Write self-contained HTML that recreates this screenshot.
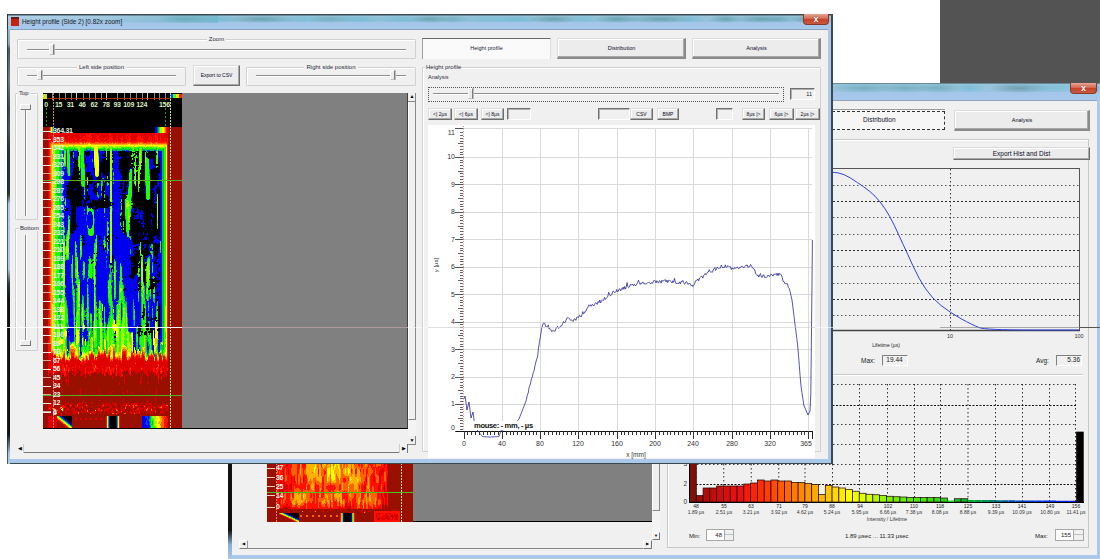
<!DOCTYPE html><html><head><meta charset="utf-8"><style>*{margin:0;padding:0;box-sizing:border-box}
html,body{width:1100px;height:559px;overflow:hidden;background:#fff;position:relative;font-family:"Liberation Sans",sans-serif;font-size:6px;color:#222}
.a{position:absolute}
.t{position:absolute;white-space:nowrap;font-size:6px;color:#2a2a3a;line-height:1}
svg{position:absolute;left:0;top:0}
</style></head><body>
<div class="a" style="left:940px;top:0px;width:160px;height:83px;background:#535353"></div>
<div class="a" style="left:228px;top:83px;width:872px;height:476px;background:#a9c8ea"></div>
<div class="a" style="left:228px;top:463px;width:4px;height:96px;background:linear-gradient(#101010 0%,#101010 70%,#8ab0d8 85%,#a9c8ea 100%)"></div>
<div class="a" style="left:831px;top:83px;width:269px;height:17px;background:linear-gradient(#b4d2e6 0%,#a6cbe6 40%,#a4c6ea 60%,#a8c8ec 100%)"></div>
<div class="a" style="left:831px;top:83px;width:66px;height:10px;background:radial-gradient(ellipse at center,rgba(80,150,160,0.5),rgba(0,0,0,0) 72%)"></div>
<div class="a" style="left:877px;top:83px;width:57px;height:10px;background:radial-gradient(ellipse at center,rgba(80,150,160,0.5),rgba(0,0,0,0) 72%)"></div>
<div class="a" style="left:915px;top:83px;width:49px;height:10px;background:radial-gradient(ellipse at center,rgba(80,150,160,0.5),rgba(0,0,0,0) 72%)"></div>
<div class="a" style="left:954px;top:83px;width:32px;height:10px;background:radial-gradient(ellipse at center,rgba(100,190,220,0.6),rgba(0,0,0,0) 72%)"></div>
<div class="a" style="left:988px;top:83px;width:63px;height:10px;background:radial-gradient(ellipse at center,rgba(45,95,100,0.45),rgba(0,0,0,0) 72%)"></div>
<div class="a" style="left:1025px;top:83px;width:57px;height:10px;background:radial-gradient(ellipse at center,rgba(110,195,225,0.55),rgba(0,0,0,0) 72%)"></div>
<div class="a" style="left:1073px;top:83px;width:27px;height:10px;background:radial-gradient(ellipse at center,rgba(45,95,100,0.45),rgba(0,0,0,0) 72%)"></div>
<div class="a" style="left:1095px;top:83px;width:5px;height:10px;background:radial-gradient(ellipse at center,rgba(110,195,225,0.55),rgba(0,0,0,0) 72%)"></div>
<div class="a" style="left:831px;top:83px;width:269px;height:9px;background:linear-gradient(rgba(100,170,190,0.35),rgba(100,170,190,0.15))"></div>
<div class="a" style="left:831px;top:83px;width:269px;height:1px;background:rgba(70,90,100,0.55)"></div>
<div class="a" style="left:232px;top:100px;width:865px;height:455px;background:#f0f0f0;border-top:1px solid #90a4bc"></div>
<div class="a" style="left:1070px;top:83px;width:27px;height:11px;background:linear-gradient(#e8a594,#d46a55 45%,#c4442c 55%,#c85a40);border:1px solid #8a3a2a;border-top:0;border-radius:0 0 4px 4px"></div>
<div class="t" style="left:1070px;top:83px;width:27px;height:11px;line-height:11px;text-align:center;font-size:9px;font-weight:bold;color:#fff;text-shadow:0 0 1px #501010">x</div>
<div class="a" style="left:267px;top:463px;width:385px;height:59px;background:#808080;border-bottom:1px solid #000"></div>
<svg width="1100" height="559" shape-rendering="crispEdges"><rect x="267" y="463" width="146" height="59" fill="#000000"/><path fill="#0000f0" d="M267 463v59h1v-59zM268 463v59h1v-59zM269 463v59h1v-59zM270 463v59h1v-59zM271 463v59h1v-59zM272 463v59h1v-59zM273 463v59h1v-59zM274 463v59h1v-59zM275 463v59h1v-59zM276 463v59h1v-59zM277 463v59h1v-59zM278 463v59h1v-59zM279 463v59h1v-59zM280 463v59h1v-59zM281 463v59h1v-59zM282 463v59h1v-59zM283 463v59h1v-59zM284 463v59h1v-59zM285 463v59h1v-59zM286 463v59h1v-59zM287 463v50h1v-50zM287 514v8h1v-8zM288 463v50h1v-50zM288 514v8h1v-8zM289 463v50h1v-50zM289 515v7h1v-7zM290 463v50h1v-50zM290 515v7h1v-7zM291 463v50h1v-50zM291 516v6h1v-6zM292 463v50h1v-50zM292 516v6h1v-6zM293 463v50h1v-50zM293 517v5h1v-5zM294 463v50h1v-50zM294 517v5h1v-5zM295 463v50h1v-50zM295 518v4h1v-4zM296 463v50h1v-50zM296 518v4h1v-4zM297 463v50h1v-50zM297 518v4h1v-4zM298 463v50h1v-50zM298 519v3h1v-3zM299 463v59h1v-59zM300 463v59h1v-59zM301 463v59h1v-59zM302 463v59h1v-59zM303 463v59h1v-59zM304 463v59h1v-59zM305 463v59h1v-59zM306 463v59h1v-59zM307 463v59h1v-59zM308 463v59h1v-59zM309 463v59h1v-59zM310 463v59h1v-59zM311 463v59h1v-59zM312 463v59h1v-59zM313 463v59h1v-59zM314 463v59h1v-59zM315 463v59h1v-59zM316 463v59h1v-59zM317 463v59h1v-59zM318 463v59h1v-59zM319 463v59h1v-59zM320 463v59h1v-59zM321 463v59h1v-59zM322 463v59h1v-59zM323 463v59h1v-59zM324 463v59h1v-59zM325 463v59h1v-59zM326 463v59h1v-59zM327 463v59h1v-59zM328 463v59h1v-59zM329 463v59h1v-59zM330 463v59h1v-59zM331 463v59h1v-59zM332 463v59h1v-59zM333 463v59h1v-59zM334 463v59h1v-59zM335 463v59h1v-59zM336 463v59h1v-59zM337 463v59h1v-59zM338 463v59h1v-59zM339 463v59h1v-59zM340 463v59h1v-59zM341 463v59h1v-59zM342 463v59h1v-59zM343 463v59h1v-59zM344 463v50h1v-50zM345 463v50h1v-50zM346 463v50h1v-50zM347 463v50h1v-50zM348 463v50h1v-50zM349 463v50h1v-50zM350 463v50h1v-50zM351 463v59h1v-59zM352 463v59h1v-59zM353 463v59h1v-59zM354 463v59h1v-59zM355 463v59h1v-59zM356 463v59h1v-59zM357 463v59h1v-59zM358 463v59h1v-59zM359 463v59h1v-59zM360 463v59h1v-59zM361 463v59h1v-59zM362 463v59h1v-59zM363 463v59h1v-59zM364 463v59h1v-59zM365 463v59h1v-59zM366 463v59h1v-59zM367 463v59h1v-59zM368 463v59h1v-59zM369 463v59h1v-59zM370 463v59h1v-59zM371 463v59h1v-59zM372 463v59h1v-59zM373 463v59h1v-59zM374 463v59h1v-59zM375 463v59h1v-59zM376 463v59h1v-59zM377 463v59h1v-59zM378 463v59h1v-59zM379 463v59h1v-59zM380 463v59h1v-59zM381 463v59h1v-59zM382 463v59h1v-59zM383 463v59h1v-59zM384 463v59h1v-59zM385 463v59h1v-59zM386 463v59h1v-59zM387 463v59h1v-59zM388 463v59h1v-59zM389 463v59h1v-59zM390 463v59h1v-59zM391 463v59h1v-59zM392 463v59h1v-59zM393 463v59h1v-59zM394 463v59h1v-59zM395 463v59h1v-59zM396 463v59h1v-59zM397 463v59h1v-59zM398 463v59h1v-59zM399 463v59h1v-59zM400 463v59h1v-59zM401 463v59h1v-59zM402 463v59h1v-59zM403 463v59h1v-59zM404 463v59h1v-59zM405 463v59h1v-59zM406 463v59h1v-59zM407 463v59h1v-59zM408 463v59h1v-59zM409 463v59h1v-59zM410 463v59h1v-59zM411 463v59h1v-59zM412 463v59h1v-59z"/><path fill="#0040ff" d="M267 463v59h1v-59zM268 463v59h1v-59zM269 463v59h1v-59zM270 463v59h1v-59zM271 463v59h1v-59zM272 463v59h1v-59zM273 463v59h1v-59zM274 463v59h1v-59zM275 463v59h1v-59zM276 463v59h1v-59zM277 463v59h1v-59zM278 463v59h1v-59zM279 463v59h1v-59zM280 463v59h1v-59zM281 463v59h1v-59zM282 463v59h1v-59zM283 463v59h1v-59zM284 463v59h1v-59zM285 463v50h1v-50zM285 514v8h1v-8zM286 463v50h1v-50zM286 514v8h1v-8zM287 463v50h1v-50zM287 515v7h1v-7zM288 463v50h1v-50zM288 515v7h1v-7zM289 463v50h1v-50zM289 516v6h1v-6zM290 463v50h1v-50zM290 516v6h1v-6zM291 463v50h1v-50zM291 517v5h1v-5zM292 463v50h1v-50zM292 517v5h1v-5zM293 463v50h1v-50zM293 518v4h1v-4zM294 463v50h1v-50zM294 518v4h1v-4zM295 463v50h1v-50zM295 519v3h1v-3zM296 463v50h1v-50zM296 519v3h1v-3zM297 463v50h1v-50zM297 519v3h1v-3zM298 463v50h1v-50zM298 520v2h1v-2zM299 463v59h1v-59zM300 463v59h1v-59zM301 463v59h1v-59zM302 463v59h1v-59zM303 463v59h1v-59zM304 463v59h1v-59zM305 463v59h1v-59zM306 463v59h1v-59zM307 463v59h1v-59zM308 463v59h1v-59zM309 463v59h1v-59zM310 463v59h1v-59zM311 463v59h1v-59zM312 463v59h1v-59zM313 463v59h1v-59zM314 463v59h1v-59zM315 463v59h1v-59zM316 463v59h1v-59zM317 463v59h1v-59zM318 463v59h1v-59zM319 463v59h1v-59zM320 463v59h1v-59zM321 463v59h1v-59zM322 463v59h1v-59zM323 463v59h1v-59zM324 463v59h1v-59zM325 463v59h1v-59zM326 463v59h1v-59zM327 463v59h1v-59zM328 463v59h1v-59zM329 463v59h1v-59zM330 463v59h1v-59zM331 463v59h1v-59zM332 463v59h1v-59zM333 463v59h1v-59zM334 463v59h1v-59zM335 463v59h1v-59zM336 463v59h1v-59zM337 463v59h1v-59zM338 463v59h1v-59zM339 463v59h1v-59zM340 463v59h1v-59zM341 463v59h1v-59zM342 463v59h1v-59zM343 463v50h1v-50zM344 463v50h1v-50zM345 463v50h1v-50zM346 463v50h1v-50zM347 463v50h1v-50zM348 463v50h1v-50zM349 463v50h1v-50zM350 463v50h1v-50zM351 463v50h1v-50zM352 463v59h1v-59zM353 463v59h1v-59zM354 463v59h1v-59zM355 463v59h1v-59zM356 463v59h1v-59zM357 463v59h1v-59zM358 463v59h1v-59zM359 463v59h1v-59zM360 463v59h1v-59zM361 463v59h1v-59zM362 463v59h1v-59zM363 463v59h1v-59zM364 463v59h1v-59zM365 463v59h1v-59zM366 463v59h1v-59zM367 463v59h1v-59zM368 463v59h1v-59zM369 463v59h1v-59zM370 463v59h1v-59zM371 463v59h1v-59zM372 463v59h1v-59zM373 463v59h1v-59zM374 463v59h1v-59zM375 463v59h1v-59zM376 463v59h1v-59zM377 463v59h1v-59zM378 463v59h1v-59zM379 463v59h1v-59zM380 463v59h1v-59zM381 463v59h1v-59zM382 463v59h1v-59zM383 463v59h1v-59zM384 463v59h1v-59zM385 463v59h1v-59zM386 463v59h1v-59zM387 463v59h1v-59zM388 463v59h1v-59zM389 463v59h1v-59zM390 463v59h1v-59zM391 463v59h1v-59zM392 463v59h1v-59zM393 463v59h1v-59zM394 463v59h1v-59zM395 463v59h1v-59zM396 463v59h1v-59zM397 463v59h1v-59zM398 463v59h1v-59zM399 463v59h1v-59zM400 463v59h1v-59zM401 463v59h1v-59zM402 463v59h1v-59zM403 463v59h1v-59zM404 463v59h1v-59zM405 463v59h1v-59zM406 463v59h1v-59zM407 463v59h1v-59zM408 463v59h1v-59zM409 463v59h1v-59zM410 463v59h1v-59zM411 463v59h1v-59zM412 463v59h1v-59z"/><path fill="#00c040" d="M267 463v59h1v-59zM268 463v59h1v-59zM269 463v59h1v-59zM270 463v59h1v-59zM271 463v59h1v-59zM272 463v59h1v-59zM273 463v59h1v-59zM274 463v59h1v-59zM275 463v59h1v-59zM276 463v59h1v-59zM277 463v59h1v-59zM278 463v59h1v-59zM279 463v59h1v-59zM280 463v59h1v-59zM281 463v59h1v-59zM282 463v59h1v-59zM283 463v59h1v-59zM284 463v50h1v-50zM284 514v8h1v-8zM285 463v50h1v-50zM285 514v8h1v-8zM286 463v50h1v-50zM286 515v7h1v-7zM287 463v50h1v-50zM287 515v7h1v-7zM288 463v50h1v-50zM288 516v6h1v-6zM289 463v50h1v-50zM289 516v6h1v-6zM290 463v50h1v-50zM290 516v6h1v-6zM291 463v50h1v-50zM291 517v5h1v-5zM292 463v50h1v-50zM292 517v5h1v-5zM293 463v50h1v-50zM293 518v4h1v-4zM294 463v50h1v-50zM294 518v4h1v-4zM295 463v50h1v-50zM295 519v3h1v-3zM296 463v50h1v-50zM296 519v3h1v-3zM297 463v50h1v-50zM297 520v2h1v-2zM298 463v50h1v-50zM298 520v2h1v-2zM299 463v59h1v-59zM300 463v59h1v-59zM301 463v59h1v-59zM302 463v59h1v-59zM303 463v59h1v-59zM304 463v59h1v-59zM305 463v59h1v-59zM306 463v59h1v-59zM307 463v59h1v-59zM308 463v59h1v-59zM309 463v59h1v-59zM310 463v59h1v-59zM311 463v59h1v-59zM312 463v59h1v-59zM313 463v59h1v-59zM314 463v59h1v-59zM315 463v59h1v-59zM316 463v59h1v-59zM317 463v59h1v-59zM318 463v59h1v-59zM319 463v59h1v-59zM320 463v59h1v-59zM321 463v59h1v-59zM322 463v59h1v-59zM323 463v59h1v-59zM324 463v59h1v-59zM325 463v59h1v-59zM326 463v59h1v-59zM327 463v59h1v-59zM328 463v59h1v-59zM329 463v59h1v-59zM330 463v59h1v-59zM331 463v59h1v-59zM332 463v59h1v-59zM333 463v59h1v-59zM334 463v59h1v-59zM335 463v59h1v-59zM336 463v59h1v-59zM337 463v59h1v-59zM338 463v59h1v-59zM339 463v59h1v-59zM340 463v59h1v-59zM341 463v59h1v-59zM342 463v59h1v-59zM343 463v50h1v-50zM344 463v50h1v-50zM345 463v50h1v-50zM346 463v50h1v-50zM347 463v50h1v-50zM348 463v50h1v-50zM349 463v50h1v-50zM350 463v50h1v-50zM351 463v50h1v-50zM352 463v59h1v-59zM353 463v59h1v-59zM354 463v59h1v-59zM355 463v59h1v-59zM356 463v59h1v-59zM357 463v59h1v-59zM358 463v59h1v-59zM359 463v59h1v-59zM360 463v59h1v-59zM361 463v59h1v-59zM362 463v59h1v-59zM363 463v59h1v-59zM364 463v59h1v-59zM365 463v59h1v-59zM366 463v59h1v-59zM367 463v59h1v-59zM368 463v59h1v-59zM369 463v59h1v-59zM370 463v59h1v-59zM371 463v59h1v-59zM372 463v59h1v-59zM373 463v59h1v-59zM374 463v59h1v-59zM375 463v59h1v-59zM376 463v59h1v-59zM377 463v59h1v-59zM378 463v59h1v-59zM379 463v59h1v-59zM380 463v59h1v-59zM381 463v59h1v-59zM382 463v59h1v-59zM383 463v59h1v-59zM384 463v59h1v-59zM385 463v59h1v-59zM386 463v59h1v-59zM387 463v59h1v-59zM388 463v59h1v-59zM389 463v59h1v-59zM390 463v59h1v-59zM391 463v59h1v-59zM392 463v59h1v-59zM393 463v59h1v-59zM394 463v59h1v-59zM395 463v59h1v-59zM396 463v59h1v-59zM397 463v59h1v-59zM398 463v59h1v-59zM399 463v59h1v-59zM400 463v59h1v-59zM401 463v59h1v-59zM402 463v59h1v-59zM403 463v59h1v-59zM404 463v59h1v-59zM405 463v59h1v-59zM406 463v59h1v-59zM407 463v59h1v-59zM408 463v59h1v-59zM409 463v59h1v-59zM410 463v59h1v-59zM411 463v59h1v-59zM412 463v59h1v-59z"/><path fill="#20ff00" d="M267 463v59h1v-59zM268 463v59h1v-59zM269 463v59h1v-59zM270 463v59h1v-59zM271 463v59h1v-59zM272 463v59h1v-59zM273 463v59h1v-59zM274 463v59h1v-59zM275 463v59h1v-59zM276 463v59h1v-59zM277 463v59h1v-59zM278 463v59h1v-59zM279 463v59h1v-59zM280 463v59h1v-59zM281 463v59h1v-59zM282 463v59h1v-59zM283 463v50h1v-50zM283 514v8h1v-8zM284 463v50h1v-50zM284 514v8h1v-8zM285 463v50h1v-50zM285 514v8h1v-8zM286 463v50h1v-50zM286 515v7h1v-7zM287 463v50h1v-50zM287 515v7h1v-7zM288 463v50h1v-50zM288 516v6h1v-6zM289 463v50h1v-50zM289 516v6h1v-6zM290 463v50h1v-50zM290 517v5h1v-5zM291 463v50h1v-50zM291 517v5h1v-5zM292 463v50h1v-50zM292 518v4h1v-4zM293 463v50h1v-50zM293 518v4h1v-4zM294 463v50h1v-50zM294 519v3h1v-3zM295 463v50h1v-50zM295 519v3h1v-3zM296 463v50h1v-50zM296 520v2h1v-2zM297 463v50h1v-50zM297 520v2h1v-2zM298 463v50h1v-50zM298 521v1h1v-1zM299 463v59h1v-59zM300 463v59h1v-59zM301 463v59h1v-59zM302 463v59h1v-59zM303 463v59h1v-59zM304 463v59h1v-59zM305 463v59h1v-59zM306 463v59h1v-59zM307 463v59h1v-59zM308 463v59h1v-59zM309 463v59h1v-59zM310 463v59h1v-59zM311 463v59h1v-59zM312 463v59h1v-59zM313 463v59h1v-59zM314 463v59h1v-59zM315 463v59h1v-59zM316 463v59h1v-59zM317 463v59h1v-59zM318 463v59h1v-59zM319 463v59h1v-59zM320 463v59h1v-59zM321 463v59h1v-59zM322 463v59h1v-59zM323 463v59h1v-59zM324 463v59h1v-59zM325 463v59h1v-59zM326 463v59h1v-59zM327 463v59h1v-59zM328 463v59h1v-59zM329 463v59h1v-59zM330 463v59h1v-59zM331 463v59h1v-59zM332 463v59h1v-59zM333 463v59h1v-59zM334 463v59h1v-59zM335 463v59h1v-59zM336 463v59h1v-59zM337 463v59h1v-59zM338 463v59h1v-59zM339 463v59h1v-59zM340 463v59h1v-59zM341 463v59h1v-59zM342 463v59h1v-59zM343 463v50h1v-50zM344 463v50h1v-50zM345 463v50h1v-50zM346 463v50h1v-50zM347 463v50h1v-50zM348 463v50h1v-50zM349 463v50h1v-50zM350 463v50h1v-50zM351 463v50h1v-50zM352 463v59h1v-59zM353 463v59h1v-59zM354 463v59h1v-59zM355 463v59h1v-59zM356 463v59h1v-59zM357 463v59h1v-59zM358 463v59h1v-59zM359 463v59h1v-59zM360 463v59h1v-59zM361 463v59h1v-59zM362 463v59h1v-59zM363 463v59h1v-59zM364 463v59h1v-59zM365 463v59h1v-59zM366 463v59h1v-59zM367 463v59h1v-59zM368 463v59h1v-59zM369 463v59h1v-59zM370 463v59h1v-59zM371 463v59h1v-59zM372 463v59h1v-59zM373 463v59h1v-59zM374 463v59h1v-59zM375 463v59h1v-59zM376 463v59h1v-59zM377 463v59h1v-59zM378 463v59h1v-59zM379 463v59h1v-59zM380 463v59h1v-59zM381 463v59h1v-59zM382 463v59h1v-59zM383 463v59h1v-59zM384 463v59h1v-59zM385 463v59h1v-59zM386 463v59h1v-59zM387 463v59h1v-59zM388 463v59h1v-59zM389 463v59h1v-59zM390 463v59h1v-59zM391 463v59h1v-59zM392 463v59h1v-59zM393 463v59h1v-59zM394 463v59h1v-59zM395 463v59h1v-59zM396 463v59h1v-59zM397 463v59h1v-59zM398 463v59h1v-59zM399 463v59h1v-59zM400 463v59h1v-59zM401 463v59h1v-59zM402 463v59h1v-59zM403 463v59h1v-59zM404 463v59h1v-59zM405 463v59h1v-59zM406 463v59h1v-59zM407 463v59h1v-59zM408 463v59h1v-59zM409 463v59h1v-59zM410 463v59h1v-59zM411 463v59h1v-59zM412 463v59h1v-59z"/><path fill="#a0ff00" d="M267 463v59h1v-59zM268 463v59h1v-59zM269 463v59h1v-59zM270 463v59h1v-59zM271 463v59h1v-59zM272 463v59h1v-59zM273 463v59h1v-59zM274 463v59h1v-59zM275 463v59h1v-59zM276 463v59h1v-59zM277 463v59h1v-59zM278 463v59h1v-59zM279 463v59h1v-59zM280 463v59h1v-59zM281 463v59h1v-59zM282 463v59h1v-59zM283 463v50h1v-50zM283 514v8h1v-8zM284 463v50h1v-50zM284 514v8h1v-8zM285 463v50h1v-50zM285 515v7h1v-7zM286 463v50h1v-50zM286 515v7h1v-7zM287 463v50h1v-50zM287 516v6h1v-6zM288 463v50h1v-50zM288 516v6h1v-6zM289 463v50h1v-50zM289 517v5h1v-5zM290 463v50h1v-50zM290 517v5h1v-5zM291 463v50h1v-50zM291 518v4h1v-4zM292 463v50h1v-50zM292 518v4h1v-4zM293 463v50h1v-50zM293 519v3h1v-3zM294 463v50h1v-50zM294 519v3h1v-3zM295 463v50h1v-50zM295 520v2h1v-2zM296 463v50h1v-50zM296 520v2h1v-2zM297 463v50h1v-50zM297 520v2h1v-2zM298 463v50h1v-50zM298 521v1h1v-1zM299 463v59h1v-59zM300 463v59h1v-59zM301 463v59h1v-59zM302 463v59h1v-59zM303 463v59h1v-59zM304 463v59h1v-59zM305 463v59h1v-59zM306 463v59h1v-59zM307 463v59h1v-59zM308 463v59h1v-59zM309 463v59h1v-59zM310 463v59h1v-59zM311 463v59h1v-59zM312 463v59h1v-59zM313 463v59h1v-59zM314 463v59h1v-59zM315 463v59h1v-59zM316 463v59h1v-59zM317 463v59h1v-59zM318 463v59h1v-59zM319 463v59h1v-59zM320 463v59h1v-59zM321 463v59h1v-59zM322 463v59h1v-59zM323 463v59h1v-59zM324 463v59h1v-59zM325 463v59h1v-59zM326 463v59h1v-59zM327 463v59h1v-59zM328 463v59h1v-59zM329 463v59h1v-59zM330 463v59h1v-59zM331 463v59h1v-59zM332 463v59h1v-59zM333 463v59h1v-59zM334 463v59h1v-59zM335 463v59h1v-59zM336 463v59h1v-59zM337 463v59h1v-59zM338 463v59h1v-59zM339 463v59h1v-59zM340 463v59h1v-59zM341 463v59h1v-59zM342 463v50h1v-50zM343 463v50h1v-50zM344 463v50h1v-50zM345 463v50h1v-50zM346 463v50h1v-50zM347 463v50h1v-50zM348 463v50h1v-50zM349 463v50h1v-50zM350 463v50h1v-50zM351 463v50h1v-50zM352 463v50h1v-50zM353 463v59h1v-59zM354 463v59h1v-59zM355 463v59h1v-59zM356 463v59h1v-59zM357 463v59h1v-59zM358 463v59h1v-59zM359 463v59h1v-59zM360 463v59h1v-59zM361 463v59h1v-59zM362 463v59h1v-59zM363 463v59h1v-59zM364 463v59h1v-59zM365 463v59h1v-59zM366 463v59h1v-59zM367 463v59h1v-59zM368 463v59h1v-59zM369 463v59h1v-59zM370 463v59h1v-59zM371 463v59h1v-59zM372 463v59h1v-59zM373 463v59h1v-59zM374 463v59h1v-59zM375 463v59h1v-59zM376 463v59h1v-59zM377 463v59h1v-59zM378 463v59h1v-59zM379 463v59h1v-59zM380 463v59h1v-59zM381 463v59h1v-59zM382 463v59h1v-59zM383 463v59h1v-59zM384 463v59h1v-59zM385 463v59h1v-59zM386 463v59h1v-59zM387 463v59h1v-59zM388 463v59h1v-59zM389 463v59h1v-59zM390 463v59h1v-59zM391 463v59h1v-59zM392 463v59h1v-59zM393 463v59h1v-59zM394 463v59h1v-59zM395 463v59h1v-59zM396 463v59h1v-59zM397 463v59h1v-59zM398 463v59h1v-59zM399 463v59h1v-59zM400 463v59h1v-59zM401 463v59h1v-59zM402 463v59h1v-59zM403 463v59h1v-59zM404 463v59h1v-59zM405 463v59h1v-59zM406 463v59h1v-59zM407 463v59h1v-59zM408 463v59h1v-59zM409 463v59h1v-59zM410 463v59h1v-59zM411 463v59h1v-59zM412 463v59h1v-59z"/><path fill="#ffff00" d="M267 463v59h1v-59zM268 463v59h1v-59zM269 463v59h1v-59zM270 463v59h1v-59zM271 463v59h1v-59zM272 463v59h1v-59zM273 463v59h1v-59zM274 463v59h1v-59zM275 463v59h1v-59zM276 463v59h1v-59zM277 463v59h1v-59zM278 463v59h1v-59zM279 463v59h1v-59zM280 463v59h1v-59zM281 463v59h1v-59zM282 463v50h1v-50zM282 514v8h1v-8zM283 463v50h1v-50zM283 514v8h1v-8zM284 463v50h1v-50zM284 515v7h1v-7zM285 463v50h1v-50zM285 515v7h1v-7zM286 463v50h1v-50zM286 516v6h1v-6zM287 463v50h1v-50zM287 516v6h1v-6zM288 463v50h1v-50zM288 517v5h1v-5zM289 463v50h1v-50zM289 517v5h1v-5zM290 463v50h1v-50zM290 518v4h1v-4zM291 463v50h1v-50zM291 518v4h1v-4zM292 463v50h1v-50zM292 519v3h1v-3zM293 463v50h1v-50zM293 519v3h1v-3zM294 463v50h1v-50zM294 519v3h1v-3zM295 463v50h1v-50zM295 520v2h1v-2zM296 463v50h1v-50zM296 520v2h1v-2zM297 463v50h1v-50zM297 521v1h1v-1zM298 463v50h1v-50zM298 521v1h1v-1zM299 463v59h1v-59zM300 463v59h1v-59zM301 463v59h1v-59zM302 463v59h1v-59zM303 463v59h1v-59zM304 463v59h1v-59zM305 463v59h1v-59zM306 463v59h1v-59zM307 463v59h1v-59zM308 463v59h1v-59zM309 463v59h1v-59zM310 463v59h1v-59zM311 463v59h1v-59zM312 463v59h1v-59zM313 463v59h1v-59zM314 463v59h1v-59zM315 465v57h1v-57zM316 463v59h1v-59zM317 463v59h1v-59zM318 463v59h1v-59zM319 463v59h1v-59zM320 463v59h1v-59zM321 463v59h1v-59zM322 463v59h1v-59zM323 463v59h1v-59zM324 463v59h1v-59zM325 463v59h1v-59zM326 463v59h1v-59zM327 463v59h1v-59zM328 463v59h1v-59zM329 463v59h1v-59zM330 463v59h1v-59zM331 463v59h1v-59zM332 463v59h1v-59zM333 463v59h1v-59zM334 463v59h1v-59zM335 463v59h1v-59zM336 463v59h1v-59zM337 463v59h1v-59zM338 463v59h1v-59zM339 463v59h1v-59zM340 463v59h1v-59zM341 463v59h1v-59zM342 463v50h1v-50zM343 463v50h1v-50zM344 463v50h1v-50zM345 463v50h1v-50zM346 463v50h1v-50zM347 463v50h1v-50zM348 463v50h1v-50zM349 463v50h1v-50zM350 463v50h1v-50zM351 463v50h1v-50zM352 463v50h1v-50zM353 463v59h1v-59zM354 463v59h1v-59zM355 463v59h1v-59zM356 463v59h1v-59zM357 463v59h1v-59zM358 463v59h1v-59zM359 463v59h1v-59zM360 463v59h1v-59zM361 463v59h1v-59zM362 463v59h1v-59zM363 463v59h1v-59zM364 463v59h1v-59zM365 463v59h1v-59zM366 463v59h1v-59zM367 463v59h1v-59zM368 463v59h1v-59zM369 463v59h1v-59zM370 463v59h1v-59zM371 463v59h1v-59zM372 463v59h1v-59zM373 463v59h1v-59zM374 463v59h1v-59zM375 463v59h1v-59zM376 463v59h1v-59zM377 463v59h1v-59zM378 463v59h1v-59zM379 463v59h1v-59zM380 463v59h1v-59zM381 463v59h1v-59zM382 463v59h1v-59zM383 463v59h1v-59zM384 463v59h1v-59zM385 463v59h1v-59zM386 463v59h1v-59zM387 463v59h1v-59zM388 463v59h1v-59zM389 463v59h1v-59zM390 463v59h1v-59zM391 463v59h1v-59zM392 463v59h1v-59zM393 463v59h1v-59zM394 463v59h1v-59zM395 463v59h1v-59zM396 463v59h1v-59zM397 463v59h1v-59zM398 463v59h1v-59zM399 463v59h1v-59zM400 463v59h1v-59zM401 463v59h1v-59zM402 463v59h1v-59zM403 463v59h1v-59zM404 463v59h1v-59zM405 463v59h1v-59zM406 463v59h1v-59zM407 463v59h1v-59zM408 463v59h1v-59zM409 463v59h1v-59zM410 463v59h1v-59zM411 463v59h1v-59zM412 463v59h1v-59z"/><path fill="#ffb000" d="M267 463v59h1v-59zM268 463v59h1v-59zM269 463v59h1v-59zM270 463v59h1v-59zM271 463v59h1v-59zM272 463v59h1v-59zM273 463v59h1v-59zM274 463v59h1v-59zM275 463v59h1v-59zM276 463v59h1v-59zM277 463v59h1v-59zM278 463v59h1v-59zM279 463v59h1v-59zM280 463v59h1v-59zM281 463v50h1v-50zM281 514v8h1v-8zM282 463v50h1v-50zM282 514v8h1v-8zM283 463v50h1v-50zM283 515v7h1v-7zM284 463v50h1v-50zM284 515v7h1v-7zM285 463v50h1v-50zM285 516v6h1v-6zM286 463v50h1v-50zM286 516v6h1v-6zM287 463v50h1v-50zM287 517v5h1v-5zM288 463v50h1v-50zM288 517v5h1v-5zM289 463v50h1v-50zM289 518v4h1v-4zM290 463v50h1v-50zM290 518v4h1v-4zM291 463v50h1v-50zM291 518v4h1v-4zM292 463v50h1v-50zM292 519v3h1v-3zM293 463v50h1v-50zM293 519v3h1v-3zM294 463v50h1v-50zM294 520v2h1v-2zM295 463v50h1v-50zM295 520v2h1v-2zM296 463v50h1v-50zM296 521v1h1v-1zM297 463v50h1v-50zM297 521v1h1v-1zM298 463v50h1v-50zM299 463v59h1v-59zM300 463v59h1v-59zM301 463v59h1v-59zM302 463v59h1v-59zM303 463v31h1v-31zM303 498v24h1v-24zM304 463v59h1v-59zM305 463v59h1v-59zM306 463v59h1v-59zM307 463v59h1v-59zM308 463v59h1v-59zM309 463v59h1v-59zM310 463v59h1v-59zM311 463v59h1v-59zM312 463v59h1v-59zM313 463v59h1v-59zM314 463v4h1v-4zM314 473v49h1v-49zM315 469v53h1v-53zM316 463v59h1v-59zM317 463v59h1v-59zM318 463v59h1v-59zM319 463v59h1v-59zM320 463v59h1v-59zM321 463v59h1v-59zM322 463v59h1v-59zM323 463v59h1v-59zM324 465v57h1v-57zM325 463v59h1v-59zM326 463v59h1v-59zM327 463v5h1v-5zM327 481v41h1v-41zM328 463v5h1v-5zM328 477v45h1v-45zM329 463v5h1v-5zM329 475v47h1v-47zM330 463v59h1v-59zM331 479v43h1v-43zM332 481v41h1v-41zM333 463v7h1v-7zM333 481v41h1v-41zM334 463v3h1v-3zM334 470v4h1v-4zM334 480v42h1v-42zM335 467v55h1v-55zM336 463v59h1v-59zM337 465v57h1v-57zM338 469v53h1v-53zM339 463v4h1v-4zM339 480v42h1v-42zM340 463v59h1v-59zM341 463v59h1v-59zM342 463v50h1v-50zM343 463v50h1v-50zM344 463v50h1v-50zM345 463v6h1v-6zM345 473v40h1v-40zM346 463v50h1v-50zM347 463v50h1v-50zM348 463v5h1v-5zM348 474v13h1v-13zM348 488v25h1v-25zM349 463v6h1v-6zM349 473v40h1v-40zM350 463v14h1v-14zM350 481v32h1v-32zM351 463v16h1v-16zM351 480v33h1v-33zM352 463v50h1v-50zM353 463v59h1v-59zM354 463v59h1v-59zM355 463v59h1v-59zM356 463v59h1v-59zM357 463v16h1v-16zM357 482v40h1v-40zM358 463v59h1v-59zM359 463v59h1v-59zM360 463v59h1v-59zM361 463v59h1v-59zM362 463v59h1v-59zM363 463v59h1v-59zM364 463v59h1v-59zM365 463v59h1v-59zM366 463v59h1v-59zM367 463v59h1v-59zM368 463v59h1v-59zM369 463v59h1v-59zM370 463v59h1v-59zM371 463v59h1v-59zM372 463v59h1v-59zM373 463v59h1v-59zM374 463v59h1v-59zM375 463v59h1v-59zM376 463v59h1v-59zM377 463v59h1v-59zM378 463v59h1v-59zM379 463v59h1v-59zM380 463v59h1v-59zM381 463v59h1v-59zM382 463v59h1v-59zM383 463v59h1v-59zM384 463v59h1v-59zM385 463v59h1v-59zM386 463v59h1v-59zM387 463v59h1v-59zM388 463v59h1v-59zM389 463v59h1v-59zM390 463v59h1v-59zM391 463v59h1v-59zM392 463v59h1v-59zM393 463v59h1v-59zM394 463v59h1v-59zM395 463v59h1v-59zM396 463v59h1v-59zM397 463v59h1v-59zM398 463v59h1v-59zM399 463v59h1v-59zM400 463v59h1v-59zM401 463v59h1v-59zM402 463v59h1v-59zM403 463v59h1v-59zM404 463v59h1v-59zM405 463v59h1v-59zM406 463v59h1v-59zM407 463v59h1v-59zM408 463v59h1v-59zM409 463v59h1v-59zM410 463v59h1v-59zM411 463v59h1v-59zM412 463v59h1v-59z"/><path fill="#ff6000" d="M267 463v59h1v-59zM268 463v59h1v-59zM269 463v59h1v-59zM270 463v59h1v-59zM271 463v59h1v-59zM272 463v59h1v-59zM273 463v59h1v-59zM274 463v59h1v-59zM275 463v59h1v-59zM276 463v59h1v-59zM277 463v59h1v-59zM278 463v59h1v-59zM279 463v59h1v-59zM280 463v50h1v-50zM280 514v8h1v-8zM281 463v50h1v-50zM281 514v8h1v-8zM282 463v50h1v-50zM282 515v7h1v-7zM283 463v50h1v-50zM283 515v7h1v-7zM284 463v50h1v-50zM284 516v6h1v-6zM285 463v50h1v-50zM285 516v6h1v-6zM286 463v50h1v-50zM286 517v5h1v-5zM287 463v50h1v-50zM287 517v5h1v-5zM288 463v50h1v-50zM288 517v5h1v-5zM289 463v50h1v-50zM289 518v4h1v-4zM290 463v50h1v-50zM290 518v4h1v-4zM291 463v32h1v-32zM291 499v14h1v-14zM291 519v3h1v-3zM292 463v38h1v-38zM292 504v9h1v-9zM292 519v3h1v-3zM293 463v37h1v-37zM293 505v8h1v-8zM293 520v2h1v-2zM294 463v29h1v-29zM294 505v8h1v-8zM294 520v2h1v-2zM295 463v29h1v-29zM295 501v12h1v-12zM295 521v1h1v-1zM296 463v29h1v-29zM296 500v13h1v-13zM296 521v1h1v-1zM297 463v29h1v-29zM297 503v10h1v-10zM298 463v32h1v-32zM298 505v8h1v-8zM299 463v31h1v-31zM299 505v17h1v-17zM300 474v18h1v-18zM300 504v18h1v-18zM301 463v37h1v-37zM301 503v19h1v-19zM302 463v38h1v-38zM302 502v9h1v-9zM302 512v10h1v-10zM303 463v28h1v-28zM303 502v20h1v-20zM304 463v30h1v-30zM304 500v22h1v-22zM305 463v31h1v-31zM305 499v23h1v-23zM306 474v13h1v-13zM306 489v11h1v-11zM306 503v19h1v-19zM307 478v44h1v-44zM308 482v40h1v-40zM309 481v41h1v-41zM310 479v43h1v-43zM311 481v3h1v-3zM311 489v33h1v-33zM312 472v1h1v-1zM312 490v32h1v-32zM313 478v5h1v-5zM313 490v32h1v-32zM314 478v44h1v-44zM315 477v34h1v-34zM315 512v10h1v-10zM316 480v42h1v-42zM317 463v5h1v-5zM317 481v41h1v-41zM318 463v14h1v-14zM318 481v41h1v-41zM319 482v13h1v-13zM319 497v25h1v-25zM320 463v2h1v-2zM320 483v5h1v-5zM320 491v3h1v-3zM320 497v25h1v-25zM321 463v13h1v-13zM321 482v40h1v-40zM322 467v34h1v-34zM322 504v18h1v-18zM323 469v31h1v-31zM323 504v18h1v-18zM324 468v31h1v-31zM324 503v19h1v-19zM325 466v28h1v-28zM325 498v24h1v-24zM326 463v31h1v-31zM326 498v24h1v-24zM327 463v2h1v-2zM327 483v12h1v-12zM327 502v20h1v-20zM328 463v1h1v-1zM328 482v18h1v-18zM328 504v18h1v-18zM329 463v1h1v-1zM329 481v41h1v-41zM330 463v4h1v-4zM330 474v48h1v-48zM331 483v11h1v-11zM331 502v20h1v-20zM332 483v18h1v-18zM332 502v20h1v-20zM333 463v3h1v-3zM333 483v39h1v-39zM334 483v11h1v-11zM334 497v25h1v-25zM335 483v9h1v-9zM335 499v23h1v-23zM336 474v18h1v-18zM336 498v24h1v-24zM337 476v14h1v-14zM337 502v20h1v-20zM338 478v13h1v-13zM338 502v20h1v-20zM339 483v11h1v-11zM339 497v25h1v-25zM340 463v6h1v-6zM340 478v14h1v-14zM340 503v19h1v-19zM341 463v30h1v-30zM341 504v9h1v-9zM342 468v15h1v-15zM342 490v23h1v-23zM343 463v6h1v-6zM343 474v27h1v-27zM343 504v9h1v-9zM344 463v5h1v-5zM344 475v38h1v-38zM345 463v1h1v-1zM345 476v37h1v-37zM346 463v5h1v-5zM346 476v37h1v-37zM347 463v4h1v-4zM347 476v37h1v-37zM348 476v8h1v-8zM348 492v21h1v-21zM349 485v9h1v-9zM349 496v17h1v-17zM350 484v9h1v-9zM350 497v16h1v-16zM351 463v13h1v-13zM351 484v29h1v-29zM352 469v5h1v-5zM352 483v30h1v-30zM353 484v29h1v-29zM354 463v5h1v-5zM354 491v31h1v-31zM355 463v14h1v-14zM355 489v33h1v-33zM356 463v14h1v-14zM356 490v32h1v-32zM357 463v5h1v-5zM357 493v29h1v-29zM358 463v6h1v-6zM358 483v15h1v-15zM358 505v17h1v-17zM359 463v7h1v-7zM359 481v16h1v-16zM359 504v18h1v-18zM360 463v14h1v-14zM360 482v10h1v-10zM360 498v24h1v-24zM361 463v59h1v-59zM362 463v59h1v-59zM363 463v37h1v-37zM363 508v14h1v-14zM364 463v49h1v-49zM364 513v9h1v-9zM365 467v28h1v-28zM365 497v25h1v-25zM366 466v25h1v-25zM366 504v18h1v-18zM367 463v23h1v-23zM367 489v33h1v-33zM368 463v14h1v-14zM368 489v33h1v-33zM369 463v26h1v-26zM369 501v21h1v-21zM370 463v32h1v-32zM370 502v20h1v-20zM371 463v59h1v-59zM372 463v59h1v-59zM373 463v59h1v-59zM374 463v59h1v-59zM375 463v34h1v-34zM375 505v17h1v-17zM376 463v59h1v-59zM377 463v59h1v-59zM378 463v59h1v-59zM379 463v59h1v-59zM380 463v59h1v-59zM381 463v59h1v-59zM382 463v59h1v-59zM383 463v59h1v-59zM384 463v59h1v-59zM385 463v59h1v-59zM386 463v59h1v-59zM387 463v59h1v-59zM388 463v59h1v-59zM389 463v59h1v-59zM390 463v59h1v-59zM391 463v59h1v-59zM392 463v59h1v-59zM393 463v59h1v-59zM394 463v59h1v-59zM395 463v59h1v-59zM396 463v59h1v-59zM397 463v59h1v-59zM398 463v59h1v-59zM399 463v59h1v-59zM400 463v59h1v-59zM401 463v59h1v-59zM402 463v59h1v-59zM403 463v59h1v-59zM404 463v59h1v-59zM405 463v59h1v-59zM406 463v59h1v-59zM407 463v59h1v-59zM408 463v59h1v-59zM409 463v59h1v-59zM410 463v59h1v-59zM411 463v59h1v-59zM412 463v59h1v-59z"/><path fill="#ff1000" d="M267 463v59h1v-59zM268 463v59h1v-59zM269 463v59h1v-59zM270 463v59h1v-59zM271 463v59h1v-59zM272 463v59h1v-59zM273 463v59h1v-59zM274 463v59h1v-59zM275 463v59h1v-59zM276 463v59h1v-59zM277 463v7h1v-7zM277 473v13h1v-13zM277 490v32h1v-32zM278 463v59h1v-59zM279 463v8h1v-8zM279 474v39h1v-39zM279 514v8h1v-8zM280 463v50h1v-50zM280 514v8h1v-8zM281 463v37h1v-37zM281 504v9h1v-9zM281 515v7h1v-7zM282 463v50h1v-50zM282 515v7h1v-7zM283 463v36h1v-36zM283 504v9h1v-9zM283 516v6h1v-6zM284 463v31h1v-31zM284 503v10h1v-10zM284 516v6h1v-6zM285 463v5h1v-5zM285 482v11h1v-11zM285 500v13h1v-13zM285 516v6h1v-6zM286 463v12h1v-12zM286 481v32h1v-32zM286 517v5h1v-5zM287 463v50h1v-50zM287 517v5h1v-5zM288 463v50h1v-50zM288 518v4h1v-4zM289 463v50h1v-50zM289 518v4h1v-4zM290 463v31h1v-31zM290 501v12h1v-12zM290 519v3h1v-3zM291 463v5h1v-5zM291 474v18h1v-18zM291 503v10h1v-10zM291 519v3h1v-3zM292 476v22h1v-22zM292 507v6h1v-6zM292 520v2h1v-2zM293 476v22h1v-22zM293 507v6h1v-6zM293 520v2h1v-2zM294 475v11h1v-11zM294 507v6h1v-6zM294 521v1h1v-1zM295 481v8h1v-8zM295 505v8h1v-8zM295 521v1h1v-1zM296 484v4h1v-4zM296 504v9h1v-9zM297 463v25h1v-25zM297 507v6h1v-6zM298 463v11h1v-11zM298 485v3h1v-3zM298 508v5h1v-5zM299 463v6h1v-6zM299 485v4h1v-4zM299 508v14h1v-14zM300 477v13h1v-13zM300 506v9h1v-9zM300 517v5h1v-5zM301 483v9h1v-9zM301 506v9h1v-9zM301 517v5h1v-5zM302 463v5h1v-5zM302 483v9h1v-9zM302 506v5h1v-5zM302 512v10h1v-10zM303 463v26h1v-26zM303 505v17h1v-17zM304 463v7h1v-7zM304 474v16h1v-16zM304 503v19h1v-19zM305 463v5h1v-5zM305 475v15h1v-15zM305 503v19h1v-19zM306 476v8h1v-8zM306 509v6h1v-6zM306 517v5h1v-5zM307 485v5h1v-5zM307 503v12h1v-12zM307 517v5h1v-5zM308 484v7h1v-7zM308 502v20h1v-20zM309 485v5h1v-5zM309 501v21h1v-21zM310 493v5h1v-5zM310 503v19h1v-19zM311 493v5h1v-5zM311 503v19h1v-19zM312 501v14h1v-14zM312 517v5h1v-5zM313 493v22h1v-22zM313 517v5h1v-5zM314 493v29h1v-29zM315 482v10h1v-10zM315 504v7h1v-7zM315 512v10h1v-10zM316 484v38h1v-38zM317 485v37h1v-37zM318 469v5h1v-5zM318 485v13h1v-13zM318 508v7h1v-7zM318 517v5h1v-5zM319 502v13h1v-13zM319 517v5h1v-5zM320 502v20h1v-20zM321 463v4h1v-4zM321 490v8h1v-8zM321 505v17h1v-17zM322 477v21h1v-21zM322 507v15h1v-15zM323 476v21h1v-21zM323 507v15h1v-15zM324 470v5h1v-5zM324 507v8h1v-8zM324 517v5h1v-5zM325 471v3h1v-3zM325 504v11h1v-11zM325 517v5h1v-5zM326 486v3h1v-3zM326 503v19h1v-19zM327 486v4h1v-4zM327 506v16h1v-16zM328 485v6h1v-6zM328 508v14h1v-14zM329 485v7h1v-7zM329 508v14h1v-14zM330 483v9h1v-9zM330 500v15h1v-15zM330 517v5h1v-5zM331 485v5h1v-5zM331 507v8h1v-8zM331 517v5h1v-5zM332 485v6h1v-6zM332 508v14h1v-14zM333 485v37h1v-37zM334 485v5h1v-5zM334 501v21h1v-21zM335 487v2h1v-2zM335 501v21h1v-21zM336 500v15h1v-15zM336 517v5h1v-5zM337 506v9h1v-9zM337 517v5h1v-5zM338 506v16h1v-16zM339 485v6h1v-6zM339 501v21h1v-21zM340 484v6h1v-6zM340 506v16h1v-16zM341 507v6h1v-6zM342 492v8h1v-8zM342 505v8h1v-8zM343 478v4h1v-4zM343 491v8h1v-8zM343 507v6h1v-6zM344 463v2h1v-2zM344 478v5h1v-5zM344 490v9h1v-9zM344 506v7h1v-7zM345 478v4h1v-4zM345 493v20h1v-20zM346 463v1h1v-1zM346 491v22h1v-22zM347 493v20h1v-20zM348 478v3h1v-3zM348 503v10h1v-10zM349 500v13h1v-13zM350 501v12h1v-12zM351 469v4h1v-4zM351 506v7h1v-7zM352 499v14h1v-14zM353 498v15h1v-15zM354 463v2h1v-2zM354 494v28h1v-28zM355 469v5h1v-5zM355 494v28h1v-28zM356 468v6h1v-6zM356 503v19h1v-19zM357 509v13h1v-13zM358 463v3h1v-3zM358 508v14h1v-14zM359 463v4h1v-4zM359 485v4h1v-4zM359 508v14h1v-14zM360 469v3h1v-3zM360 502v20h1v-20zM361 463v5h1v-5zM361 484v38h1v-38zM362 463v4h1v-4zM362 483v17h1v-17zM362 505v17h1v-17zM363 469v5h1v-5zM363 485v13h1v-13zM363 509v13h1v-13zM364 481v13h1v-13zM364 503v9h1v-9zM364 513v9h1v-9zM365 477v15h1v-15zM365 502v20h1v-20zM366 469v16h1v-16zM366 509v13h1v-13zM367 467v7h1v-7zM367 493v4h1v-4zM367 509v13h1v-13zM368 463v5h1v-5zM368 493v4h1v-4zM368 503v19h1v-19zM369 463v2h1v-2zM369 505v17h1v-17zM370 463v3h1v-3zM370 476v15h1v-15zM370 506v16h1v-16zM371 463v5h1v-5zM371 474v18h1v-18zM371 507v15h1v-15zM372 463v7h1v-7zM372 473v13h1v-13zM372 509v13h1v-13zM373 467v20h1v-20zM373 504v18h1v-18zM374 467v25h1v-25zM374 505v17h1v-17zM375 463v5h1v-5zM375 477v15h1v-15zM375 507v15h1v-15zM376 467v7h1v-7zM376 483v10h1v-10zM376 501v21h1v-21zM377 467v8h1v-8zM377 483v39h1v-39zM378 466v10h1v-10zM378 483v17h1v-17zM378 505v17h1v-17zM379 466v33h1v-33zM379 505v17h1v-17zM380 466v34h1v-34zM380 504v18h1v-18zM381 464v20h1v-20zM381 490v32h1v-32zM382 465v57h1v-57zM383 463v59h1v-59zM384 463v9h1v-9zM384 481v41h1v-41zM385 463v8h1v-8zM385 482v40h1v-40zM386 463v59h1v-59zM387 463v59h1v-59zM388 463v59h1v-59zM389 463v59h1v-59zM390 463v59h1v-59zM391 463v59h1v-59zM392 463v59h1v-59zM393 463v59h1v-59zM394 463v59h1v-59zM395 463v59h1v-59zM396 463v59h1v-59zM397 463v59h1v-59zM398 463v59h1v-59zM399 463v59h1v-59zM400 463v59h1v-59zM401 463v59h1v-59zM402 463v59h1v-59zM403 463v59h1v-59zM404 463v59h1v-59zM405 463v59h1v-59zM406 463v59h1v-59zM407 463v59h1v-59zM408 463v59h1v-59zM409 463v59h1v-59zM410 463v59h1v-59zM411 463v59h1v-59zM412 463v59h1v-59z"/><path fill="#e00000" d="M267 463v59h1v-59zM268 463v59h1v-59zM269 463v59h1v-59zM270 463v59h1v-59zM271 463v59h1v-59zM272 463v59h1v-59zM273 463v59h1v-59zM274 463v59h1v-59zM275 463v59h1v-59zM276 463v59h1v-59zM277 463v4h1v-4zM277 507v15h1v-15zM278 463v4h1v-4zM278 479v2h1v-2zM278 495v1h1v-1zM278 507v15h1v-15zM279 463v4h1v-4zM279 483v30h1v-30zM279 514v8h1v-8zM280 463v3h1v-3zM280 481v15h1v-15zM280 508v5h1v-5zM280 515v7h1v-7zM281 481v13h1v-13zM281 508v5h1v-5zM281 515v7h1v-7zM282 471v1h1v-1zM282 483v15h1v-15zM282 508v5h1v-5zM282 515v7h1v-7zM283 470v22h1v-22zM283 506v7h1v-7zM283 516v6h1v-6zM284 482v9h1v-9zM284 506v7h1v-7zM284 516v6h1v-6zM285 485v5h1v-5zM285 506v7h1v-7zM285 517v5h1v-5zM286 463v3h1v-3zM286 484v9h1v-9zM286 504v9h1v-9zM286 517v5h1v-5zM287 463v3h1v-3zM287 485v11h1v-11zM287 504v9h1v-9zM287 518v4h1v-4zM288 469v5h1v-5zM288 507v6h1v-6zM288 518v4h1v-4zM289 485v5h1v-5zM289 506v7h1v-7zM289 519v3h1v-3zM290 484v6h1v-6zM290 507v6h1v-6zM290 519v3h1v-3zM291 477v13h1v-13zM291 509v4h1v-4zM291 520v2h1v-2zM292 509v4h1v-4zM292 520v2h1v-2zM293 509v4h1v-4zM293 521v1h1v-1zM294 478v4h1v-4zM294 508v5h1v-5zM294 521v1h1v-1zM295 508v5h1v-5zM296 509v4h1v-4zM297 509v4h1v-4zM298 509v4h1v-4zM299 509v13h1v-13zM300 508v7h1v-7zM300 517v5h1v-5zM301 509v6h1v-6zM301 517v5h1v-5zM302 509v2h1v-2zM302 512v10h1v-10zM303 463v2h1v-2zM303 477v5h1v-5zM303 508v14h1v-14zM304 463v3h1v-3zM304 507v15h1v-15zM305 508v14h1v-14zM306 509v6h1v-6zM306 517v5h1v-5zM307 509v6h1v-6zM307 517v5h1v-5zM308 508v14h1v-14zM309 509v13h1v-13zM310 509v13h1v-13zM311 509v13h1v-13zM312 507v8h1v-8zM312 517v5h1v-5zM313 509v6h1v-6zM313 517v5h1v-5zM314 509v13h1v-13zM315 486v3h1v-3zM315 509v2h1v-2zM315 512v10h1v-10zM316 509v13h1v-13zM317 509v13h1v-13zM318 509v6h1v-6zM318 517v5h1v-5zM319 509v6h1v-6zM319 517v5h1v-5zM320 509v13h1v-13zM321 509v13h1v-13zM322 509v13h1v-13zM323 509v13h1v-13zM324 509v6h1v-6zM324 517v5h1v-5zM325 509v6h1v-6zM325 517v5h1v-5zM326 509v13h1v-13zM327 509v13h1v-13zM328 509v13h1v-13zM329 509v13h1v-13zM330 506v9h1v-9zM330 517v5h1v-5zM331 509v6h1v-6zM331 517v5h1v-5zM332 509v13h1v-13zM333 509v13h1v-13zM334 509v13h1v-13zM335 509v13h1v-13zM336 509v6h1v-6zM336 517v5h1v-5zM337 509v6h1v-6zM337 517v5h1v-5zM338 508v14h1v-14zM339 506v16h1v-16zM340 508v5h1v-5zM341 508v5h1v-5zM342 508v5h1v-5zM343 509v4h1v-4zM344 509v4h1v-4zM345 502v11h1v-11zM346 503v10h1v-10zM347 505v8h1v-8zM348 506v7h1v-7zM349 504v9h1v-9zM350 505v8h1v-8zM351 509v4h1v-4zM352 509v4h1v-4zM353 504v9h1v-9zM354 508v5h1v-5zM355 509v13h1v-13zM356 509v13h1v-13zM357 509v13h1v-13zM358 509v13h1v-13zM359 509v13h1v-13zM360 509v13h1v-13zM361 509v13h1v-13zM362 509v13h1v-13zM363 509v13h1v-13zM364 485v5h1v-5zM364 509v3h1v-3zM364 513v9h1v-9zM365 485v4h1v-4zM365 509v13h1v-13zM366 476v6h1v-6zM366 509v13h1v-13zM367 509v13h1v-13zM368 509v13h1v-13zM369 509v13h1v-13zM370 509v13h1v-13zM371 509v13h1v-13zM372 509v13h1v-13zM373 474v8h1v-8zM373 509v13h1v-13zM374 476v6h1v-6zM374 508v3h1v-3zM375 463v2h1v-2zM375 509v2h1v-2zM376 509v2h1v-2zM376 513v5h1v-5zM377 509v2h1v-2zM377 513v1h1v-1zM377 515v2h1v-2zM377 518v2h1v-2zM378 486v12h1v-12zM378 507v4h1v-4zM378 513v2h1v-2zM378 517v3h1v-3zM379 471v20h1v-20zM379 507v4h1v-4zM379 513v3h1v-3zM379 517v3h1v-3zM380 470v16h1v-16zM380 508v3h1v-3zM380 513v1h1v-1zM380 517v2h1v-2zM381 469v7h1v-7zM381 492v7h1v-7zM381 509v2h1v-2zM381 513v1h1v-1zM381 517v3h1v-3zM382 468v8h1v-8zM382 494v17h1v-17zM382 513v1h1v-1zM382 517v3h1v-3zM383 468v6h1v-6zM383 487v3h1v-3zM383 498v13h1v-13zM383 515v5h1v-5zM384 463v5h1v-5zM384 484v13h1v-13zM384 505v6h1v-6zM384 515v2h1v-2zM384 518v2h1v-2zM385 463v2h1v-2zM385 491v20h1v-20zM385 513v6h1v-6zM386 491v20h1v-20zM386 513v6h1v-6zM387 463v7h1v-7zM387 474v18h1v-18zM387 506v5h1v-5zM387 513v1h1v-1zM387 515v5h1v-5zM388 463v48h1v-48zM388 513v1h1v-1zM388 515v5h1v-5zM389 463v48h1v-48zM389 513v2h1v-2zM389 517v3h1v-3zM390 463v48h1v-48zM390 513v4h1v-4zM390 519v1h1v-1zM391 463v48h1v-48zM391 514v3h1v-3zM391 519v1h1v-1zM392 463v48h1v-48zM392 514v6h1v-6zM393 463v48h1v-48zM393 515v4h1v-4zM394 463v48h1v-48zM394 513v4h1v-4zM394 519v1h1v-1zM395 463v48h1v-48zM395 513v7h1v-7zM396 463v48h1v-48zM396 514v6h1v-6zM397 463v48h1v-48zM397 514v3h1v-3zM397 518v2h1v-2zM398 463v48h1v-48zM399 463v48h1v-48zM400 463v59h1v-59zM401 463v59h1v-59zM402 463v59h1v-59zM403 463v59h1v-59zM404 463v59h1v-59zM405 463v59h1v-59zM406 463v59h1v-59zM407 463v59h1v-59zM408 463v59h1v-59zM409 463v59h1v-59zM410 463v59h1v-59zM411 463v59h1v-59zM412 463v59h1v-59z"/><path fill="#9a1000" d="M267 463v59h1v-59zM268 463v59h1v-59zM269 463v59h1v-59zM270 463v59h1v-59zM271 463v59h1v-59zM272 463v59h1v-59zM273 463v59h1v-59zM274 463v59h1v-59zM275 463v59h1v-59zM276 463v59h1v-59zM277 510v12h1v-12zM278 510v12h1v-12zM279 463v2h1v-2zM279 490v9h1v-9zM279 503v3h1v-3zM279 510v3h1v-3zM279 514v8h1v-8zM280 509v4h1v-4zM280 515v7h1v-7zM281 509v4h1v-4zM281 515v7h1v-7zM282 485v7h1v-7zM282 509v4h1v-4zM282 516v6h1v-6zM283 508v5h1v-5zM283 516v6h1v-6zM284 508v1h1v-1zM284 512v1h1v-1zM284 517v5h1v-5zM285 509v4h1v-4zM285 517v5h1v-5zM286 507v6h1v-6zM286 518v4h1v-4zM287 508v1h1v-1zM287 511v2h1v-2zM287 518v4h1v-4zM288 509v2h1v-2zM288 519v3h1v-3zM289 509v3h1v-3zM289 519v3h1v-3zM290 509v4h1v-4zM290 520v2h1v-2zM291 509v4h1v-4zM291 520v2h1v-2zM292 509v4h1v-4zM292 520v2h1v-2zM293 510v3h1v-3zM293 521v1h1v-1zM294 509v2h1v-2zM294 512v1h1v-1zM294 521v1h1v-1zM295 509v4h1v-4zM296 509v4h1v-4zM297 509v4h1v-4zM298 509v4h1v-4zM299 509v13h1v-13zM300 509v6h1v-6zM300 517v5h1v-5zM301 509v6h1v-6zM301 517v5h1v-5zM302 509v2h1v-2zM302 512v10h1v-10zM303 509v2h1v-2zM303 512v10h1v-10zM304 509v13h1v-13zM305 509v13h1v-13zM306 509v6h1v-6zM306 517v5h1v-5zM307 509v6h1v-6zM307 517v5h1v-5zM308 509v13h1v-13zM309 509v2h1v-2zM309 512v10h1v-10zM310 509v2h1v-2zM310 512v10h1v-10zM311 509v13h1v-13zM312 509v6h1v-6zM312 517v5h1v-5zM313 509v6h1v-6zM313 517v5h1v-5zM314 509v1h1v-1zM314 512v10h1v-10zM315 509v1h1v-1zM315 512v10h1v-10zM316 509v13h1v-13zM317 509v13h1v-13zM318 509v6h1v-6zM318 517v5h1v-5zM319 509v6h1v-6zM319 517v5h1v-5zM320 509v13h1v-13zM321 509v13h1v-13zM322 509v2h1v-2zM322 512v10h1v-10zM323 509v2h1v-2zM323 513v9h1v-9zM324 509v6h1v-6zM324 517v5h1v-5zM325 509v6h1v-6zM325 517v5h1v-5zM326 509v13h1v-13zM327 509v13h1v-13zM328 509v13h1v-13zM329 509v13h1v-13zM330 511v4h1v-4zM330 517v5h1v-5zM331 509v6h1v-6zM331 517v5h1v-5zM332 509v13h1v-13zM333 509v13h1v-13zM334 509v13h1v-13zM335 509v13h1v-13zM336 509v6h1v-6zM336 517v5h1v-5zM337 509v6h1v-6zM337 517v5h1v-5zM338 509v13h1v-13zM339 509v13h1v-13zM340 511v2h1v-2zM341 509v4h1v-4zM342 511v2h1v-2zM343 509v4h1v-4zM344 509v4h1v-4zM345 512v1h1v-1zM346 509v4h1v-4zM347 509v4h1v-4zM348 508v5h1v-5zM349 507v5h1v-5zM350 508v4h1v-4zM351 509v4h1v-4zM352 509v1h1v-1zM352 511v2h1v-2zM353 509v3h1v-3zM354 509v4h1v-4zM355 509v13h1v-13zM356 509v13h1v-13zM357 509v13h1v-13zM358 509v13h1v-13zM359 509v13h1v-13zM360 509v2h1v-2zM360 512v10h1v-10zM361 509v2h1v-2zM361 513v9h1v-9zM362 511v11h1v-11zM363 509v3h1v-3zM363 513v9h1v-9zM364 509v2h1v-2zM364 513v9h1v-9zM365 509v2h1v-2zM365 513v9h1v-9zM366 509v13h1v-13zM367 509v13h1v-13zM368 509v2h1v-2zM368 512v10h1v-10zM369 509v2h1v-2zM369 512v10h1v-10zM370 509v13h1v-13zM371 509v13h1v-13zM372 509v13h1v-13zM373 509v13h1v-13zM374 509v2h1v-2zM375 509v2h1v-2zM376 509v2h1v-2zM376 516v1h1v-1zM377 509v2h1v-2zM378 508v3h1v-3zM378 519v1h1v-1zM379 510v1h1v-1zM379 518v1h1v-1zM380 509v2h1v-2zM381 494v3h1v-3zM381 509v2h1v-2zM382 505v6h1v-6zM383 504v7h1v-7zM384 463v3h1v-3zM384 486v4h1v-4zM384 509v2h1v-2zM384 519v1h1v-1zM385 494v3h1v-3zM385 504v7h1v-7zM386 505v6h1v-6zM387 477v13h1v-13zM387 508v3h1v-3zM387 517v1h1v-1zM388 463v48h1v-48zM388 517v1h1v-1zM389 463v48h1v-48zM390 463v48h1v-48zM391 463v48h1v-48zM391 516v1h1v-1zM392 463v48h1v-48zM392 516v1h1v-1zM393 463v46h1v-46zM394 463v48h1v-48zM395 463v48h1v-48zM396 463v46h1v-46zM396 516v1h1v-1zM397 463v48h1v-48zM397 516v1h1v-1zM397 519v1h1v-1zM398 463v48h1v-48zM399 463v48h1v-48zM400 463v59h1v-59zM401 463v59h1v-59zM402 463v59h1v-59zM403 463v59h1v-59zM404 463v59h1v-59zM405 463v59h1v-59zM406 463v59h1v-59zM407 463v59h1v-59zM408 463v59h1v-59zM409 463v59h1v-59zM410 463v59h1v-59zM411 463v59h1v-59zM412 463v59h1v-59z"/><rect x="276" y="463" width="1" height="2" fill="#ff9090" opacity="0.85"/><rect x="401" y="463" width="1" height="2" fill="#c0ffb0" opacity="0.9"/><rect x="276" y="466" width="1" height="2" fill="#ff9090" opacity="0.85"/><rect x="401" y="466" width="1" height="2" fill="#c0ffb0" opacity="0.9"/><rect x="276" y="469" width="1" height="2" fill="#ff9090" opacity="0.85"/><rect x="401" y="469" width="1" height="2" fill="#c0ffb0" opacity="0.9"/><rect x="276" y="472" width="1" height="2" fill="#ff9090" opacity="0.85"/><rect x="401" y="472" width="1" height="2" fill="#c0ffb0" opacity="0.9"/><rect x="276" y="475" width="1" height="2" fill="#ff9090" opacity="0.85"/><rect x="401" y="475" width="1" height="2" fill="#c0ffb0" opacity="0.9"/><rect x="276" y="478" width="1" height="2" fill="#ff9090" opacity="0.85"/><rect x="401" y="478" width="1" height="2" fill="#c0ffb0" opacity="0.9"/><rect x="276" y="481" width="1" height="2" fill="#ff9090" opacity="0.85"/><rect x="401" y="481" width="1" height="2" fill="#c0ffb0" opacity="0.9"/><rect x="276" y="484" width="1" height="2" fill="#ff9090" opacity="0.85"/><rect x="401" y="484" width="1" height="2" fill="#c0ffb0" opacity="0.9"/><rect x="276" y="487" width="1" height="2" fill="#ff9090" opacity="0.85"/><rect x="401" y="487" width="1" height="2" fill="#c0ffb0" opacity="0.9"/><rect x="276" y="490" width="1" height="2" fill="#ff9090" opacity="0.85"/><rect x="401" y="490" width="1" height="2" fill="#c0ffb0" opacity="0.9"/><rect x="276" y="493" width="1" height="2" fill="#ff9090" opacity="0.85"/><rect x="401" y="493" width="1" height="2" fill="#c0ffb0" opacity="0.9"/><rect x="276" y="496" width="1" height="2" fill="#ff9090" opacity="0.85"/><rect x="401" y="496" width="1" height="2" fill="#c0ffb0" opacity="0.9"/><rect x="276" y="499" width="1" height="2" fill="#ff9090" opacity="0.85"/><rect x="401" y="499" width="1" height="2" fill="#c0ffb0" opacity="0.9"/><rect x="276" y="502" width="1" height="2" fill="#ff9090" opacity="0.85"/><rect x="401" y="502" width="1" height="2" fill="#c0ffb0" opacity="0.9"/><rect x="276" y="505" width="1" height="2" fill="#ff9090" opacity="0.85"/><rect x="401" y="505" width="1" height="2" fill="#c0ffb0" opacity="0.9"/><rect x="276" y="508" width="1" height="2" fill="#ff9090" opacity="0.85"/><rect x="401" y="508" width="1" height="2" fill="#c0ffb0" opacity="0.9"/><rect x="276" y="511" width="1" height="2" fill="#ff9090" opacity="0.85"/><rect x="401" y="511" width="1" height="2" fill="#c0ffb0" opacity="0.9"/><rect x="276" y="514" width="1" height="2" fill="#ff9090" opacity="0.85"/><rect x="401" y="514" width="1" height="2" fill="#c0ffb0" opacity="0.9"/><rect x="276" y="517" width="1" height="2" fill="#ff9090" opacity="0.85"/><rect x="401" y="517" width="1" height="2" fill="#c0ffb0" opacity="0.9"/><rect x="276" y="520" width="1" height="2" fill="#ff9090" opacity="0.85"/><rect x="401" y="520" width="1" height="2" fill="#c0ffb0" opacity="0.9"/><rect x="267" y="492" width="146" height="1" fill="#50c020"/><rect x="267" y="468" width="8" height="1" fill="#f0d0c0"/><rect x="267" y="477" width="8" height="1" fill="#f0d0c0"/><rect x="267" y="486" width="8" height="1" fill="#f0d0c0"/><rect x="267" y="495" width="8" height="1" fill="#f0d0c0"/><rect x="267" y="507" width="8" height="1" fill="#f0d0c0"/></svg><div class="t" style="left:276px;top:464.4px;font-size:7px;font-weight:bold;color:#f0f0e0;letter-spacing:-0.3px">47</div><div class="t" style="left:276px;top:473.5px;font-size:7px;font-weight:bold;color:#f0f0e0;letter-spacing:-0.3px">36</div><div class="t" style="left:276px;top:482.6px;font-size:7px;font-weight:bold;color:#f0f0e0;letter-spacing:-0.3px">25</div><div class="t" style="left:276px;top:491.7px;font-size:7px;font-weight:bold;color:#f0f0e0;letter-spacing:-0.3px">14</div><div class="t" style="left:276px;top:503.3px;font-size:7px;font-weight:bold;color:#f0f0e0;letter-spacing:-0.3px">0</div><div class="a" style="left:652px;top:463px;width:8px;height:77px;background:#f4f4f4"></div>
<div class="a" style="left:652px;top:463px;width:8px;height:48px;background:#f0f0f0;border-right:1px solid #888;border-bottom:1px solid #888;border-left:1px solid #fff"></div>
<div class="a" style="left:652px;top:532px;width:8px;height:8px;background:#f0f0f0;border-right:1px solid #777;border-bottom:1px solid #777;border-left:1px solid #fff;border-top:1px solid #fff"></div>
<div class="t" style="left:652px;top:534px;width:8px;text-align:center;font-size:4px;color:#000">&#9660;</div><div class="a" style="left:239px;top:540px;width:404px;height:9px;background:#f0f0f0;border-bottom:1px solid #888"></div>
<div class="a" style="left:239px;top:540px;width:9px;height:9px;background:#f0f0f0;border-right:1px solid #999;border-bottom:1px solid #777;border-top:1px solid #fff;border-left:1px solid #fff"></div>
<div class="t" style="left:239px;top:542px;width:9px;text-align:center;font-size:4px;color:#000">&#9664;</div><div class="a" style="left:643px;top:540px;width:9px;height:9px;background:#f0f0f0;border-right:1px solid #777;border-bottom:1px solid #777;border-top:1px solid #fff;border-left:1px solid #fff"></div>
<div class="t" style="left:643px;top:542px;width:9px;text-align:center;font-size:4px;color:#000">&#9654;</div><div class="a" style="left:832px;top:109px;width:113px;height:21px;background:#f6f6f6;border-top:1px solid #9a9a9a"></div>
<div class="a" style="left:832px;top:111px;width:113px;height:19px;border:1px dashed #333"></div>
<div class="t" style="left:863px;top:117px;font-size:6.5px;color:#10102a">Distribution</div>
<div class="a" style="left:954px;top:110px;width:136px;height:21px;background:#ececec;border:1px solid #dcdcdc;border-right:1px solid #6e6e6e;border-bottom:1px solid #6e6e6e;box-shadow:inset -1px -1px 0 #a8a8a8, inset 1px 1px 0 #fff;border-right:2px solid #8a8a8a;border-bottom:2px solid #8a8a8a"></div>
<div class="t" style="left:954px;top:110px;width:136px;height:21px;line-height:21px;text-align:center;font-size:5.5px;color:#0a0a28">Analysis</div>
<div class="a" style="left:954px;top:110px;width:136px;height:21px;"></div>
<div class="a" style="left:667px;top:139px;width:422px;height:409px;border:1px solid #c8c8c8;box-shadow:inset 1px 1px 0 #fff"></div>
<div class="a" style="left:953px;top:147px;width:137px;height:13px;background:#ececec;border:1px solid #dcdcdc;border-right:1px solid #6e6e6e;border-bottom:1px solid #6e6e6e;box-shadow:inset -1px -1px 0 #a8a8a8, inset 1px 1px 0 #fff;"></div>
<div class="t" style="left:953px;top:147px;width:137px;height:13px;line-height:13px;text-align:center;font-size:6.5px;color:#0a0a28">Export Hist and Dist</div>
<svg width="1100" height="559"><rect x="700.5" y="168.5" width="379" height="162" fill="none" stroke="#555" stroke-width="1"/><line x1="700" y1="330.5" x2="1080" y2="330.5" stroke="#444" stroke-width="1.5"/><line x1="701" y1="185.5" x2="1079" y2="185.5" stroke="#222" stroke-width="1" stroke-dasharray="1.5 2.5" opacity="0.75"/><line x1="701" y1="201.5" x2="1079" y2="201.5" stroke="#222" stroke-width="1" stroke-dasharray="2 2" opacity="0.95"/><line x1="701" y1="217.5" x2="1079" y2="217.5" stroke="#222" stroke-width="1" stroke-dasharray="1.5 2.5" opacity="0.75"/><line x1="701" y1="234.5" x2="1079" y2="234.5" stroke="#222" stroke-width="1" stroke-dasharray="1.5 2.5" opacity="0.75"/><line x1="701" y1="250.5" x2="1079" y2="250.5" stroke="#222" stroke-width="1" stroke-dasharray="2 2" opacity="0.95"/><line x1="701" y1="266.5" x2="1079" y2="266.5" stroke="#222" stroke-width="1" stroke-dasharray="1.5 2.5" opacity="0.75"/><line x1="701" y1="283.5" x2="1079" y2="283.5" stroke="#222" stroke-width="1" stroke-dasharray="1.5 2.5" opacity="0.75"/><line x1="701" y1="299.5" x2="1079" y2="299.5" stroke="#222" stroke-width="1" stroke-dasharray="2 2" opacity="0.95"/><line x1="701" y1="315.5" x2="1079" y2="315.5" stroke="#222" stroke-width="1" stroke-dasharray="1.5 2.5" opacity="0.75"/><line x1="950.5" y1="169" x2="950.5" y2="330" stroke="#333" stroke-width="1" stroke-dasharray="1.5 2.5"/><path d="M820.0 172.0 Q832.5 172.0 838.1 172.9 Q843.8 173.8 850.6 178.1 Q857.5 182.5 863.8 186.9 Q870.0 191.2 875.0 196.2 Q880.0 201.2 885.0 208.8 Q890.0 216.2 894.4 225.6 Q898.8 235.0 903.1 244.4 Q907.5 253.8 913.1 266.2 Q918.8 278.8 925.6 288.8 Q932.5 298.8 941.2 305.6 Q950.0 312.5 961.2 318.8 Q972.5 325.0 978.8 327.5 Q985.0 330.0 1032.0 330.0 L1079.0 330.0" fill="none" stroke="#3040e0" stroke-width="1"/><line x1="1080" y1="327.5" x2="1100" y2="327.5" stroke="#555" stroke-width="1"/><line x1="940" y1="327.5" x2="1080" y2="327.5" stroke="#777" stroke-width="0.6"/></svg><div class="t" style="left:940px;top:334px;width:20px;text-align:center;font-size:5.5px;color:#333">10</div>
<div class="t" style="left:1069px;top:334px;width:20px;text-align:center;font-size:5.5px;color:#333">100</div>
<div class="t" style="left:866px;top:343px;width:40px;text-align:center;font-size:5px;color:#222">Lifetime (µs)</div>
<div class="t" style="left:861px;top:358px;font-size:6.5px;color:#222">Max:</div>
<div class="a" style="left:882px;top:355px;width:26px;height:11px;background:#f0f0f0;border-top:1px solid #808080;border-left:1px solid #808080;border-right:1px solid #fff;border-bottom:1px solid #fff"></div>
<div class="t" style="left:882px;top:357px;width:25px;text-align:center;font-size:6.5px;color:#222">19.44</div>
<div class="t" style="left:1036px;top:358px;font-size:6.5px;color:#222">Avg:</div>
<div class="a" style="left:1056px;top:355px;width:26px;height:11px;background:#f0f0f0;border-top:1px solid #808080;border-left:1px solid #808080;border-right:1px solid #fff;border-bottom:1px solid #fff"></div>
<div class="t" style="left:1060px;top:357px;width:20px;text-align:right;font-size:6.5px;color:#222">5.36</div>
<div class="a" style="left:700px;top:374px;width:383px;height:2px;border-top:1px solid #c8c8c8;border-bottom:1px solid #fff"></div>
<svg width="1100" height="559"><line x1="689" y1="384.5" x2="1076" y2="384.5" stroke="#111" stroke-dasharray="1.5 2.5" stroke-width="1" opacity="0.8"/><line x1="689" y1="405.5" x2="1076" y2="405.5" stroke="#111" stroke-dasharray="2 1.5" stroke-width="1" opacity="1"/><line x1="689" y1="424.5" x2="1076" y2="424.5" stroke="#111" stroke-dasharray="1.5 2.5" stroke-width="1" opacity="0.8"/><line x1="689" y1="444.5" x2="1076" y2="444.5" stroke="#111" stroke-dasharray="1.5 2.5" stroke-width="1" opacity="0.8"/><line x1="689" y1="464.5" x2="1076" y2="464.5" stroke="#111" stroke-dasharray="1.5 2.5" stroke-width="1" opacity="0.8"/><line x1="689" y1="484.5" x2="1076" y2="484.5" stroke="#111" stroke-dasharray="2 1.5" stroke-width="1" opacity="1"/><line x1="695.75" y1="384" x2="695.75" y2="502" stroke="#111" stroke-dasharray="1.5 2.5" stroke-width="1" opacity="0.85"/><line x1="723.75" y1="384" x2="723.75" y2="502" stroke="#111" stroke-dasharray="1.5 2.5" stroke-width="1" opacity="0.85"/><line x1="751.25" y1="384" x2="751.25" y2="502" stroke="#111" stroke-dasharray="1.5 2.5" stroke-width="1" opacity="0.85"/><line x1="778.75" y1="384" x2="778.75" y2="502" stroke="#111" stroke-dasharray="1.5 2.5" stroke-width="1" opacity="0.85"/><line x1="805" y1="384" x2="805" y2="502" stroke="#111" stroke-dasharray="1.5 2.5" stroke-width="1" opacity="0.85"/><line x1="832.5" y1="384" x2="832.5" y2="502" stroke="#111" stroke-dasharray="1.5 2.5" stroke-width="1" opacity="0.85"/><line x1="859.5" y1="384" x2="859.5" y2="502" stroke="#111" stroke-dasharray="1.5 2.5" stroke-width="1" opacity="0.85"/><line x1="887.5" y1="384" x2="887.5" y2="502" stroke="#111" stroke-dasharray="1.5 2.5" stroke-width="1" opacity="0.85"/><line x1="914.5" y1="384" x2="914.5" y2="502" stroke="#111" stroke-dasharray="1.5 2.5" stroke-width="1" opacity="0.85"/><line x1="940.5" y1="384" x2="940.5" y2="502" stroke="#111" stroke-dasharray="1.5 2.5" stroke-width="1" opacity="0.85"/><line x1="968" y1="384" x2="968" y2="502" stroke="#111" stroke-dasharray="1.5 2.5" stroke-width="1" opacity="0.85"/><line x1="995.5" y1="384" x2="995.5" y2="502" stroke="#111" stroke-dasharray="1.5 2.5" stroke-width="1" opacity="0.85"/><line x1="1022.5" y1="384" x2="1022.5" y2="502" stroke="#111" stroke-dasharray="1.5 2.5" stroke-width="1" opacity="0.85"/><line x1="1049.5" y1="384" x2="1049.5" y2="502" stroke="#111" stroke-dasharray="1.5 2.5" stroke-width="1" opacity="0.85"/><line x1="1075.5" y1="384" x2="1075.5" y2="502" stroke="#111" stroke-dasharray="1.5 2.5" stroke-width="1" opacity="0.85"/><rect x="689.50" y="440" width="6.79" height="62" fill="#7a1208" stroke="#1a0000" stroke-width="0.7"/><rect x="696.29" y="495.6" width="6.79" height="6.399999999999977" fill="#9a0c08" stroke="#1a0000" stroke-width="0.7"/><rect x="703.08" y="488" width="6.79" height="14" fill="#af0c0a" stroke="#1a0000" stroke-width="0.7"/><rect x="709.87" y="488" width="6.79" height="14" fill="#c40c0c" stroke="#1a0000" stroke-width="0.7"/><rect x="716.66" y="486" width="6.79" height="16" fill="#ce0d0d" stroke="#1a0000" stroke-width="0.7"/><rect x="723.45" y="486" width="6.79" height="16" fill="#d90e0e" stroke="#1a0000" stroke-width="0.7"/><rect x="730.24" y="486" width="6.79" height="16" fill="#e40f0f" stroke="#1a0000" stroke-width="0.7"/><rect x="737.03" y="486" width="6.79" height="16" fill="#ee1010" stroke="#1a0000" stroke-width="0.7"/><rect x="743.82" y="484" width="6.79" height="18" fill="#f41b0b" stroke="#1a0000" stroke-width="0.7"/><rect x="750.61" y="483" width="6.79" height="19" fill="#f92505" stroke="#1a0000" stroke-width="0.7"/><rect x="757.40" y="480" width="6.79" height="22" fill="#ff3000" stroke="#1a0000" stroke-width="0.7"/><rect x="764.19" y="481" width="6.79" height="21" fill="#ff3e00" stroke="#1a0000" stroke-width="0.7"/><rect x="770.98" y="480" width="6.79" height="22" fill="#ff4c00" stroke="#1a0000" stroke-width="0.7"/><rect x="777.77" y="481" width="6.79" height="21" fill="#ff5a00" stroke="#1a0000" stroke-width="0.7"/><rect x="784.56" y="481" width="6.79" height="21" fill="#ff6800" stroke="#1a0000" stroke-width="0.7"/><rect x="791.34" y="482.4" width="6.79" height="19.600000000000023" fill="#ff7800" stroke="#1a0000" stroke-width="0.7"/><rect x="798.13" y="482.4" width="6.79" height="19.600000000000023" fill="#ff8800" stroke="#1a0000" stroke-width="0.7"/><rect x="804.92" y="483.4" width="6.79" height="18.600000000000023" fill="#ff9800" stroke="#1a0000" stroke-width="0.7"/><rect x="811.71" y="484.4" width="6.79" height="17.600000000000023" fill="#ffa800" stroke="#1a0000" stroke-width="0.7"/><rect x="818.50" y="494.4" width="6.79" height="7.600000000000023" fill="#ffb800" stroke="#1a0000" stroke-width="0.7"/><rect x="825.29" y="485.5" width="6.79" height="16.5" fill="#ffc800" stroke="#1a0000" stroke-width="0.7"/><rect x="832.08" y="487" width="6.79" height="15" fill="#ffd800" stroke="#1a0000" stroke-width="0.7"/><rect x="838.87" y="488" width="6.79" height="14" fill="#ffec00" stroke="#1a0000" stroke-width="0.7"/><rect x="845.66" y="489.5" width="6.79" height="12.5" fill="#ffff00" stroke="#1a0000" stroke-width="0.7"/><rect x="852.45" y="491.25" width="6.79" height="10.75" fill="#efff00" stroke="#1a0000" stroke-width="0.7"/><rect x="859.24" y="493.25" width="6.79" height="8.75" fill="#e0ff00" stroke="#1a0000" stroke-width="0.7"/><rect x="866.03" y="494.25" width="6.79" height="7.75" fill="#d0ff00" stroke="#1a0000" stroke-width="0.7"/><rect x="872.82" y="494.75" width="6.79" height="7.25" fill="#b5f900" stroke="#1a0000" stroke-width="0.7"/><rect x="879.61" y="495.5" width="6.79" height="6.5" fill="#9bf400" stroke="#1a0000" stroke-width="0.7"/><rect x="886.40" y="496.25" width="6.79" height="5.75" fill="#80ee00" stroke="#1a0000" stroke-width="0.7"/><rect x="893.19" y="496.75" width="6.79" height="5.25" fill="#74ec00" stroke="#1a0000" stroke-width="0.7"/><rect x="899.98" y="497" width="6.79" height="5" fill="#68eb00" stroke="#1a0000" stroke-width="0.7"/><rect x="906.77" y="497.5" width="6.79" height="4.5" fill="#5cea00" stroke="#1a0000" stroke-width="0.7"/><rect x="913.56" y="497.5" width="6.79" height="4.5" fill="#50e800" stroke="#1a0000" stroke-width="0.7"/><rect x="920.35" y="497.5" width="6.79" height="4.5" fill="#46e306" stroke="#1a0000" stroke-width="0.7"/><rect x="927.14" y="497.5" width="6.79" height="4.5" fill="#3dde0d" stroke="#1a0000" stroke-width="0.7"/><rect x="933.93" y="497.5" width="6.79" height="4.5" fill="#33da13" stroke="#1a0000" stroke-width="0.7"/><rect x="940.72" y="498" width="6.79" height="4" fill="#2ad51a" stroke="#1a0000" stroke-width="0.7"/><rect x="947.51" y="500.5" width="6.79" height="1.5" fill="#20d020"/><rect x="954.30" y="498.75" width="6.79" height="3.25" fill="#15c525" stroke="#1a0000" stroke-width="0.7"/><rect x="961.09" y="498.75" width="6.79" height="3.25" fill="#0bbb2b" stroke="#1a0000" stroke-width="0.7"/><rect x="967.88" y="500" width="6.79" height="2" fill="#00b030"/><rect x="974.67" y="500" width="6.79" height="2" fill="#00a040"/><rect x="981.46" y="500" width="6.79" height="2" fill="#009050"/><rect x="988.24" y="500" width="6.79" height="2" fill="#008060"/><rect x="995.03" y="500.25" width="6.79" height="1.75" fill="#006d7b"/><rect x="1001.82" y="500.25" width="6.79" height="1.75" fill="#005b95"/><rect x="1008.61" y="500.25" width="6.79" height="1.75" fill="#0048b0"/><rect x="1015.40" y="500.5" width="6.79" height="1.5" fill="#0042bc"/><rect x="1022.19" y="500.5" width="6.79" height="1.5" fill="#003cc8"/><rect x="1028.98" y="500.5" width="6.79" height="1.5" fill="#0036d4"/><rect x="1035.77" y="500.5" width="6.79" height="1.5" fill="#0030e0"/><rect x="1042.56" y="500.5" width="6.79" height="1.5" fill="#002be3"/><rect x="1049.35" y="500.5" width="6.79" height="1.5" fill="#0026e6"/><rect x="1056.14" y="500.75" width="6.79" height="1.25" fill="#0022ea"/><rect x="1062.93" y="500.75" width="6.79" height="1.25" fill="#001ded"/><rect x="1069.72" y="500.75" width="6.79" height="1.25" fill="#0018f0"/><rect x="1076.51" y="432" width="6.79" height="70" fill="#000000" stroke="#1a0000" stroke-width="0.7"/><line x1="689" y1="502.5" x2="1084" y2="502.5" stroke="#000" stroke-width="1.2"/><line x1="689.5" y1="440" x2="689.5" y2="502" stroke="#000" stroke-width="1"/></svg><div class="t" style="left:677px;top:499px;width:10px;text-align:right;font-size:6.5px;color:#333">0</div>
<div class="t" style="left:677px;top:481px;width:10px;text-align:right;font-size:6.5px;color:#333">2</div>
<div class="t" style="left:677px;top:461px;width:10px;text-align:right;font-size:6.5px;color:#333">3</div>
<div class="t" style="left:681px;top:504px;width:30px;text-align:center;font-size:5px;color:#222">48</div>
<div class="t" style="left:681px;top:510px;width:30px;text-align:center;font-size:5px;color:#333">1.89 µs</div>
<div class="t" style="left:709px;top:504px;width:30px;text-align:center;font-size:5px;color:#222">55</div>
<div class="t" style="left:709px;top:510px;width:30px;text-align:center;font-size:5px;color:#333">2.51 µs</div>
<div class="t" style="left:736px;top:504px;width:30px;text-align:center;font-size:5px;color:#222">63</div>
<div class="t" style="left:736px;top:510px;width:30px;text-align:center;font-size:5px;color:#333">3.21 µs</div>
<div class="t" style="left:764px;top:504px;width:30px;text-align:center;font-size:5px;color:#222">71</div>
<div class="t" style="left:764px;top:510px;width:30px;text-align:center;font-size:5px;color:#333">3.92 µs</div>
<div class="t" style="left:790px;top:504px;width:30px;text-align:center;font-size:5px;color:#222">79</div>
<div class="t" style="left:790px;top:510px;width:30px;text-align:center;font-size:5px;color:#333">4.62 µs</div>
<div class="t" style="left:817px;top:504px;width:30px;text-align:center;font-size:5px;color:#222">88</div>
<div class="t" style="left:817px;top:510px;width:30px;text-align:center;font-size:5px;color:#333">5.24 µs</div>
<div class="t" style="left:845px;top:504px;width:30px;text-align:center;font-size:5px;color:#222">94</div>
<div class="t" style="left:845px;top:510px;width:30px;text-align:center;font-size:5px;color:#333">5.95 µs</div>
<div class="t" style="left:873px;top:504px;width:30px;text-align:center;font-size:5px;color:#222">102</div>
<div class="t" style="left:873px;top:510px;width:30px;text-align:center;font-size:5px;color:#333">6.66 µs</div>
<div class="t" style="left:899px;top:504px;width:30px;text-align:center;font-size:5px;color:#222">110</div>
<div class="t" style="left:899px;top:510px;width:30px;text-align:center;font-size:5px;color:#333">7.38 µs</div>
<div class="t" style="left:925px;top:504px;width:30px;text-align:center;font-size:5px;color:#222">118</div>
<div class="t" style="left:925px;top:510px;width:30px;text-align:center;font-size:5px;color:#333">8.08 µs</div>
<div class="t" style="left:953px;top:504px;width:30px;text-align:center;font-size:5px;color:#222">125</div>
<div class="t" style="left:953px;top:510px;width:30px;text-align:center;font-size:5px;color:#333">8.88 µs</div>
<div class="t" style="left:981px;top:504px;width:30px;text-align:center;font-size:5px;color:#222">133</div>
<div class="t" style="left:981px;top:510px;width:30px;text-align:center;font-size:5px;color:#333">9.39 µs</div>
<div class="t" style="left:1007px;top:504px;width:30px;text-align:center;font-size:5px;color:#222">141</div>
<div class="t" style="left:1007px;top:510px;width:30px;text-align:center;font-size:5px;color:#333">10.09 µs</div>
<div class="t" style="left:1035px;top:504px;width:30px;text-align:center;font-size:5px;color:#222">149</div>
<div class="t" style="left:1035px;top:510px;width:30px;text-align:center;font-size:5px;color:#333">10.80 µs</div>
<div class="t" style="left:1061px;top:504px;width:30px;text-align:center;font-size:5px;color:#222">156</div>
<div class="t" style="left:1061px;top:510px;width:30px;text-align:center;font-size:5px;color:#333">11.41 µs</div>
<div class="t" style="left:857px;top:517px;width:60px;text-align:center;font-size:5px;color:#333">Intensity / Lifetime</div>
<div class="t" style="left:689px;top:533px;font-size:6px;color:#222">Min:</div>
<div class="a" style="left:706px;top:529px;width:19px;height:12px;background:#fff;border:1px solid #a8a8a8"></div>
<div class="t" style="left:707px;top:532px;width:15px;text-align:right;font-size:6px;color:#222">48</div>
<div class="a" style="left:724px;top:529px;width:10px;height:12px;background:#f0f0f0;border:1px solid #a8a8a8"></div>
<div class="a" style="left:725px;top:534px;width:8px;height:1px;background:#c0c0c0"></div>
<div class="t" style="left:845px;top:533px;font-size:6px;color:#222">1.89 µsec ... 11.33 µsec</div>
<div class="t" style="left:1035px;top:533px;font-size:6px;color:#222">Max:</div>
<div class="a" style="left:1055px;top:529px;width:19px;height:12px;background:#fff;border:1px solid #a8a8a8"></div>
<div class="t" style="left:1056px;top:532px;width:15px;text-align:right;font-size:6px;color:#222">155</div>
<div class="a" style="left:1073px;top:529px;width:11px;height:12px;background:#f0f0f0;border:1px solid #a8a8a8"></div>
<div class="a" style="left:1074px;top:534px;width:9px;height:1px;background:#c0c0c0"></div>
<div class="a" style="left:7px;top:14px;width:826px;height:450px;background:#a9c8ea;border:1px solid #3a4a50;border-right:2px solid #3a4a4e"></div>
<div class="a" style="left:7px;top:29px;width:3px;height:435px;background:linear-gradient(#9ab8d0 0px,#8aa8c0 15px,#4a5a60 20px,#6a8080 50px,#3a4848 80px,#4a5858 100px,#2a3535 120px,#2a3535 165px,#a9c8ea 175px,#a9c8ea 240px,#303838 255px,#101010 270px,#101010 405px,#a9c8ea 425px)"></div>
<div class="a" style="left:7px;top:14px;width:1px;height:450px;background:#1a2a30;opacity:0.7"></div>
<div class="a" style="left:8px;top:15px;width:823px;height:14px;background:linear-gradient(#b4d2e6 0%,#a6cbe6 40%,#a4c6ea 60%,#a8c8ec 100%)"></div>
<div class="a" style="left:98px;top:15px;width:120px;height:8px;background:linear-gradient(90deg,rgba(110,180,200,0),rgba(110,180,200,0.6))"></div>
<div class="a" style="left:158px;top:15px;width:54px;height:8px;background:radial-gradient(ellipse at center,rgba(80,150,160,0.5),rgba(0,0,0,0) 72%)"></div>
<div class="a" style="left:199px;top:15px;width:42px;height:8px;background:radial-gradient(ellipse at center,rgba(100,190,220,0.6),rgba(0,0,0,0) 72%)"></div>
<div class="a" style="left:228px;top:15px;width:68px;height:8px;background:radial-gradient(ellipse at center,rgba(60,120,125,0.55),rgba(0,0,0,0) 72%)"></div>
<div class="a" style="left:275px;top:15px;width:57px;height:8px;background:radial-gradient(ellipse at center,rgba(110,195,225,0.55),rgba(0,0,0,0) 72%)"></div>
<div class="a" style="left:308px;top:15px;width:46px;height:8px;background:radial-gradient(ellipse at center,rgba(80,150,160,0.5),rgba(0,0,0,0) 72%)"></div>
<div class="a" style="left:335px;top:15px;width:49px;height:8px;background:radial-gradient(ellipse at center,rgba(100,190,220,0.6),rgba(0,0,0,0) 72%)"></div>
<div class="a" style="left:376px;top:15px;width:52px;height:8px;background:radial-gradient(ellipse at center,rgba(100,190,220,0.6),rgba(0,0,0,0) 72%)"></div>
<div class="a" style="left:410px;top:15px;width:40px;height:8px;background:radial-gradient(ellipse at center,rgba(60,120,125,0.55),rgba(0,0,0,0) 72%)"></div>
<div class="a" style="left:436px;top:15px;width:33px;height:8px;background:radial-gradient(ellipse at center,rgba(80,150,160,0.5),rgba(0,0,0,0) 72%)"></div>
<div class="a" style="left:457px;top:15px;width:69px;height:8px;background:radial-gradient(ellipse at center,rgba(110,195,225,0.55),rgba(0,0,0,0) 72%)"></div>
<div class="a" style="left:497px;top:15px;width:43px;height:8px;background:radial-gradient(ellipse at center,rgba(100,190,220,0.6),rgba(0,0,0,0) 72%)"></div>
<div class="a" style="left:528px;top:15px;width:51px;height:8px;background:radial-gradient(ellipse at center,rgba(60,120,125,0.55),rgba(0,0,0,0) 72%)"></div>
<div class="a" style="left:564px;top:15px;width:38px;height:8px;background:radial-gradient(ellipse at center,rgba(110,195,225,0.55),rgba(0,0,0,0) 72%)"></div>
<div class="a" style="left:594px;top:15px;width:46px;height:8px;background:radial-gradient(ellipse at center,rgba(60,120,125,0.55),rgba(0,0,0,0) 72%)"></div>
<div class="a" style="left:626px;top:15px;width:70px;height:8px;background:radial-gradient(ellipse at center,rgba(60,120,125,0.55),rgba(0,0,0,0) 72%)"></div>
<div class="a" style="left:677px;top:15px;width:28px;height:8px;background:radial-gradient(ellipse at center,rgba(110,195,225,0.55),rgba(0,0,0,0) 72%)"></div>
<div class="a" style="left:709px;top:15px;width:33px;height:8px;background:radial-gradient(ellipse at center,rgba(60,120,125,0.55),rgba(0,0,0,0) 72%)"></div>
<div class="a" style="left:735px;top:15px;width:52px;height:8px;background:radial-gradient(ellipse at center,rgba(60,120,125,0.55),rgba(0,0,0,0) 72%)"></div>
<div class="a" style="left:764px;top:15px;width:32px;height:8px;background:radial-gradient(ellipse at center,rgba(80,150,160,0.5),rgba(0,0,0,0) 72%)"></div>
<div class="a" style="left:789px;top:15px;width:37px;height:8px;background:radial-gradient(ellipse at center,rgba(45,95,100,0.45),rgba(0,0,0,0) 72%)"></div>
<div class="a" style="left:810px;top:15px;width:21px;height:8px;background:radial-gradient(ellipse at center,rgba(100,190,220,0.6),rgba(0,0,0,0) 72%)"></div>
<div class="a" style="left:8px;top:15px;width:823px;height:7px;background:linear-gradient(90deg,rgba(255,255,255,0) 0px,rgba(100,170,190,0.3) 200px)"></div>
<div class="a" style="left:8px;top:15px;width:823px;height:1px;background:rgba(70,90,100,0.55)"></div>
<div class="a" style="left:10px;top:29px;width:818px;height:430px;background:#f0f0f0;border-top:1px solid #8aa0b8"></div>
<div class="a" style="left:803px;top:14px;width:26px;height:11px;background:linear-gradient(#e8a594,#d46a55 45%,#c4442c 55%,#c85a40);border:1px solid #8a3a2a;border-top:0;border-radius:0 0 4px 4px"></div>
<div class="t" style="left:803px;top:14px;width:26px;height:11px;line-height:11px;text-align:center;font-size:9px;font-weight:bold;color:#fff;text-shadow:0 0 1px #501010">x</div>
<div class="a" style="left:11px;top:17px;width:8px;height:9px;background:#c8200c;border-top:2px solid #6a1a10"></div>
<div class="t" style="left:22px;top:19px;font-size:6.4px;color:#1a1a22">Height profile (Side 2) [0.82x zoom]</div>
<div class="a" style="left:17px;top:39px;width:399px;height:20px;border:1px solid #d0d0d0;box-shadow:inset 1px 1px 0 #fff;border-radius:1px"></div>
<div class="t" style="left:17px;top:36px;width:399px;text-align:center"><span style="background:#f0f0f0;padding:0 2px">Zoom</span></div>
<div class="a" style="left:27px;top:49px;width:379px;height:2px;border-top:1px solid #8e8e8e;border-bottom:1px solid #fff"></div>
<div class="a" style="left:49px;top:44px;width:5px;height:11px;background:#ececec;border-left:1px solid #fff;border-top:1px solid #fff;border-right:1px solid #7a7a7a;border-bottom:1px solid #c0c0c0;box-shadow:1px 0 0 #bdbdbd"></div>
<div class="a" style="left:17px;top:67px;width:169px;height:19px;border:1px solid #d0d0d0;box-shadow:inset 1px 1px 0 #fff;border-radius:1px"></div>
<div class="t" style="left:17px;top:64px;width:169px;text-align:center"><span style="background:#f0f0f0;padding:0 2px">Left side position</span></div>
<div class="a" style="left:27px;top:75px;width:149px;height:2px;border-top:1px solid #8e8e8e;border-bottom:1px solid #fff"></div>
<div class="a" style="left:37px;top:70px;width:5px;height:10px;background:#ececec;border-left:1px solid #fff;border-top:1px solid #fff;border-right:1px solid #7a7a7a;border-bottom:1px solid #c0c0c0;box-shadow:1px 0 0 #bdbdbd"></div>
<div class="a" style="left:193px;top:65px;width:47px;height:21px;background:#ececec;border:1px solid #dcdcdc;border-right:1px solid #6e6e6e;border-bottom:1px solid #6e6e6e;box-shadow:inset -1px -1px 0 #a8a8a8, inset 1px 1px 0 #fff;"></div>
<div class="t" style="left:193px;top:65px;width:47px;height:21px;line-height:21px;text-align:center;font-size:5px;color:#0a0a28">Export to CSV</div>
<div class="a" style="left:246px;top:67px;width:170px;height:19px;border:1px solid #d0d0d0;box-shadow:inset 1px 1px 0 #fff;border-radius:1px"></div>
<div class="t" style="left:246px;top:64px;width:170px;text-align:center"><span style="background:#f0f0f0;padding:0 2px">Right side position</span></div>
<div class="a" style="left:256px;top:75px;width:150px;height:2px;border-top:1px solid #8e8e8e;border-bottom:1px solid #fff"></div>
<div class="a" style="left:390px;top:70px;width:5px;height:10px;background:#ececec;border-left:1px solid #fff;border-top:1px solid #fff;border-right:1px solid #7a7a7a;border-bottom:1px solid #c0c0c0;box-shadow:1px 0 0 #bdbdbd"></div>
<div class="a" style="left:15px;top:93px;width:23px;height:127px;border:1px solid #d0d0d0;box-shadow:inset 1px 1px 0 #fff;border-radius:1px"></div>
<div class="t" style="left:18px;top:90px;background:#f0f0f0;padding:0 1px">Top</div>
<div class="a" style="left:25px;top:110px;width:2px;height:106px;border-left:1px solid #8e8e8e;border-right:1px solid #fff"></div>
<div class="a" style="left:20px;top:104px;width:11px;height:6px;background:#ececec;border-left:1px solid #fff;border-top:1px solid #fff;border-right:1px solid #7a7a7a;border-bottom:1px solid #7a7a7a"></div>
<div class="a" style="left:15px;top:228px;width:23px;height:123px;border:1px solid #d0d0d0;box-shadow:inset 1px 1px 0 #fff;border-radius:1px"></div>
<div class="t" style="left:19px;top:225px;background:#f0f0f0;padding:0 1px">Bottom</div>
<div class="a" style="left:25px;top:235px;width:2px;height:107px;border-left:1px solid #8e8e8e;border-right:1px solid #fff"></div>
<div class="a" style="left:20px;top:340px;width:11px;height:6px;background:#ececec;border-left:1px solid #fff;border-top:1px solid #fff;border-right:1px solid #7a7a7a;border-bottom:1px solid #7a7a7a"></div>
<div class="a" style="left:43px;top:93px;width:365px;height:336px;background:#808080;border-right:1px solid #404040;border-bottom:1px solid #000"></div>
<svg width="1100" height="559" shape-rendering="crispEdges"><rect x="43" y="93" width="139" height="335" fill="#000000"/><path fill="#0000f0" d="M43 127v301h1v-301zM44 127v301h1v-301zM45 127v301h1v-301zM46 127v301h1v-301zM47 127v301h1v-301zM48 127v301h1v-301zM49 127v301h1v-301zM50 127v301h1v-301zM51 127v301h1v-301zM52 127v301h1v-301zM53 127v301h1v-301zM54 127v301h1v-301zM55 133v295h1v-295zM56 133v295h1v-295zM57 133v295h1v-295zM58 133v295h1v-295zM59 133v295h1v-295zM60 133v295h1v-295zM61 133v295h1v-295zM62 133v283h1v-283zM62 417v11h1v-11zM63 133v283h1v-283zM63 417v11h1v-11zM64 133v283h1v-283zM64 418v10h1v-10zM65 133v76h1v-76zM65 211v205h1v-205zM65 419v9h1v-9zM66 133v52h1v-52zM66 187v4h1v-4zM66 195v2h1v-2zM66 198v10h1v-10zM66 211v205h1v-205zM66 420v8h1v-8zM67 133v52h1v-52zM67 199v9h1v-9zM67 211v8h1v-8zM67 220v196h1v-196zM67 421v7h1v-7zM68 133v50h1v-50zM68 199v217h1v-217zM68 421v7h1v-7zM69 133v47h1v-47zM69 200v216h1v-216zM69 422v6h1v-6zM70 133v20h1v-20zM70 157v22h1v-22zM70 205v20h1v-20zM70 227v1h1v-1zM70 233v183h1v-183zM70 423v5h1v-5zM71 133v18h1v-18zM71 156v20h1v-20zM71 234v182h1v-182zM71 424v4h1v-4zM72 133v18h1v-18zM72 155v2h1v-2zM72 159v14h1v-14zM72 174v1h1v-1zM72 234v194h1v-194zM73 133v26h1v-26zM73 161v4h1v-4zM73 166v2h1v-2zM73 231v1h1v-1zM73 233v195h1v-195zM74 133v24h1v-24zM74 189v1h1v-1zM74 231v197h1v-197zM75 133v25h1v-25zM75 189v1h1v-1zM75 230v198h1v-198zM76 133v27h1v-27zM76 206v17h1v-17zM76 227v201h1v-201zM77 133v24h1v-24zM77 158v2h1v-2zM77 165v1h1v-1zM77 208v18h1v-18zM77 227v201h1v-201zM78 133v19h1v-19zM78 156v11h1v-11zM78 207v221h1v-221zM79 133v38h1v-38zM79 173v2h1v-2zM79 178v1h1v-1zM79 206v222h1v-222zM80 133v43h1v-43zM80 178v3h1v-3zM80 206v222h1v-222zM81 133v54h1v-54zM81 206v222h1v-222zM82 133v54h1v-54zM82 195v1h1v-1zM82 200v37h1v-37zM82 238v5h1v-5zM82 246v182h1v-182zM83 133v56h1v-56zM83 190v6h1v-6zM83 197v1h1v-1zM83 200v4h1v-4zM83 207v28h1v-28zM83 241v2h1v-2zM83 245v183h1v-183zM84 133v67h1v-67zM84 207v33h1v-33zM84 241v2h1v-2zM84 245v183h1v-183zM85 133v18h1v-18zM85 155v3h1v-3zM85 161v2h1v-2zM85 169v6h1v-6zM85 180v5h1v-5zM85 188v12h1v-12zM85 206v222h1v-222zM86 133v19h1v-19zM86 157v6h1v-6zM86 167v5h1v-5zM86 188v1h1v-1zM86 195v1h1v-1zM86 202v226h1v-226zM87 133v19h1v-19zM87 156v16h1v-16zM87 177v8h1v-8zM87 189v3h1v-3zM87 197v1h1v-1zM87 201v2h1v-2zM87 205v223h1v-223zM88 133v18h1v-18zM88 156v16h1v-16zM88 188v7h1v-7zM88 200v3h1v-3zM88 207v221h1v-221zM89 133v18h1v-18zM89 155v17h1v-17zM89 184v11h1v-11zM89 200v3h1v-3zM89 208v220h1v-220zM90 133v39h1v-39zM90 174v2h1v-2zM90 184v16h1v-16zM90 207v221h1v-221zM91 133v42h1v-42zM91 184v19h1v-19zM91 208v49h1v-49zM91 258v1h1v-1zM91 260v2h1v-2zM91 264v164h1v-164zM92 133v43h1v-43zM92 183v16h1v-16zM92 209v52h1v-52zM92 262v166h1v-166zM93 133v35h1v-35zM93 170v10h1v-10zM93 182v2h1v-2zM93 187v2h1v-2zM93 192v8h1v-8zM93 207v1h1v-1zM93 209v52h1v-52zM93 262v166h1v-166zM94 133v49h1v-49zM94 193v7h1v-7zM94 206v2h1v-2zM94 209v44h1v-44zM94 254v174h1v-174zM95 133v50h1v-50zM95 185v2h1v-2zM95 195v5h1v-5zM95 210v218h1v-218zM96 133v49h1v-49zM96 184v2h1v-2zM96 195v6h1v-6zM96 209v44h1v-44zM96 254v174h1v-174zM97 133v44h1v-44zM97 183v8h1v-8zM97 192v8h1v-8zM97 209v34h1v-34zM97 244v8h1v-8zM97 254v174h1v-174zM98 133v44h1v-44zM98 183v16h1v-16zM98 208v220h1v-220zM99 133v29h1v-29zM99 163v1h1v-1zM99 168v3h1v-3zM99 183v15h1v-15zM99 208v28h1v-28zM99 240v5h1v-5zM99 246v2h1v-2zM99 249v179h1v-179zM100 133v30h1v-30zM100 181v19h1v-19zM100 208v30h1v-30zM100 239v6h1v-6zM100 246v182h1v-182zM101 133v28h1v-28zM101 172v5h1v-5zM101 179v19h1v-19zM101 208v220h1v-220zM102 133v18h1v-18zM102 152v2h1v-2zM102 156v3h1v-3zM102 173v13h1v-13zM102 208v220h1v-220zM103 133v22h1v-22zM103 157v1h1v-1zM103 177v4h1v-4zM103 208v37h1v-37zM103 251v2h1v-2zM103 254v174h1v-174zM104 133v20h1v-20zM104 157v1h1v-1zM104 175v9h1v-9zM104 191v1h1v-1zM104 194v5h1v-5zM104 200v1h1v-1zM104 208v220h1v-220zM105 133v18h1v-18zM105 157v1h1v-1zM105 176v2h1v-2zM105 184v11h1v-11zM105 200v1h1v-1zM105 208v39h1v-39zM105 250v178h1v-178zM106 133v24h1v-24zM106 158v2h1v-2zM106 183v12h1v-12zM106 208v29h1v-29zM106 239v1h1v-1zM106 241v187h1v-187zM107 133v18h1v-18zM107 176v3h1v-3zM107 182v14h1v-14zM107 208v28h1v-28zM107 238v2h1v-2zM107 242v186h1v-186zM108 133v18h1v-18zM108 152v1h1v-1zM108 183v14h1v-14zM108 207v1h1v-1zM108 209v26h1v-26zM108 240v1h1v-1zM108 245v183h1v-183zM109 133v18h1v-18zM109 172v29h1v-29zM109 206v28h1v-28zM109 237v1h1v-1zM109 241v15h1v-15zM109 260v168h1v-168zM110 133v69h1v-69zM110 206v57h1v-57zM110 265v151h1v-151zM111 133v130h1v-130zM111 265v3h1v-3zM111 272v144h1v-144zM112 133v19h1v-19zM112 154v1h1v-1zM112 157v1h1v-1zM112 160v3h1v-3zM112 166v37h1v-37zM112 205v50h1v-50zM112 258v1h1v-1zM112 261v1h1v-1zM112 263v1h1v-1zM112 265v2h1v-2zM112 269v147h1v-147zM113 133v70h1v-70zM113 205v30h1v-30zM113 236v22h1v-22zM113 259v157h1v-157zM114 133v283h1v-283zM115 133v115h1v-115zM115 249v167h1v-167zM116 133v104h1v-104zM116 239v189h1v-189zM117 133v295h1v-295zM118 133v18h1v-18zM118 156v6h1v-6zM118 163v5h1v-5zM118 169v259h1v-259zM119 133v18h1v-18zM119 157v2h1v-2zM119 171v16h1v-16zM119 189v2h1v-2zM119 192v236h1v-236zM120 133v18h1v-18zM120 156v3h1v-3zM120 173v8h1v-8zM120 189v4h1v-4zM120 195v21h1v-21zM120 218v1h1v-1zM120 222v206h1v-206zM121 133v18h1v-18zM121 157v1h1v-1zM121 169v2h1v-2zM121 175v4h1v-4zM121 181v1h1v-1zM121 189v5h1v-5zM121 195v2h1v-2zM121 199v3h1v-3zM121 203v7h1v-7zM121 212v3h1v-3zM121 225v2h1v-2zM121 229v199h1v-199zM122 133v18h1v-18zM122 183v1h1v-1zM122 186v4h1v-4zM122 193v1h1v-1zM122 232v196h1v-196zM123 133v18h1v-18zM123 181v8h1v-8zM123 193v1h1v-1zM123 221v6h1v-6zM123 228v2h1v-2zM123 232v29h1v-29zM123 262v166h1v-166zM124 133v18h1v-18zM124 181v1h1v-1zM124 193v1h1v-1zM124 199v6h1v-6zM124 235v54h1v-54zM124 291v137h1v-137zM125 133v18h1v-18zM125 192v1h1v-1zM125 198v27h1v-27zM125 235v41h1v-41zM125 278v10h1v-10zM125 290v138h1v-138zM126 133v19h1v-19zM126 186v1h1v-1zM126 189v1h1v-1zM126 191v3h1v-3zM126 195v1h1v-1zM126 198v230h1v-230zM127 133v19h1v-19zM127 156v2h1v-2zM127 178v1h1v-1zM127 184v4h1v-4zM127 190v48h1v-48zM127 239v189h1v-189zM128 133v19h1v-19zM128 180v248h1v-248zM129 133v18h1v-18zM129 169v54h1v-54zM129 224v6h1v-6zM129 231v9h1v-9zM129 241v14h1v-14zM129 256v19h1v-19zM129 277v151h1v-151zM130 133v18h1v-18zM130 168v49h1v-49zM130 236v21h1v-21zM130 260v15h1v-15zM130 278v150h1v-150zM131 133v18h1v-18zM131 155v2h1v-2zM131 163v1h1v-1zM131 168v37h1v-37zM131 206v6h1v-6zM131 235v2h1v-2zM131 238v18h1v-18zM131 263v1h1v-1zM131 278v150h1v-150zM132 133v19h1v-19zM132 153v4h1v-4zM132 158v2h1v-2zM132 163v1h1v-1zM132 169v15h1v-15zM132 192v1h1v-1zM132 203v2h1v-2zM132 208v4h1v-4zM132 242v1h1v-1zM132 244v12h1v-12zM132 263v1h1v-1zM132 265v1h1v-1zM132 279v149h1v-149zM133 133v19h1v-19zM133 154v2h1v-2zM133 167v1h1v-1zM133 192v1h1v-1zM133 208v5h1v-5zM133 215v1h1v-1zM133 245v6h1v-6zM133 253v3h1v-3zM133 265v2h1v-2zM133 279v149h1v-149zM134 133v19h1v-19zM134 153v2h1v-2zM134 157v1h1v-1zM134 162v4h1v-4zM134 168v6h1v-6zM134 176v8h1v-8zM134 215v1h1v-1zM134 217v2h1v-2zM134 245v2h1v-2zM134 248v2h1v-2zM134 251v2h1v-2zM134 276v152h1v-152zM135 133v18h1v-18zM135 156v30h1v-30zM135 212v1h1v-1zM135 216v3h1v-3zM135 244v3h1v-3zM135 275v14h1v-14zM135 291v137h1v-137zM136 133v18h1v-18zM136 152v1h1v-1zM136 155v3h1v-3zM136 165v1h1v-1zM136 170v2h1v-2zM136 211v2h1v-2zM136 215v4h1v-4zM136 244v2h1v-2zM136 274v154h1v-154zM137 133v18h1v-18zM137 157v1h1v-1zM137 170v1h1v-1zM137 207v6h1v-6zM137 214v5h1v-5zM137 244v2h1v-2zM137 248v2h1v-2zM137 273v7h1v-7zM137 283v49h1v-49zM137 334v94h1v-94zM138 133v18h1v-18zM138 165v1h1v-1zM138 167v25h1v-25zM138 209v10h1v-10zM138 221v1h1v-1zM138 234v2h1v-2zM138 239v1h1v-1zM138 243v8h1v-8zM138 263v1h1v-1zM138 266v1h1v-1zM138 268v9h1v-9zM138 283v1h1v-1zM138 287v1h1v-1zM138 291v37h1v-37zM138 331v1h1v-1zM138 336v92h1v-92zM139 133v51h1v-51zM139 187v1h1v-1zM139 212v2h1v-2zM139 221v2h1v-2zM139 233v1h1v-1zM139 244v1h1v-1zM139 246v4h1v-4zM139 261v2h1v-2zM139 268v4h1v-4zM139 274v3h1v-3zM139 280v3h1v-3zM139 290v1h1v-1zM139 292v33h1v-33zM139 326v1h1v-1zM139 336v92h1v-92zM140 133v37h1v-37zM140 173v1h1v-1zM140 212v8h1v-8zM140 242v14h1v-14zM140 268v15h1v-15zM140 289v36h1v-36zM140 332v3h1v-3zM140 336v92h1v-92zM141 133v30h1v-30zM141 165v1h1v-1zM141 210v10h1v-10zM141 223v1h1v-1zM141 254v2h1v-2zM141 257v29h1v-29zM141 287v39h1v-39zM141 328v3h1v-3zM141 335v93h1v-93zM142 133v18h1v-18zM142 211v9h1v-9zM142 222v2h1v-2zM142 225v2h1v-2zM142 255v57h1v-57zM142 313v2h1v-2zM142 318v13h1v-13zM142 333v95h1v-95zM143 133v18h1v-18zM143 189v1h1v-1zM143 213v1h1v-1zM143 220v8h1v-8zM143 232v3h1v-3zM143 238v2h1v-2zM143 242v1h1v-1zM143 245v1h1v-1zM143 248v2h1v-2zM143 269v2h1v-2zM143 282v22h1v-22zM143 320v108h1v-108zM144 133v18h1v-18zM144 223v1h1v-1zM144 237v3h1v-3zM144 244v4h1v-4zM144 259v3h1v-3zM144 285v23h1v-23zM144 316v16h1v-16zM144 335v93h1v-93zM145 133v18h1v-18zM145 152v41h1v-41zM145 229v1h1v-1zM145 236v4h1v-4zM145 244v4h1v-4zM145 256v1h1v-1zM145 259v5h1v-5zM145 269v2h1v-2zM145 285v38h1v-38zM145 324v2h1v-2zM145 328v3h1v-3zM145 335v93h1v-93zM146 133v19h1v-19zM146 157v43h1v-43zM146 234v1h1v-1zM146 237v3h1v-3zM146 256v7h1v-7zM146 266v16h1v-16zM146 283v34h1v-34zM146 318v5h1v-5zM146 330v1h1v-1zM146 336v92h1v-92zM147 133v20h1v-20zM147 155v45h1v-45zM147 233v3h1v-3zM147 256v57h1v-57zM147 315v2h1v-2zM147 321v1h1v-1zM147 323v1h1v-1zM147 331v5h1v-5zM147 337v91h1v-91zM148 133v19h1v-19zM148 158v42h1v-42zM148 255v33h1v-33zM148 290v27h1v-27zM148 321v2h1v-2zM148 327v1h1v-1zM148 330v1h1v-1zM148 333v95h1v-95zM149 133v18h1v-18zM149 160v40h1v-40zM149 244v8h1v-8zM149 254v25h1v-25zM149 280v6h1v-6zM149 290v41h1v-41zM149 335v93h1v-93zM150 133v18h1v-18zM150 159v11h1v-11zM150 226v1h1v-1zM150 244v9h1v-9zM150 254v22h1v-22zM150 289v38h1v-38zM150 333v95h1v-95zM151 133v18h1v-18zM151 159v10h1v-10zM151 186v1h1v-1zM151 189v1h1v-1zM151 210v1h1v-1zM151 213v3h1v-3zM151 219v6h1v-6zM151 229v1h1v-1zM151 243v36h1v-36zM151 293v23h1v-23zM151 322v5h1v-5zM151 336v92h1v-92zM152 133v18h1v-18zM152 159v10h1v-10zM152 189v1h1v-1zM152 192v1h1v-1zM152 214v4h1v-4zM152 244v6h1v-6zM152 251v28h1v-28zM152 292v26h1v-26zM152 320v8h1v-8zM152 335v93h1v-93zM153 133v18h1v-18zM153 158v1h1v-1zM153 165v3h1v-3zM153 188v3h1v-3zM153 216v1h1v-1zM153 237v1h1v-1zM153 240v3h1v-3zM153 251v28h1v-28zM153 282v1h1v-1zM153 289v4h1v-4zM153 294v134h1v-134zM154 133v18h1v-18zM154 166v1h1v-1zM154 187v5h1v-5zM154 194v1h1v-1zM154 197v3h1v-3zM154 201v3h1v-3zM154 236v7h1v-7zM154 256v5h1v-5zM154 264v14h1v-14zM154 282v1h1v-1zM154 287v6h1v-6zM154 294v24h1v-24zM154 319v109h1v-109zM155 127v25h1v-25zM155 166v2h1v-2zM155 185v19h1v-19zM155 236v6h1v-6zM155 257v2h1v-2zM155 264v12h1v-12zM155 290v27h1v-27zM155 320v108h1v-108zM156 127v26h1v-26zM156 155v9h1v-9zM156 166v2h1v-2zM156 185v4h1v-4zM156 193v4h1v-4zM156 201v2h1v-2zM156 235v2h1v-2zM156 238v5h1v-5zM156 261v1h1v-1zM156 264v14h1v-14zM156 288v5h1v-5zM156 294v5h1v-5zM156 302v15h1v-15zM156 319v1h1v-1zM156 322v106h1v-106zM157 127v37h1v-37zM157 166v1h1v-1zM157 180v7h1v-7zM157 194v35h1v-35zM157 239v5h1v-5zM157 255v1h1v-1zM157 259v7h1v-7zM157 272v2h1v-2zM157 276v4h1v-4zM157 283v9h1v-9zM157 296v3h1v-3zM157 301v8h1v-8zM157 311v9h1v-9zM157 321v8h1v-8zM157 331v97h1v-97zM158 127v31h1v-31zM158 173v3h1v-3zM158 179v8h1v-8zM158 240v4h1v-4zM158 253v12h1v-12zM158 267v4h1v-4zM158 277v3h1v-3zM158 283v9h1v-9zM158 296v10h1v-10zM158 331v2h1v-2zM158 334v94h1v-94zM159 127v35h1v-35zM159 173v7h1v-7zM159 183v1h1v-1zM159 237v1h1v-1zM159 240v3h1v-3zM159 247v17h1v-17zM159 267v5h1v-5zM159 278v2h1v-2zM159 282v8h1v-8zM159 292v11h1v-11zM159 335v93h1v-93zM160 127v301h1v-301zM161 127v301h1v-301zM162 127v301h1v-301zM163 127v301h1v-301zM164 127v301h1v-301zM165 127v301h1v-301zM166 127v301h1v-301zM167 127v301h1v-301zM168 127v301h1v-301zM169 127v301h1v-301zM170 127v301h1v-301zM171 127v301h1v-301zM172 127v301h1v-301zM173 127v301h1v-301zM174 127v301h1v-301zM175 127v301h1v-301zM176 127v301h1v-301zM177 127v301h1v-301zM178 127v301h1v-301zM179 127v301h1v-301zM180 127v301h1v-301zM181 127v301h1v-301z"/><path fill="#0040ff" d="M43 127v301h1v-301zM44 127v301h1v-301zM45 127v301h1v-301zM46 127v301h1v-301zM47 127v301h1v-301zM48 127v301h1v-301zM49 127v301h1v-301zM50 127v301h1v-301zM51 127v301h1v-301zM52 127v301h1v-301zM53 127v301h1v-301zM54 133v295h1v-295zM55 133v295h1v-295zM56 133v295h1v-295zM57 133v295h1v-295zM58 133v295h1v-295zM59 133v295h1v-295zM60 133v283h1v-283zM60 417v11h1v-11zM61 133v283h1v-283zM61 417v11h1v-11zM62 133v283h1v-283zM62 418v10h1v-10zM63 133v18h1v-18zM63 157v4h1v-4zM63 218v1h1v-1zM63 221v1h1v-1zM63 226v190h1v-190zM63 419v9h1v-9zM64 133v34h1v-34zM64 168v1h1v-1zM64 202v2h1v-2zM64 210v1h1v-1zM64 227v6h1v-6zM64 235v181h1v-181zM64 420v8h1v-8zM65 133v34h1v-34zM65 198v8h1v-8zM65 208v1h1v-1zM65 239v2h1v-2zM65 246v9h1v-9zM65 256v5h1v-5zM65 266v1h1v-1zM65 269v1h1v-1zM65 274v1h1v-1zM65 285v3h1v-3zM65 293v1h1v-1zM65 297v119h1v-119zM65 421v7h1v-7zM66 133v19h1v-19zM66 234v26h1v-26zM66 300v116h1v-116zM66 421v7h1v-7zM67 133v42h1v-42zM67 230v30h1v-30zM67 305v24h1v-24zM67 349v2h1v-2zM67 354v62h1v-62zM67 422v6h1v-6zM68 133v43h1v-43zM68 215v45h1v-45zM68 318v10h1v-10zM68 331v1h1v-1zM68 351v1h1v-1zM68 353v63h1v-63zM68 423v5h1v-5zM69 133v43h1v-43zM69 216v2h1v-2zM69 219v20h1v-20zM69 253v1h1v-1zM69 336v2h1v-2zM69 339v77h1v-77zM69 424v4h1v-4zM70 133v18h1v-18zM70 173v2h1v-2zM70 342v74h1v-74zM70 425v3h1v-3zM71 133v18h1v-18zM71 264v19h1v-19zM71 342v74h1v-74zM71 425v3h1v-3zM72 133v18h1v-18zM72 255v44h1v-44zM72 342v86h1v-86zM73 133v18h1v-18zM73 152v6h1v-6zM73 162v1h1v-1zM73 285v40h1v-40zM73 341v87h1v-87zM74 133v18h1v-18zM74 289v139h1v-139zM75 133v18h1v-18zM75 241v37h1v-37zM75 281v2h1v-2zM75 317v3h1v-3zM75 322v1h1v-1zM75 325v10h1v-10zM75 337v91h1v-91zM76 133v18h1v-18zM76 245v3h1v-3zM76 249v2h1v-2zM76 252v33h1v-33zM76 288v3h1v-3zM76 292v136h1v-136zM77 133v18h1v-18zM77 257v171h1v-171zM78 133v19h1v-19zM78 156v11h1v-11zM78 272v2h1v-2zM78 275v153h1v-153zM79 133v38h1v-38zM79 173v2h1v-2zM79 178v1h1v-1zM79 279v149h1v-149zM80 133v37h1v-37zM80 172v1h1v-1zM80 235v25h1v-25zM80 353v75h1v-75zM81 133v53h1v-53zM81 236v1h1v-1zM81 238v2h1v-2zM81 241v16h1v-16zM81 304v22h1v-22zM81 347v5h1v-5zM81 354v74h1v-74zM82 133v54h1v-54zM82 271v1h1v-1zM82 273v2h1v-2zM82 295v37h1v-37zM82 333v1h1v-1zM82 335v93h1v-93zM83 133v54h1v-54zM83 261v19h1v-19zM83 296v36h1v-36zM83 337v91h1v-91zM84 133v18h1v-18zM84 162v33h1v-33zM84 197v2h1v-2zM84 209v2h1v-2zM84 213v1h1v-1zM84 262v16h1v-16zM84 310v7h1v-7zM84 318v2h1v-2zM84 325v4h1v-4zM84 341v87h1v-87zM85 133v18h1v-18zM85 311v1h1v-1zM85 315v2h1v-2zM85 339v89h1v-89zM86 133v18h1v-18zM86 216v5h1v-5zM86 308v4h1v-4zM86 313v7h1v-7zM86 342v86h1v-86zM87 133v18h1v-18zM87 177v8h1v-8zM87 189v2h1v-2zM87 206v9h1v-9zM87 225v5h1v-5zM87 278v4h1v-4zM87 284v43h1v-43zM87 328v3h1v-3zM87 335v1h1v-1zM87 341v87h1v-87zM88 133v18h1v-18zM88 208v4h1v-4zM88 228v7h1v-7zM88 259v2h1v-2zM88 264v15h1v-15zM88 285v8h1v-8zM88 294v134h1v-134zM89 133v18h1v-18zM89 208v3h1v-3zM89 229v7h1v-7zM89 256v22h1v-22zM89 328v100h1v-100zM90 133v18h1v-18zM90 209v2h1v-2zM90 229v7h1v-7zM90 258v20h1v-20zM90 313v115h1v-115zM91 133v18h1v-18zM91 208v4h1v-4zM91 228v8h1v-8zM91 260v2h1v-2zM91 264v15h1v-15zM91 313v115h1v-115zM92 133v18h1v-18zM92 159v3h1v-3zM92 209v6h1v-6zM92 225v11h1v-11zM92 259v2h1v-2zM92 263v14h1v-14zM92 331v2h1v-2zM92 334v94h1v-94zM93 133v18h1v-18zM93 209v26h1v-26zM93 254v7h1v-7zM93 262v18h1v-18zM93 283v1h1v-1zM93 321v107h1v-107zM94 133v35h1v-35zM94 218v6h1v-6zM94 243v10h1v-10zM94 254v174h1v-174zM95 133v44h1v-44zM95 239v27h1v-27zM95 269v6h1v-6zM95 276v9h1v-9zM95 287v141h1v-141zM96 133v44h1v-44zM96 235v18h1v-18zM96 254v3h1v-3zM96 259v2h1v-2zM96 302v2h1v-2zM96 305v123h1v-123zM97 133v44h1v-44zM97 183v5h1v-5zM97 192v5h1v-5zM97 210v1h1v-1zM97 309v1h1v-1zM97 313v4h1v-4zM97 320v108h1v-108zM98 133v43h1v-43zM98 183v3h1v-3zM98 195v3h1v-3zM98 308v120h1v-120zM99 133v18h1v-18zM99 300v128h1v-128zM100 133v18h1v-18zM100 301v127h1v-127zM101 133v18h1v-18zM101 180v11h1v-11zM101 193v3h1v-3zM101 303v125h1v-125zM102 133v18h1v-18zM102 178v1h1v-1zM102 180v6h1v-6zM102 304v7h1v-7zM102 318v2h1v-2zM102 323v105h1v-105zM103 133v18h1v-18zM103 178v1h1v-1zM103 240v2h1v-2zM103 243v2h1v-2zM103 326v5h1v-5zM103 332v6h1v-6zM103 339v89h1v-89zM104 133v18h1v-18zM104 181v1h1v-1zM104 191v1h1v-1zM104 194v4h1v-4zM104 200v1h1v-1zM104 208v5h1v-5zM104 216v1h1v-1zM104 236v13h1v-13zM104 306v122h1v-122zM105 133v18h1v-18zM105 241v6h1v-6zM105 250v3h1v-3zM105 322v106h1v-106zM106 133v24h1v-24zM106 158v2h1v-2zM106 256v2h1v-2zM106 260v8h1v-8zM106 330v98h1v-98zM107 133v18h1v-18zM107 176v3h1v-3zM107 182v4h1v-4zM107 218v1h1v-1zM107 221v15h1v-15zM107 238v2h1v-2zM107 242v12h1v-12zM107 281v2h1v-2zM107 285v3h1v-3zM107 324v104h1v-104zM108 133v18h1v-18zM108 183v2h1v-2zM108 222v2h1v-2zM108 227v4h1v-4zM108 233v2h1v-2zM108 240v1h1v-1zM108 249v2h1v-2zM108 280v24h1v-24zM108 318v110h1v-110zM109 133v18h1v-18zM109 199v1h1v-1zM109 207v1h1v-1zM109 212v2h1v-2zM109 264v4h1v-4zM109 274v32h1v-32zM109 307v1h1v-1zM109 312v2h1v-2zM109 315v101h1v-101zM110 133v69h1v-69zM110 206v57h1v-57zM110 265v151h1v-151zM111 133v69h1v-69zM111 203v2h1v-2zM111 206v57h1v-57zM111 265v3h1v-3zM111 272v11h1v-11zM111 285v131h1v-131zM112 133v18h1v-18zM112 154v1h1v-1zM112 157v1h1v-1zM112 160v3h1v-3zM112 168v2h1v-2zM112 200v2h1v-2zM112 208v3h1v-3zM112 266v1h1v-1zM112 269v4h1v-4zM112 280v2h1v-2zM112 301v115h1v-115zM113 133v18h1v-18zM113 172v4h1v-4zM113 177v4h1v-4zM113 182v2h1v-2zM113 272v1h1v-1zM113 275v1h1v-1zM113 307v1h1v-1zM113 309v4h1v-4zM113 314v102h1v-102zM114 133v18h1v-18zM114 259v41h1v-41zM114 320v13h1v-13zM114 334v2h1v-2zM114 338v78h1v-78zM115 133v18h1v-18zM115 261v38h1v-38zM115 324v7h1v-7zM115 334v2h1v-2zM115 338v3h1v-3zM115 342v74h1v-74zM116 133v18h1v-18zM116 270v2h1v-2zM116 301v1h1v-1zM116 305v111h1v-111zM117 133v18h1v-18zM117 301v1h1v-1zM117 304v124h1v-124zM118 133v18h1v-18zM118 300v128h1v-128zM119 133v18h1v-18zM119 277v1h1v-1zM119 281v147h1v-147zM120 133v18h1v-18zM120 202v1h1v-1zM120 213v3h1v-3zM120 218v1h1v-1zM120 222v4h1v-4zM120 263v165h1v-165zM121 133v18h1v-18zM121 199v3h1v-3zM121 203v7h1v-7zM121 212v3h1v-3zM121 226v1h1v-1zM121 229v1h1v-1zM121 266v37h1v-37zM121 320v108h1v-108zM122 133v18h1v-18zM122 278v2h1v-2zM122 282v146h1v-146zM123 133v18h1v-18zM123 221v6h1v-6zM123 228v2h1v-2zM123 232v1h1v-1zM123 285v4h1v-4zM123 291v137h1v-137zM124 133v18h1v-18zM124 296v132h1v-132zM125 133v18h1v-18zM125 199v21h1v-21zM125 301v127h1v-127zM126 133v18h1v-18zM126 195v1h1v-1zM126 198v35h1v-35zM126 298v130h1v-130zM127 133v18h1v-18zM127 195v42h1v-42zM127 313v115h1v-115zM128 133v18h1v-18zM128 186v51h1v-51zM128 328v100h1v-100zM129 133v18h1v-18zM129 170v53h1v-53zM129 224v6h1v-6zM129 236v2h1v-2zM129 332v96h1v-96zM130 133v18h1v-18zM130 169v48h1v-48zM130 236v4h1v-4zM130 249v5h1v-5zM130 332v96h1v-96zM131 133v18h1v-18zM131 155v2h1v-2zM131 163v1h1v-1zM131 169v30h1v-30zM131 201v1h1v-1zM131 203v2h1v-2zM131 206v3h1v-3zM131 332v96h1v-96zM132 133v19h1v-19zM132 153v4h1v-4zM132 158v2h1v-2zM132 163v1h1v-1zM132 203v2h1v-2zM132 332v96h1v-96zM133 133v19h1v-19zM133 154v2h1v-2zM133 167v1h1v-1zM133 299v27h1v-27zM133 341v1h1v-1zM133 344v1h1v-1zM133 353v75h1v-75zM134 133v19h1v-19zM134 153v2h1v-2zM134 157v1h1v-1zM134 162v4h1v-4zM134 168v6h1v-6zM134 176v8h1v-8zM134 306v1h1v-1zM134 309v17h1v-17zM134 347v81h1v-81zM135 133v18h1v-18zM135 156v30h1v-30zM135 350v78h1v-78zM136 133v18h1v-18zM136 152v1h1v-1zM136 155v3h1v-3zM136 165v1h1v-1zM136 170v2h1v-2zM136 327v23h1v-23zM136 353v75h1v-75zM137 133v18h1v-18zM137 157v1h1v-1zM137 170v1h1v-1zM137 273v2h1v-2zM137 326v6h1v-6zM137 334v94h1v-94zM138 133v18h1v-18zM138 165v1h1v-1zM138 167v25h1v-25zM138 263v1h1v-1zM138 266v1h1v-1zM138 268v9h1v-9zM138 283v1h1v-1zM138 287v1h1v-1zM138 291v11h1v-11zM138 349v79h1v-79zM139 133v51h1v-51zM139 187v1h1v-1zM139 246v4h1v-4zM139 261v2h1v-2zM139 268v4h1v-4zM139 274v3h1v-3zM139 282v1h1v-1zM139 290v1h1v-1zM139 337v8h1v-8zM139 347v2h1v-2zM139 351v77h1v-77zM140 133v37h1v-37zM140 173v1h1v-1zM140 242v14h1v-14zM140 332v3h1v-3zM140 336v92h1v-92zM141 133v30h1v-30zM141 165v1h1v-1zM141 254v2h1v-2zM141 257v29h1v-29zM141 287v30h1v-30zM141 318v8h1v-8zM141 328v3h1v-3zM141 335v93h1v-93zM142 133v18h1v-18zM142 255v57h1v-57zM142 313v2h1v-2zM142 318v13h1v-13zM142 333v83h1v-83zM143 133v18h1v-18zM143 282v22h1v-22zM143 320v96h1v-96zM144 133v18h1v-18zM144 286v22h1v-22zM144 316v16h1v-16zM144 335v81h1v-81zM145 133v18h1v-18zM145 152v34h1v-34zM145 262v2h1v-2zM145 269v2h1v-2zM145 301v22h1v-22zM145 324v2h1v-2zM145 328v3h1v-3zM145 335v82h1v-82zM145 423v1h1v-1zM146 133v19h1v-19zM146 157v42h1v-42zM146 262v1h1v-1zM146 266v16h1v-16zM146 283v16h1v-16zM146 330v1h1v-1zM146 336v82h1v-82zM146 420v5h1v-5zM147 133v18h1v-18zM147 152v1h1v-1zM147 158v42h1v-42zM147 258v43h1v-43zM147 331v5h1v-5zM147 337v5h1v-5zM147 350v70h1v-70zM147 423v2h1v-2zM148 133v18h1v-18zM148 159v41h1v-41zM148 257v31h1v-31zM148 290v11h1v-11zM148 302v9h1v-9zM148 313v4h1v-4zM148 321v2h1v-2zM148 327v1h1v-1zM148 330v1h1v-1zM148 333v13h1v-13zM148 350v66h1v-66zM148 419v2h1v-2zM149 133v18h1v-18zM149 168v31h1v-31zM149 256v23h1v-23zM149 280v6h1v-6zM149 290v7h1v-7zM149 321v10h1v-10zM149 335v90h1v-90zM149 427v1h1v-1zM150 133v18h1v-18zM150 246v2h1v-2zM150 251v2h1v-2zM150 289v10h1v-10zM150 333v95h1v-95zM151 133v18h1v-18zM151 244v4h1v-4zM151 251v4h1v-4zM151 339v89h1v-89zM152 133v18h1v-18zM152 244v6h1v-6zM152 251v8h1v-8zM152 262v11h1v-11zM152 277v1h1v-1zM152 306v1h1v-1zM152 308v10h1v-10zM152 320v1h1v-1zM152 350v78h1v-78zM153 133v18h1v-18zM153 276v3h1v-3zM153 282v1h1v-1zM153 289v4h1v-4zM153 294v8h1v-8zM153 330v15h1v-15zM153 352v76h1v-76zM154 133v18h1v-18zM154 277v1h1v-1zM154 282v1h1v-1zM154 287v6h1v-6zM154 294v9h1v-9zM154 338v90h1v-90zM155 133v18h1v-18zM155 321v107h1v-107zM156 133v20h1v-20zM156 155v9h1v-9zM156 166v2h1v-2zM156 202v1h1v-1zM156 306v11h1v-11zM156 319v1h1v-1zM156 322v106h1v-106zM157 127v37h1v-37zM157 166v1h1v-1zM157 194v35h1v-35zM157 301v8h1v-8zM157 311v9h1v-9zM157 321v8h1v-8zM157 331v97h1v-97zM158 127v24h1v-24zM158 339v1h1v-1zM158 352v76h1v-76zM159 127v24h1v-24zM159 352v76h1v-76zM160 127v24h1v-24zM160 241v12h1v-12zM160 342v86h1v-86zM161 127v24h1v-24zM161 342v86h1v-86zM162 127v301h1v-301zM163 127v301h1v-301zM164 127v301h1v-301zM165 127v301h1v-301zM166 127v301h1v-301zM167 127v301h1v-301zM168 127v301h1v-301zM169 127v301h1v-301zM170 127v301h1v-301zM171 127v301h1v-301zM172 127v301h1v-301zM173 127v301h1v-301zM174 127v301h1v-301zM175 127v301h1v-301zM176 127v301h1v-301zM177 127v301h1v-301zM178 127v301h1v-301zM179 127v301h1v-301zM180 127v301h1v-301zM181 127v301h1v-301z"/><path fill="#00c040" d="M43 127v301h1v-301zM44 127v301h1v-301zM45 127v301h1v-301zM46 127v301h1v-301zM47 127v301h1v-301zM48 127v301h1v-301zM49 127v301h1v-301zM50 127v301h1v-301zM51 127v301h1v-301zM52 127v301h1v-301zM53 133v295h1v-295zM54 133v295h1v-295zM55 133v295h1v-295zM56 133v295h1v-295zM57 133v295h1v-295zM58 133v295h1v-295zM59 133v295h1v-295zM60 133v283h1v-283zM60 417v11h1v-11zM61 133v283h1v-283zM61 418v10h1v-10zM62 133v18h1v-18zM62 261v155h1v-155zM62 419v9h1v-9zM63 133v17h1v-17zM63 157v4h1v-4zM63 218v1h1v-1zM63 221v1h1v-1zM63 226v190h1v-190zM63 420v8h1v-8zM64 133v34h1v-34zM64 168v1h1v-1zM64 202v2h1v-2zM64 210v1h1v-1zM64 227v6h1v-6zM64 235v181h1v-181zM64 420v8h1v-8zM65 133v34h1v-34zM65 198v8h1v-8zM65 208v1h1v-1zM65 239v2h1v-2zM65 246v9h1v-9zM65 256v5h1v-5zM65 274v1h1v-1zM65 285v3h1v-3zM65 293v1h1v-1zM65 297v119h1v-119zM65 421v7h1v-7zM66 133v17h1v-17zM66 234v26h1v-26zM66 300v116h1v-116zM66 422v6h1v-6zM67 133v40h1v-40zM67 230v30h1v-30zM67 308v21h1v-21zM67 349v2h1v-2zM67 355v61h1v-61zM67 423v5h1v-5zM68 133v43h1v-43zM68 215v45h1v-45zM68 325v3h1v-3zM68 331v1h1v-1zM68 351v1h1v-1zM68 353v63h1v-63zM68 424v4h1v-4zM69 133v43h1v-43zM69 216v2h1v-2zM69 219v20h1v-20zM69 253v1h1v-1zM69 341v75h1v-75zM69 424v4h1v-4zM70 133v18h1v-18zM70 342v74h1v-74zM70 425v3h1v-3zM71 133v18h1v-18zM71 264v14h1v-14zM71 343v73h1v-73zM71 426v2h1v-2zM72 133v18h1v-18zM72 255v40h1v-40zM72 342v86h1v-86zM73 133v17h1v-17zM73 152v6h1v-6zM73 162v1h1v-1zM73 285v30h1v-30zM73 342v86h1v-86zM74 133v18h1v-18zM74 289v139h1v-139zM75 133v18h1v-18zM75 241v37h1v-37zM75 281v2h1v-2zM75 317v3h1v-3zM75 322v1h1v-1zM75 325v10h1v-10zM75 337v91h1v-91zM76 133v18h1v-18zM76 245v3h1v-3zM76 249v2h1v-2zM76 252v33h1v-33zM76 288v3h1v-3zM76 292v136h1v-136zM77 133v17h1v-17zM77 257v171h1v-171zM78 133v19h1v-19zM78 156v11h1v-11zM78 272v2h1v-2zM78 275v153h1v-153zM79 133v38h1v-38zM79 173v2h1v-2zM79 178v1h1v-1zM79 279v149h1v-149zM80 133v35h1v-35zM80 235v25h1v-25zM80 356v72h1v-72zM81 133v53h1v-53zM81 236v1h1v-1zM81 238v2h1v-2zM81 241v16h1v-16zM81 304v22h1v-22zM81 347v5h1v-5zM81 355v73h1v-73zM82 133v54h1v-54zM82 271v1h1v-1zM82 273v2h1v-2zM82 295v37h1v-37zM82 333v1h1v-1zM82 335v93h1v-93zM83 133v54h1v-54zM83 261v19h1v-19zM83 296v36h1v-36zM83 337v91h1v-91zM84 133v18h1v-18zM84 164v31h1v-31zM84 197v2h1v-2zM84 209v2h1v-2zM84 213v1h1v-1zM84 262v16h1v-16zM84 310v7h1v-7zM84 318v2h1v-2zM84 325v4h1v-4zM84 341v87h1v-87zM85 133v18h1v-18zM85 311v1h1v-1zM85 315v2h1v-2zM85 339v89h1v-89zM86 133v16h1v-16zM86 219v1h1v-1zM86 308v4h1v-4zM86 313v7h1v-7zM86 342v86h1v-86zM87 133v17h1v-17zM87 177v8h1v-8zM87 189v2h1v-2zM87 206v9h1v-9zM87 225v3h1v-3zM87 278v4h1v-4zM87 284v43h1v-43zM87 328v3h1v-3zM87 335v1h1v-1zM87 341v87h1v-87zM88 133v17h1v-17zM88 208v4h1v-4zM88 228v7h1v-7zM88 259v2h1v-2zM88 264v15h1v-15zM88 294v2h1v-2zM88 297v131h1v-131zM89 133v17h1v-17zM89 208v3h1v-3zM89 229v7h1v-7zM89 256v22h1v-22zM89 328v100h1v-100zM90 133v16h1v-16zM90 209v2h1v-2zM90 229v7h1v-7zM90 258v20h1v-20zM90 313v115h1v-115zM91 133v18h1v-18zM91 208v4h1v-4zM91 228v8h1v-8zM91 260v2h1v-2zM91 264v15h1v-15zM91 314v114h1v-114zM92 133v18h1v-18zM92 159v3h1v-3zM92 209v6h1v-6zM92 225v11h1v-11zM92 259v2h1v-2zM92 263v14h1v-14zM92 331v2h1v-2zM92 334v94h1v-94zM93 133v18h1v-18zM93 210v25h1v-25zM93 254v7h1v-7zM93 262v18h1v-18zM93 283v1h1v-1zM93 321v107h1v-107zM94 133v35h1v-35zM94 219v1h1v-1zM94 243v10h1v-10zM94 254v174h1v-174zM95 133v43h1v-43zM95 239v27h1v-27zM95 269v6h1v-6zM95 276v9h1v-9zM95 287v141h1v-141zM96 133v44h1v-44zM96 235v18h1v-18zM96 254v3h1v-3zM96 259v2h1v-2zM96 302v2h1v-2zM96 305v123h1v-123zM97 133v44h1v-44zM97 183v5h1v-5zM97 192v5h1v-5zM97 210v1h1v-1zM97 309v1h1v-1zM97 313v4h1v-4zM97 320v108h1v-108zM98 133v17h1v-17zM98 153v23h1v-23zM98 183v3h1v-3zM98 195v3h1v-3zM98 308v120h1v-120zM99 133v17h1v-17zM99 300v128h1v-128zM100 133v18h1v-18zM100 301v127h1v-127zM101 133v18h1v-18zM101 180v11h1v-11zM101 193v3h1v-3zM101 303v125h1v-125zM102 133v18h1v-18zM102 178v1h1v-1zM102 180v6h1v-6zM102 304v7h1v-7zM102 318v2h1v-2zM102 323v105h1v-105zM103 133v18h1v-18zM103 178v1h1v-1zM103 240v2h1v-2zM103 243v2h1v-2zM103 326v5h1v-5zM103 332v6h1v-6zM103 339v89h1v-89zM104 133v17h1v-17zM104 181v1h1v-1zM104 191v1h1v-1zM104 194v4h1v-4zM104 200v1h1v-1zM104 208v5h1v-5zM104 216v1h1v-1zM104 236v12h1v-12zM104 307v121h1v-121zM105 133v18h1v-18zM105 241v6h1v-6zM105 322v106h1v-106zM106 133v24h1v-24zM106 158v2h1v-2zM106 256v2h1v-2zM106 261v1h1v-1zM106 330v98h1v-98zM107 133v18h1v-18zM107 176v3h1v-3zM107 182v4h1v-4zM107 218v1h1v-1zM107 221v15h1v-15zM107 238v2h1v-2zM107 242v12h1v-12zM107 324v104h1v-104zM108 133v18h1v-18zM108 183v2h1v-2zM108 222v2h1v-2zM108 227v4h1v-4zM108 233v2h1v-2zM108 240v1h1v-1zM108 249v2h1v-2zM108 280v23h1v-23zM108 318v110h1v-110zM109 133v18h1v-18zM109 264v4h1v-4zM109 274v32h1v-32zM109 307v1h1v-1zM109 312v2h1v-2zM109 315v101h1v-101zM110 133v69h1v-69zM110 206v57h1v-57zM110 265v151h1v-151zM111 133v69h1v-69zM111 203v2h1v-2zM111 206v57h1v-57zM111 265v3h1v-3zM111 272v11h1v-11zM111 285v131h1v-131zM112 133v17h1v-17zM112 154v1h1v-1zM112 157v1h1v-1zM112 160v3h1v-3zM112 168v2h1v-2zM112 266v1h1v-1zM112 269v4h1v-4zM112 280v2h1v-2zM112 301v115h1v-115zM113 133v18h1v-18zM113 172v4h1v-4zM113 177v4h1v-4zM113 182v2h1v-2zM113 272v1h1v-1zM113 275v1h1v-1zM113 307v1h1v-1zM113 309v4h1v-4zM113 314v102h1v-102zM114 133v18h1v-18zM114 259v41h1v-41zM114 320v13h1v-13zM114 334v2h1v-2zM114 338v78h1v-78zM115 133v18h1v-18zM115 261v38h1v-38zM115 324v7h1v-7zM115 334v2h1v-2zM115 338v3h1v-3zM115 342v74h1v-74zM116 133v17h1v-17zM116 270v2h1v-2zM116 301v1h1v-1zM116 305v111h1v-111zM117 133v18h1v-18zM117 301v1h1v-1zM117 304v124h1v-124zM118 133v18h1v-18zM118 300v128h1v-128zM119 133v18h1v-18zM119 277v1h1v-1zM119 281v147h1v-147zM120 133v18h1v-18zM120 202v1h1v-1zM120 213v3h1v-3zM120 218v1h1v-1zM120 222v4h1v-4zM120 263v165h1v-165zM121 133v18h1v-18zM121 199v3h1v-3zM121 203v7h1v-7zM121 212v3h1v-3zM121 226v1h1v-1zM121 229v1h1v-1zM121 266v37h1v-37zM121 320v108h1v-108zM122 133v17h1v-17zM122 278v2h1v-2zM122 282v146h1v-146zM123 133v17h1v-17zM123 221v6h1v-6zM123 228v2h1v-2zM123 232v1h1v-1zM123 285v4h1v-4zM123 291v137h1v-137zM124 133v17h1v-17zM124 296v132h1v-132zM125 133v18h1v-18zM125 199v20h1v-20zM125 301v127h1v-127zM126 133v17h1v-17zM126 195v1h1v-1zM126 198v34h1v-34zM126 302v126h1v-126zM127 133v17h1v-17zM127 195v42h1v-42zM127 317v111h1v-111zM128 133v17h1v-17zM128 187v50h1v-50zM128 331v97h1v-97zM129 133v18h1v-18zM129 172v51h1v-51zM129 224v6h1v-6zM129 236v2h1v-2zM129 332v96h1v-96zM130 133v18h1v-18zM130 169v48h1v-48zM130 236v4h1v-4zM130 249v5h1v-5zM130 333v95h1v-95zM131 133v18h1v-18zM131 155v2h1v-2zM131 163v1h1v-1zM131 169v29h1v-29zM131 201v1h1v-1zM131 203v2h1v-2zM131 206v3h1v-3zM131 332v96h1v-96zM132 133v19h1v-19zM132 153v4h1v-4zM132 158v2h1v-2zM132 163v1h1v-1zM132 203v2h1v-2zM132 332v96h1v-96zM133 133v19h1v-19zM133 154v2h1v-2zM133 167v1h1v-1zM133 300v1h1v-1zM133 302v18h1v-18zM133 341v1h1v-1zM133 344v1h1v-1zM133 353v75h1v-75zM134 133v19h1v-19zM134 153v2h1v-2zM134 157v1h1v-1zM134 162v4h1v-4zM134 168v6h1v-6zM134 176v8h1v-8zM134 306v1h1v-1zM134 309v17h1v-17zM134 347v81h1v-81zM135 133v18h1v-18zM135 156v30h1v-30zM135 350v78h1v-78zM136 133v18h1v-18zM136 152v1h1v-1zM136 155v3h1v-3zM136 165v1h1v-1zM136 170v2h1v-2zM136 327v23h1v-23zM136 354v74h1v-74zM137 133v18h1v-18zM137 157v1h1v-1zM137 170v1h1v-1zM137 273v2h1v-2zM137 326v6h1v-6zM137 334v94h1v-94zM138 133v18h1v-18zM138 165v1h1v-1zM138 167v25h1v-25zM138 263v1h1v-1zM138 266v1h1v-1zM138 268v9h1v-9zM138 283v1h1v-1zM138 287v1h1v-1zM138 291v11h1v-11zM138 349v79h1v-79zM139 133v51h1v-51zM139 187v1h1v-1zM139 246v4h1v-4zM139 261v2h1v-2zM139 268v4h1v-4zM139 274v3h1v-3zM139 282v1h1v-1zM139 290v1h1v-1zM139 337v8h1v-8zM139 347v2h1v-2zM139 351v77h1v-77zM140 133v37h1v-37zM140 173v1h1v-1zM140 242v14h1v-14zM140 332v3h1v-3zM140 336v92h1v-92zM141 133v30h1v-30zM141 165v1h1v-1zM141 254v2h1v-2zM141 257v29h1v-29zM141 287v30h1v-30zM141 318v8h1v-8zM141 328v3h1v-3zM141 335v93h1v-93zM142 133v18h1v-18zM142 255v57h1v-57zM142 313v2h1v-2zM142 318v13h1v-13zM142 333v83h1v-83zM143 133v17h1v-17zM143 282v22h1v-22zM143 320v96h1v-96zM144 133v17h1v-17zM144 286v22h1v-22zM144 316v16h1v-16zM144 335v81h1v-81zM145 133v18h1v-18zM145 152v33h1v-33zM145 262v2h1v-2zM145 269v2h1v-2zM145 301v22h1v-22zM145 324v2h1v-2zM145 328v3h1v-3zM145 335v81h1v-81zM146 133v19h1v-19zM146 157v42h1v-42zM146 262v1h1v-1zM146 266v16h1v-16zM146 283v16h1v-16zM146 330v1h1v-1zM146 336v80h1v-80zM147 133v17h1v-17zM147 152v1h1v-1zM147 158v42h1v-42zM147 258v43h1v-43zM147 331v5h1v-5zM147 337v5h1v-5zM147 354v62h1v-62zM148 133v17h1v-17zM148 159v41h1v-41zM148 257v31h1v-31zM148 290v11h1v-11zM148 302v9h1v-9zM148 313v4h1v-4zM148 321v2h1v-2zM148 327v1h1v-1zM148 330v1h1v-1zM148 333v13h1v-13zM148 353v63h1v-63zM149 133v17h1v-17zM149 170v2h1v-2zM149 173v26h1v-26zM149 256v23h1v-23zM149 280v6h1v-6zM149 290v7h1v-7zM149 321v10h1v-10zM149 335v81h1v-81zM149 419v2h1v-2zM150 133v18h1v-18zM150 246v2h1v-2zM150 251v2h1v-2zM150 289v10h1v-10zM150 333v93h1v-93zM150 427v1h1v-1zM151 133v18h1v-18zM151 244v4h1v-4zM151 251v4h1v-4zM151 339v89h1v-89zM152 133v18h1v-18zM152 244v6h1v-6zM152 251v8h1v-8zM152 262v11h1v-11zM152 277v1h1v-1zM152 306v1h1v-1zM152 308v10h1v-10zM152 320v1h1v-1zM152 350v78h1v-78zM153 133v18h1v-18zM153 276v3h1v-3zM153 282v1h1v-1zM153 289v4h1v-4zM153 294v8h1v-8zM153 330v15h1v-15zM153 354v74h1v-74zM154 133v17h1v-17zM154 277v1h1v-1zM154 282v1h1v-1zM154 287v6h1v-6zM154 294v9h1v-9zM154 338v16h1v-16zM154 356v72h1v-72zM155 133v17h1v-17zM155 321v107h1v-107zM156 133v20h1v-20zM156 155v9h1v-9zM156 166v2h1v-2zM156 202v1h1v-1zM156 306v11h1v-11zM156 319v1h1v-1zM156 322v106h1v-106zM157 133v31h1v-31zM157 166v1h1v-1zM157 194v35h1v-35zM157 301v8h1v-8zM157 311v9h1v-9zM157 321v8h1v-8zM157 331v97h1v-97zM158 127v23h1v-23zM158 339v1h1v-1zM158 354v74h1v-74zM159 127v24h1v-24zM159 352v76h1v-76zM160 127v24h1v-24zM160 241v12h1v-12zM160 342v86h1v-86zM161 127v24h1v-24zM161 342v86h1v-86zM162 127v301h1v-301zM163 127v301h1v-301zM164 127v301h1v-301zM165 127v301h1v-301zM166 127v301h1v-301zM167 127v301h1v-301zM168 127v301h1v-301zM169 127v301h1v-301zM170 127v301h1v-301zM171 127v301h1v-301zM172 127v301h1v-301zM173 127v301h1v-301zM174 127v301h1v-301zM175 127v301h1v-301zM176 127v301h1v-301zM177 127v301h1v-301zM178 127v301h1v-301zM179 127v301h1v-301zM180 127v301h1v-301zM181 127v301h1v-301z"/><path fill="#20ff00" d="M43 127v301h1v-301zM44 127v301h1v-301zM45 127v301h1v-301zM46 127v301h1v-301zM47 127v301h1v-301zM48 127v301h1v-301zM49 127v301h1v-301zM50 127v301h1v-301zM51 127v301h1v-301zM52 127v301h1v-301zM53 133v295h1v-295zM54 133v295h1v-295zM55 133v295h1v-295zM56 133v55h1v-55zM56 194v234h1v-234zM57 133v51h1v-51zM57 195v233h1v-233zM58 133v48h1v-48zM58 198v38h1v-38zM58 245v62h1v-62zM58 321v107h1v-107zM59 133v16h1v-16zM59 248v9h1v-9zM59 269v1h1v-1zM59 276v17h1v-17zM59 323v93h1v-93zM59 417v11h1v-11zM60 133v16h1v-16zM60 240v13h1v-13zM60 282v6h1v-6zM60 305v10h1v-10zM60 337v79h1v-79zM60 418v10h1v-10zM61 133v16h1v-16zM61 302v27h1v-27zM61 331v2h1v-2zM61 335v1h1v-1zM61 338v78h1v-78zM61 419v9h1v-9zM62 133v16h1v-16zM62 262v4h1v-4zM62 267v12h1v-12zM62 280v3h1v-3zM62 285v1h1v-1zM62 293v40h1v-40zM62 334v2h1v-2zM62 338v78h1v-78zM62 419v9h1v-9zM63 133v16h1v-16zM63 227v2h1v-2zM63 233v183h1v-183zM63 420v8h1v-8zM64 133v16h1v-16zM64 150v15h1v-15zM64 231v1h1v-1zM64 236v180h1v-180zM64 421v7h1v-7zM65 133v16h1v-16zM65 150v16h1v-16zM65 200v6h1v-6zM65 248v6h1v-6zM65 298v1h1v-1zM65 302v114h1v-114zM65 422v6h1v-6zM66 133v16h1v-16zM66 237v22h1v-22zM66 305v18h1v-18zM66 326v3h1v-3zM66 331v6h1v-6zM66 347v2h1v-2zM66 350v66h1v-66zM66 423v5h1v-5zM67 133v35h1v-35zM67 232v27h1v-27zM67 314v9h1v-9zM67 349v2h1v-2zM67 357v59h1v-59zM67 423v5h1v-5zM68 133v43h1v-43zM68 217v2h1v-2zM68 220v38h1v-38zM68 353v63h1v-63zM68 424v4h1v-4zM69 133v16h1v-16zM69 154v22h1v-22zM69 220v15h1v-15zM69 351v65h1v-65zM69 425v3h1v-3zM70 133v16h1v-16zM70 345v71h1v-71zM70 426v2h1v-2zM71 133v16h1v-16zM71 264v2h1v-2zM71 344v72h1v-72zM71 427v1h1v-1zM72 133v16h1v-16zM72 256v1h1v-1zM72 259v30h1v-30zM72 342v86h1v-86zM73 133v16h1v-16zM73 287v1h1v-1zM73 290v6h1v-6zM73 297v4h1v-4zM73 342v86h1v-86zM74 133v15h1v-15zM74 293v3h1v-3zM74 298v1h1v-1zM74 300v3h1v-3zM74 304v1h1v-1zM74 307v30h1v-30zM74 341v87h1v-87zM75 133v16h1v-16zM75 242v14h1v-14zM75 257v4h1v-4zM75 262v4h1v-4zM75 268v10h1v-10zM75 344v84h1v-84zM76 133v16h1v-16zM76 245v2h1v-2zM76 253v3h1v-3zM76 257v22h1v-22zM76 280v3h1v-3zM76 301v1h1v-1zM76 312v116h1v-116zM77 133v16h1v-16zM77 257v30h1v-30zM77 288v3h1v-3zM77 292v136h1v-136zM78 133v19h1v-19zM78 156v11h1v-11zM78 275v2h1v-2zM78 279v49h1v-49zM78 329v18h1v-18zM78 348v80h1v-80zM79 133v38h1v-38zM79 173v1h1v-1zM79 280v51h1v-51zM79 333v1h1v-1zM79 336v5h1v-5zM79 347v9h1v-9zM79 357v71h1v-71zM80 133v22h1v-22zM80 239v1h1v-1zM80 241v17h1v-17zM80 357v71h1v-71zM81 133v51h1v-51zM81 241v14h1v-14zM81 312v4h1v-4zM81 355v2h1v-2zM81 358v70h1v-70zM82 133v53h1v-53zM82 300v27h1v-27zM82 338v7h1v-7zM82 347v81h1v-81zM83 133v53h1v-53zM83 264v3h1v-3zM83 268v7h1v-7zM83 303v27h1v-27zM83 345v83h1v-83zM84 133v16h1v-16zM84 170v17h1v-17zM84 190v2h1v-2zM84 193v2h1v-2zM84 263v12h1v-12zM84 325v4h1v-4zM84 347v81h1v-81zM85 133v16h1v-16zM85 339v7h1v-7zM85 350v78h1v-78zM86 133v15h1v-15zM86 315v1h1v-1zM86 347v81h1v-81zM87 133v15h1v-15zM87 177v8h1v-8zM87 206v8h1v-8zM87 226v1h1v-1zM87 285v1h1v-1zM87 288v5h1v-5zM87 294v31h1v-31zM87 345v83h1v-83zM88 133v15h1v-15zM88 208v4h1v-4zM88 228v6h1v-6zM88 270v6h1v-6zM88 307v2h1v-2zM88 312v5h1v-5zM88 318v5h1v-5zM88 341v87h1v-87zM89 133v15h1v-15zM89 209v2h1v-2zM89 229v6h1v-6zM89 259v18h1v-18zM89 332v4h1v-4zM89 337v2h1v-2zM89 344v2h1v-2zM89 349v1h1v-1zM89 351v77h1v-77zM90 133v15h1v-15zM90 209v2h1v-2zM90 229v7h1v-7zM90 259v19h1v-19zM90 314v8h1v-8zM90 327v2h1v-2zM90 331v2h1v-2zM90 338v90h1v-90zM91 133v16h1v-16zM91 208v4h1v-4zM91 228v8h1v-8zM91 261v1h1v-1zM91 264v14h1v-14zM91 314v9h1v-9zM91 325v1h1v-1zM91 337v91h1v-91zM92 133v16h1v-16zM92 209v5h1v-5zM92 226v9h1v-9zM92 264v2h1v-2zM92 269v1h1v-1zM92 272v1h1v-1zM92 337v91h1v-91zM93 133v16h1v-16zM93 212v22h1v-22zM93 259v2h1v-2zM93 262v17h1v-17zM93 328v13h1v-13zM93 352v76h1v-76zM94 133v34h1v-34zM94 245v1h1v-1zM94 248v5h1v-5zM94 254v94h1v-94zM94 352v76h1v-76zM95 133v43h1v-43zM95 240v1h1v-1zM95 243v16h1v-16zM95 262v3h1v-3zM95 277v7h1v-7zM95 288v2h1v-2zM95 296v52h1v-52zM95 349v79h1v-79zM96 133v44h1v-44zM96 235v2h1v-2zM96 238v15h1v-15zM96 254v1h1v-1zM96 307v4h1v-4zM96 314v3h1v-3zM96 319v28h1v-28zM96 349v79h1v-79zM97 133v44h1v-44zM97 183v3h1v-3zM97 350v78h1v-78zM98 133v16h1v-16zM98 155v21h1v-21zM98 184v1h1v-1zM98 309v1h1v-1zM98 312v1h1v-1zM98 346v82h1v-82zM99 133v16h1v-16zM99 301v27h1v-27zM99 342v2h1v-2zM99 347v81h1v-81zM100 133v16h1v-16zM100 303v125h1v-125zM101 133v16h1v-16zM101 181v1h1v-1zM101 184v3h1v-3zM101 189v1h1v-1zM101 194v1h1v-1zM101 311v117h1v-117zM102 133v16h1v-16zM102 304v7h1v-7zM102 327v1h1v-1zM102 329v2h1v-2zM102 333v95h1v-95zM103 133v16h1v-16zM103 350v78h1v-78zM104 133v15h1v-15zM104 191v1h1v-1zM104 194v3h1v-3zM104 200v1h1v-1zM104 208v5h1v-5zM104 240v8h1v-8zM104 307v121h1v-121zM105 133v17h1v-17zM105 244v3h1v-3zM105 333v95h1v-95zM106 133v24h1v-24zM106 158v2h1v-2zM106 336v4h1v-4zM106 354v74h1v-74zM107 133v16h1v-16zM107 176v3h1v-3zM107 182v3h1v-3zM107 222v2h1v-2zM107 225v7h1v-7zM107 233v3h1v-3zM107 238v2h1v-2zM107 242v8h1v-8zM107 325v103h1v-103zM108 133v16h1v-16zM108 184v1h1v-1zM108 228v2h1v-2zM108 234v1h1v-1zM108 240v1h1v-1zM108 281v17h1v-17zM108 322v94h1v-94zM109 133v16h1v-16zM109 275v2h1v-2zM109 279v24h1v-24zM109 304v1h1v-1zM109 321v25h1v-25zM109 347v69h1v-69zM110 133v69h1v-69zM110 206v57h1v-57zM110 266v1h1v-1zM110 275v2h1v-2zM110 280v26h1v-26zM110 316v100h1v-100zM111 133v69h1v-69zM111 206v57h1v-57zM111 266v1h1v-1zM111 286v2h1v-2zM111 295v121h1v-121zM112 133v16h1v-16zM112 157v1h1v-1zM112 160v3h1v-3zM112 305v2h1v-2zM112 315v101h1v-101zM113 133v16h1v-16zM113 173v2h1v-2zM113 309v4h1v-4zM113 319v97h1v-97zM114 133v16h1v-16zM114 262v36h1v-36zM114 320v13h1v-13zM114 344v72h1v-72zM115 133v16h1v-16zM115 262v33h1v-33zM115 296v1h1v-1zM115 324v7h1v-7zM115 348v68h1v-68zM116 133v16h1v-16zM116 317v99h1v-99zM117 133v16h1v-16zM117 304v112h1v-112zM118 133v16h1v-16zM118 303v125h1v-125zM119 133v16h1v-16zM119 285v143h1v-143zM120 133v16h1v-16zM120 214v2h1v-2zM120 223v2h1v-2zM120 264v65h1v-65zM120 331v97h1v-97zM121 133v16h1v-16zM121 200v2h1v-2zM121 206v4h1v-4zM121 213v1h1v-1zM121 226v1h1v-1zM121 267v33h1v-33zM121 324v104h1v-104zM122 133v15h1v-15zM122 285v6h1v-6zM122 292v9h1v-9zM122 302v2h1v-2zM122 317v111h1v-111zM123 133v15h1v-15zM123 221v6h1v-6zM123 228v2h1v-2zM123 296v132h1v-132zM124 133v16h1v-16zM124 300v1h1v-1zM124 303v125h1v-125zM125 133v15h1v-15zM125 199v17h1v-17zM125 304v124h1v-124zM126 133v16h1v-16zM126 195v1h1v-1zM126 198v34h1v-34zM126 307v121h1v-121zM127 133v16h1v-16zM127 195v42h1v-42zM127 324v104h1v-104zM128 133v15h1v-15zM128 189v48h1v-48zM128 332v96h1v-96zM129 133v16h1v-16zM129 173v50h1v-50zM129 224v6h1v-6zM129 333v95h1v-95zM130 133v15h1v-15zM130 169v42h1v-42zM130 213v4h1v-4zM130 334v94h1v-94zM131 133v16h1v-16zM131 150v1h1v-1zM131 155v2h1v-2zM131 163v1h1v-1zM131 169v27h1v-27zM131 201v1h1v-1zM131 203v2h1v-2zM131 333v95h1v-95zM132 133v19h1v-19zM132 153v4h1v-4zM132 158v2h1v-2zM132 163v1h1v-1zM132 203v1h1v-1zM132 332v96h1v-96zM133 133v19h1v-19zM133 154v2h1v-2zM133 167v1h1v-1zM133 353v75h1v-75zM134 133v16h1v-16zM134 151v1h1v-1zM134 153v2h1v-2zM134 157v1h1v-1zM134 162v4h1v-4zM134 168v6h1v-6zM134 176v8h1v-8zM134 311v3h1v-3zM134 315v5h1v-5zM134 347v81h1v-81zM135 133v16h1v-16zM135 156v30h1v-30zM135 350v78h1v-78zM136 133v18h1v-18zM136 152v1h1v-1zM136 155v3h1v-3zM136 165v1h1v-1zM136 170v2h1v-2zM136 334v8h1v-8zM136 354v74h1v-74zM137 133v18h1v-18zM137 157v1h1v-1zM137 170v1h1v-1zM137 274v1h1v-1zM137 334v8h1v-8zM137 349v79h1v-79zM138 133v15h1v-15zM138 165v1h1v-1zM138 167v25h1v-25zM138 263v1h1v-1zM138 266v1h1v-1zM138 268v9h1v-9zM138 283v1h1v-1zM138 287v1h1v-1zM138 293v5h1v-5zM138 349v79h1v-79zM139 133v51h1v-51zM139 187v1h1v-1zM139 248v1h1v-1zM139 262v1h1v-1zM139 269v1h1v-1zM139 274v2h1v-2zM139 351v77h1v-77zM140 133v37h1v-37zM140 173v1h1v-1zM140 242v14h1v-14zM140 332v3h1v-3zM140 336v9h1v-9zM140 353v75h1v-75zM141 133v30h1v-30zM141 165v1h1v-1zM141 254v2h1v-2zM141 257v29h1v-29zM141 287v4h1v-4zM141 293v3h1v-3zM141 330v1h1v-1zM141 337v91h1v-91zM142 133v15h1v-15zM142 255v57h1v-57zM142 313v2h1v-2zM142 318v10h1v-10zM142 333v1h1v-1zM142 336v80h1v-80zM143 133v16h1v-16zM143 284v20h1v-20zM143 320v3h1v-3zM143 324v92h1v-92zM144 133v16h1v-16zM144 290v1h1v-1zM144 298v3h1v-3zM144 302v2h1v-2zM144 306v2h1v-2zM144 317v1h1v-1zM144 320v12h1v-12zM144 335v81h1v-81zM145 133v16h1v-16zM145 152v30h1v-30zM145 269v2h1v-2zM145 306v3h1v-3zM145 310v13h1v-13zM145 324v2h1v-2zM145 328v3h1v-3zM145 335v81h1v-81zM146 133v16h1v-16zM146 158v41h1v-41zM146 266v16h1v-16zM146 283v3h1v-3zM146 288v6h1v-6zM146 296v3h1v-3zM146 336v1h1v-1zM146 339v1h1v-1zM146 352v64h1v-64zM147 133v15h1v-15zM147 149v1h1v-1zM147 158v42h1v-42zM147 260v41h1v-41zM147 356v60h1v-60zM148 133v16h1v-16zM148 159v41h1v-41zM148 258v30h1v-30zM148 306v1h1v-1zM148 327v1h1v-1zM148 330v1h1v-1zM148 333v5h1v-5zM148 339v2h1v-2zM148 355v61h1v-61zM149 133v16h1v-16zM149 176v23h1v-23zM149 259v20h1v-20zM149 280v6h1v-6zM149 330v1h1v-1zM149 335v9h1v-9zM149 349v67h1v-67zM150 133v16h1v-16zM150 289v7h1v-7zM150 333v83h1v-83zM151 133v16h1v-16zM151 251v2h1v-2zM151 350v74h1v-74zM151 425v3h1v-3zM152 133v16h1v-16zM152 245v1h1v-1zM152 248v1h1v-1zM152 254v3h1v-3zM152 266v6h1v-6zM152 309v1h1v-1zM152 314v1h1v-1zM152 351v70h1v-70zM152 425v3h1v-3zM153 133v16h1v-16zM153 277v1h1v-1zM153 282v1h1v-1zM153 289v4h1v-4zM153 294v4h1v-4zM153 330v15h1v-15zM153 355v73h1v-73zM154 133v16h1v-16zM154 282v1h1v-1zM154 287v6h1v-6zM154 294v4h1v-4zM154 338v16h1v-16zM154 357v71h1v-71zM155 133v16h1v-16zM155 321v107h1v-107zM156 133v15h1v-15zM156 151v2h1v-2zM156 155v9h1v-9zM156 166v2h1v-2zM156 312v5h1v-5zM156 319v1h1v-1zM156 322v106h1v-106zM157 133v31h1v-31zM157 166v1h1v-1zM157 194v35h1v-35zM157 307v2h1v-2zM157 311v9h1v-9zM157 321v8h1v-8zM157 331v15h1v-15zM157 350v78h1v-78zM158 133v16h1v-16zM158 356v72h1v-72zM159 127v22h1v-22zM159 352v76h1v-76zM160 127v22h1v-22zM160 241v9h1v-9zM160 251v1h1v-1zM160 344v1h1v-1zM160 349v79h1v-79zM161 127v22h1v-22zM161 342v2h1v-2zM161 350v78h1v-78zM162 127v22h1v-22zM162 179v3h1v-3zM162 341v4h1v-4zM162 357v71h1v-71zM163 127v22h1v-22zM163 350v78h1v-78zM164 127v301h1v-301zM165 127v301h1v-301zM166 127v301h1v-301zM167 127v301h1v-301zM168 127v301h1v-301zM169 127v301h1v-301zM170 127v301h1v-301zM171 127v301h1v-301zM172 127v301h1v-301zM173 127v301h1v-301zM174 127v301h1v-301zM175 127v301h1v-301zM176 127v301h1v-301zM177 127v301h1v-301zM178 127v301h1v-301zM179 127v301h1v-301zM180 127v301h1v-301zM181 127v301h1v-301z"/><path fill="#a0ff00" d="M43 127v301h1v-301zM44 127v301h1v-301zM45 127v301h1v-301zM46 127v301h1v-301zM47 127v301h1v-301zM48 127v301h1v-301zM49 127v301h1v-301zM50 127v301h1v-301zM51 127v301h1v-301zM52 133v295h1v-295zM53 133v295h1v-295zM54 133v14h1v-14zM54 150v278h1v-278zM55 133v14h1v-14zM55 169v18h1v-18zM55 221v2h1v-2zM55 268v5h1v-5zM55 314v8h1v-8zM55 352v76h1v-76zM56 133v14h1v-14zM56 173v1h1v-1zM56 269v2h1v-2zM56 338v4h1v-4zM56 351v77h1v-77zM57 133v14h1v-14zM57 312v2h1v-2zM57 315v2h1v-2zM57 318v110h1v-110zM58 133v14h1v-14zM58 217v12h1v-12zM58 268v2h1v-2zM58 326v20h1v-20zM58 347v2h1v-2zM58 353v63h1v-63zM58 417v11h1v-11zM59 133v15h1v-15zM59 329v16h1v-16zM59 348v68h1v-68zM59 418v10h1v-10zM60 133v15h1v-15zM60 244v1h1v-1zM60 246v2h1v-2zM60 249v3h1v-3zM60 305v10h1v-10zM60 337v8h1v-8zM60 347v69h1v-69zM60 418v10h1v-10zM61 133v14h1v-14zM61 302v10h1v-10zM61 339v5h1v-5zM61 350v66h1v-66zM61 419v9h1v-9zM62 133v14h1v-14zM62 306v1h1v-1zM62 310v7h1v-7zM62 318v3h1v-3zM62 339v5h1v-5zM62 352v64h1v-64zM62 420v8h1v-8zM63 133v14h1v-14zM63 243v45h1v-45zM63 290v126h1v-126zM63 421v7h1v-7zM64 133v14h1v-14zM64 155v8h1v-8zM64 242v45h1v-45zM64 291v2h1v-2zM64 295v1h1v-1zM64 301v1h1v-1zM64 304v112h1v-112zM64 422v6h1v-6zM65 133v14h1v-14zM65 162v1h1v-1zM65 329v10h1v-10zM65 346v1h1v-1zM65 349v67h1v-67zM65 422v6h1v-6zM66 133v15h1v-15zM66 240v1h1v-1zM66 246v7h1v-7zM66 331v6h1v-6zM66 355v61h1v-61zM66 423v5h1v-5zM67 133v15h1v-15zM67 237v20h1v-20zM67 349v2h1v-2zM67 358v58h1v-58zM67 424v4h1v-4zM68 133v14h1v-14zM68 225v1h1v-1zM68 227v2h1v-2zM68 230v4h1v-4zM68 235v5h1v-5zM68 242v1h1v-1zM68 248v4h1v-4zM68 356v60h1v-60zM68 425v3h1v-3zM69 133v14h1v-14zM69 355v61h1v-61zM69 426v2h1v-2zM70 133v14h1v-14zM70 345v71h1v-71zM70 426v2h1v-2zM71 133v15h1v-15zM71 344v72h1v-72zM71 427v1h1v-1zM72 133v14h1v-14zM72 280v2h1v-2zM72 343v85h1v-85zM73 133v15h1v-15zM73 343v85h1v-85zM74 133v14h1v-14zM74 322v1h1v-1zM74 342v86h1v-86zM75 133v14h1v-14zM75 346v82h1v-82zM76 133v15h1v-15zM76 270v2h1v-2zM76 322v23h1v-23zM76 348v80h1v-80zM77 133v15h1v-15zM77 261v16h1v-16zM77 310v9h1v-9zM77 320v2h1v-2zM77 329v99h1v-99zM78 133v17h1v-17zM78 282v1h1v-1zM78 284v23h1v-23zM78 309v1h1v-1zM78 312v3h1v-3zM78 330v13h1v-13zM78 355v73h1v-73zM79 133v36h1v-36zM79 282v1h1v-1zM79 284v17h1v-17zM79 304v3h1v-3zM79 309v1h1v-1zM79 333v1h1v-1zM79 347v9h1v-9zM79 358v70h1v-70zM80 133v15h1v-15zM80 246v4h1v-4zM80 359v69h1v-69zM81 133v14h1v-14zM81 356v1h1v-1zM81 358v70h1v-70zM82 133v15h1v-15zM82 307v15h1v-15zM82 338v7h1v-7zM82 352v76h1v-76zM83 133v15h1v-15zM83 323v7h1v-7zM83 350v78h1v-78zM84 133v15h1v-15zM84 325v4h1v-4zM84 352v76h1v-76zM85 133v15h1v-15zM85 339v7h1v-7zM85 353v75h1v-75zM86 133v14h1v-14zM86 352v76h1v-76zM87 133v14h1v-14zM87 178v5h1v-5zM87 351v77h1v-77zM88 133v14h1v-14zM88 355v73h1v-73zM89 133v14h1v-14zM89 332v4h1v-4zM89 351v77h1v-77zM90 133v14h1v-14zM90 351v77h1v-77zM91 133v14h1v-14zM91 337v91h1v-91zM92 133v15h1v-15zM92 337v91h1v-91zM93 133v15h1v-15zM93 352v76h1v-76zM94 133v32h1v-32zM94 255v32h1v-32zM94 288v1h1v-1zM94 293v4h1v-4zM94 299v10h1v-10zM94 310v1h1v-1zM94 313v28h1v-28zM94 356v72h1v-72zM95 133v43h1v-43zM95 331v7h1v-7zM95 354v74h1v-74zM96 133v44h1v-44zM96 242v1h1v-1zM96 245v3h1v-3zM96 354v74h1v-74zM97 133v44h1v-44zM97 354v74h1v-74zM98 133v15h1v-15zM98 157v19h1v-19zM98 346v82h1v-82zM99 133v15h1v-15zM99 309v5h1v-5zM99 315v3h1v-3zM99 347v81h1v-81zM100 133v15h1v-15zM100 313v2h1v-2zM100 318v110h1v-110zM101 133v15h1v-15zM101 322v106h1v-106zM102 133v15h1v-15zM102 304v7h1v-7zM102 352v76h1v-76zM103 133v14h1v-14zM103 350v78h1v-78zM104 133v14h1v-14zM104 200v1h1v-1zM104 244v1h1v-1zM104 246v1h1v-1zM104 339v89h1v-89zM105 133v15h1v-15zM105 340v88h1v-88zM106 133v17h1v-17zM106 354v74h1v-74zM107 133v15h1v-15zM107 331v10h1v-10zM107 354v74h1v-74zM108 133v15h1v-15zM108 287v1h1v-1zM108 327v89h1v-89zM109 133v14h1v-14zM109 291v2h1v-2zM109 347v69h1v-69zM110 133v68h1v-68zM110 207v1h1v-1zM110 209v54h1v-54zM110 345v71h1v-71zM111 133v69h1v-69zM111 206v57h1v-57zM111 338v1h1v-1zM111 340v76h1v-76zM112 133v14h1v-14zM112 324v5h1v-5zM112 332v2h1v-2zM112 336v3h1v-3zM112 340v3h1v-3zM112 344v2h1v-2zM112 347v69h1v-69zM113 133v15h1v-15zM113 309v4h1v-4zM113 319v12h1v-12zM113 344v72h1v-72zM114 133v15h1v-15zM114 266v2h1v-2zM114 272v8h1v-8zM114 288v1h1v-1zM114 320v13h1v-13zM114 344v72h1v-72zM115 133v15h1v-15zM115 324v7h1v-7zM115 353v63h1v-63zM116 133v15h1v-15zM116 324v17h1v-17zM116 352v64h1v-64zM117 133v14h1v-14zM117 315v101h1v-101zM118 133v15h1v-15zM118 309v119h1v-119zM119 133v15h1v-15zM119 304v1h1v-1zM119 311v1h1v-1zM119 314v1h1v-1zM119 317v1h1v-1zM119 320v5h1v-5zM119 352v76h1v-76zM120 133v15h1v-15zM120 288v4h1v-4zM120 299v1h1v-1zM120 352v76h1v-76zM121 133v14h1v-14zM121 288v3h1v-3zM121 328v100h1v-100zM122 133v14h1v-14zM122 324v1h1v-1zM122 326v102h1v-102zM123 133v14h1v-14zM123 307v121h1v-121zM124 133v14h1v-14zM124 308v2h1v-2zM124 311v3h1v-3zM124 315v2h1v-2zM124 318v5h1v-5zM124 325v2h1v-2zM124 328v1h1v-1zM124 331v2h1v-2zM124 334v2h1v-2zM124 338v2h1v-2zM124 345v83h1v-83zM125 133v14h1v-14zM125 346v82h1v-82zM126 133v14h1v-14zM126 200v1h1v-1zM126 203v4h1v-4zM126 313v14h1v-14zM126 332v2h1v-2zM126 339v1h1v-1zM126 347v81h1v-81zM127 133v14h1v-14zM127 200v9h1v-9zM127 330v17h1v-17zM127 350v78h1v-78zM128 133v14h1v-14zM128 201v17h1v-17zM128 219v3h1v-3zM128 225v2h1v-2zM128 332v96h1v-96zM129 133v14h1v-14zM129 204v2h1v-2zM129 216v3h1v-3zM129 342v86h1v-86zM130 133v14h1v-14zM130 345v2h1v-2zM130 348v80h1v-80zM131 133v15h1v-15zM131 333v95h1v-95zM132 133v15h1v-15zM132 155v1h1v-1zM132 333v95h1v-95zM133 133v17h1v-17zM133 353v75h1v-75zM134 133v14h1v-14zM134 179v2h1v-2zM134 347v81h1v-81zM135 133v14h1v-14zM135 160v1h1v-1zM135 165v3h1v-3zM135 169v4h1v-4zM135 174v11h1v-11zM135 350v78h1v-78zM136 133v14h1v-14zM136 354v74h1v-74zM137 133v14h1v-14zM137 351v77h1v-77zM138 133v14h1v-14zM138 172v14h1v-14zM138 270v2h1v-2zM138 349v79h1v-79zM139 133v14h1v-14zM139 153v4h1v-4zM139 159v1h1v-1zM139 161v2h1v-2zM139 166v2h1v-2zM139 169v2h1v-2zM139 178v1h1v-1zM139 351v77h1v-77zM140 133v36h1v-36zM140 247v1h1v-1zM140 250v3h1v-3zM140 354v74h1v-74zM141 133v14h1v-14zM141 148v1h1v-1zM141 162v1h1v-1zM141 261v19h1v-19zM141 351v77h1v-77zM142 133v14h1v-14zM142 260v1h1v-1zM142 262v22h1v-22zM142 285v5h1v-5zM142 295v2h1v-2zM142 347v69h1v-69zM143 133v14h1v-14zM143 287v1h1v-1zM143 291v2h1v-2zM143 347v69h1v-69zM144 133v14h1v-14zM144 325v5h1v-5zM144 336v80h1v-80zM145 133v15h1v-15zM145 157v6h1v-6zM145 353v63h1v-63zM146 133v14h1v-14zM146 269v1h1v-1zM146 277v1h1v-1zM146 357v59h1v-59zM147 133v14h1v-14zM147 264v23h1v-23zM147 288v6h1v-6zM147 357v59h1v-59zM148 133v14h1v-14zM148 261v20h1v-20zM148 355v61h1v-61zM149 133v15h1v-15zM149 270v2h1v-2zM149 273v2h1v-2zM149 354v62h1v-62zM150 133v14h1v-14zM150 351v65h1v-65zM151 133v14h1v-14zM151 350v66h1v-66zM152 133v15h1v-15zM152 353v65h1v-65zM153 133v14h1v-14zM153 330v15h1v-15zM153 355v64h1v-64zM154 133v15h1v-15zM154 338v14h1v-14zM154 357v69h1v-69zM155 133v14h1v-14zM155 321v106h1v-106zM156 133v14h1v-14zM156 161v2h1v-2zM156 319v1h1v-1zM156 322v25h1v-25zM156 352v76h1v-76zM157 133v15h1v-15zM157 149v1h1v-1zM157 152v1h1v-1zM157 157v1h1v-1zM157 197v23h1v-23zM157 224v2h1v-2zM157 328v1h1v-1zM157 331v8h1v-8zM157 355v73h1v-73zM158 133v15h1v-15zM158 357v71h1v-71zM159 133v14h1v-14zM159 352v76h1v-76zM160 127v21h1v-21zM160 351v77h1v-77zM161 127v21h1v-21zM161 342v2h1v-2zM161 354v74h1v-74zM162 127v21h1v-21zM162 342v3h1v-3zM162 358v70h1v-70zM163 127v21h1v-21zM163 354v74h1v-74zM164 127v21h1v-21zM164 353v75h1v-75zM165 127v20h1v-20zM165 306v26h1v-26zM165 339v2h1v-2zM165 342v2h1v-2zM165 347v81h1v-81zM166 127v301h1v-301zM167 127v301h1v-301zM168 127v301h1v-301zM169 127v301h1v-301zM170 127v301h1v-301zM171 127v301h1v-301zM172 127v301h1v-301zM173 127v301h1v-301zM174 127v301h1v-301zM175 127v301h1v-301zM176 127v301h1v-301zM177 127v301h1v-301zM178 127v301h1v-301zM179 127v301h1v-301zM180 127v301h1v-301zM181 127v301h1v-301z"/><path fill="#ffff00" d="M43 127v301h1v-301zM44 127v301h1v-301zM45 127v301h1v-301zM46 127v301h1v-301zM47 127v301h1v-301zM48 127v301h1v-301zM49 127v301h1v-301zM50 127v301h1v-301zM51 127v301h1v-301zM52 133v295h1v-295zM53 133v13h1v-13zM53 152v74h1v-74zM53 250v6h1v-6zM53 279v149h1v-149zM54 133v13h1v-13zM54 353v75h1v-75zM55 133v13h1v-13zM55 352v76h1v-76zM56 133v14h1v-14zM56 355v73h1v-73zM57 133v13h1v-13zM57 352v64h1v-64zM57 417v11h1v-11zM58 133v13h1v-13zM58 356v60h1v-60zM58 417v11h1v-11zM59 133v13h1v-13zM59 340v4h1v-4zM59 352v64h1v-64zM59 418v10h1v-10zM60 133v14h1v-14zM60 309v3h1v-3zM60 338v7h1v-7zM60 352v64h1v-64zM60 419v9h1v-9zM61 133v13h1v-13zM61 308v3h1v-3zM61 339v5h1v-5zM61 355v61h1v-61zM61 420v8h1v-8zM62 133v14h1v-14zM62 340v4h1v-4zM62 356v60h1v-60zM62 421v7h1v-7zM63 133v13h1v-13zM63 349v67h1v-67zM63 421v7h1v-7zM64 133v13h1v-13zM64 332v4h1v-4zM64 346v70h1v-70zM64 422v6h1v-6zM65 133v13h1v-13zM65 330v8h1v-8zM65 355v61h1v-61zM65 423v5h1v-5zM66 133v14h1v-14zM66 331v5h1v-5zM66 356v60h1v-60zM66 424v4h1v-4zM67 133v14h1v-14zM67 350v1h1v-1zM67 359v57h1v-57zM67 425v3h1v-3zM68 133v13h1v-13zM68 357v59h1v-59zM68 425v3h1v-3zM69 133v13h1v-13zM69 356v60h1v-60zM69 426v2h1v-2zM70 133v13h1v-13zM70 346v70h1v-70zM70 427v1h1v-1zM71 133v13h1v-13zM71 344v72h1v-72zM72 133v13h1v-13zM72 343v85h1v-85zM73 133v13h1v-13zM73 344v84h1v-84zM74 133v13h1v-13zM74 346v82h1v-82zM75 133v13h1v-13zM75 347v81h1v-81zM76 133v13h1v-13zM76 323v22h1v-22zM76 351v77h1v-77zM77 133v13h1v-13zM77 330v14h1v-14zM77 353v75h1v-75zM78 133v13h1v-13zM78 330v13h1v-13zM78 355v73h1v-73zM79 133v13h1v-13zM79 347v9h1v-9zM79 359v69h1v-69zM80 133v13h1v-13zM80 360v68h1v-68zM81 133v13h1v-13zM81 358v70h1v-70zM82 133v14h1v-14zM82 338v6h1v-6zM82 354v74h1v-74zM83 133v14h1v-14zM83 324v5h1v-5zM83 353v75h1v-75zM84 133v14h1v-14zM84 355v73h1v-73zM85 133v14h1v-14zM85 339v6h1v-6zM85 354v74h1v-74zM86 133v13h1v-13zM86 353v75h1v-75zM87 133v13h1v-13zM87 355v73h1v-73zM88 133v13h1v-13zM88 358v70h1v-70zM89 133v13h1v-13zM89 333v2h1v-2zM89 351v77h1v-77zM90 133v13h1v-13zM90 351v77h1v-77zM91 133v14h1v-14zM91 337v91h1v-91zM92 133v13h1v-13zM92 338v10h1v-10zM92 349v79h1v-79zM93 133v13h1v-13zM93 352v76h1v-76zM94 133v29h1v-29zM94 357v71h1v-71zM95 133v42h1v-42zM95 356v72h1v-72zM96 133v43h1v-43zM96 356v72h1v-72zM97 133v13h1v-13zM97 147v29h1v-29zM97 354v74h1v-74zM98 133v13h1v-13zM98 160v12h1v-12zM98 346v82h1v-82zM99 133v13h1v-13zM99 347v81h1v-81zM100 133v13h1v-13zM100 352v76h1v-76zM101 133v13h1v-13zM101 350v78h1v-78zM102 133v13h1v-13zM102 352v76h1v-76zM103 133v13h1v-13zM103 350v78h1v-78zM104 133v13h1v-13zM104 339v89h1v-89zM105 133v13h1v-13zM105 340v88h1v-88zM106 133v13h1v-13zM106 354v74h1v-74zM107 133v13h1v-13zM107 354v74h1v-74zM108 133v13h1v-13zM108 348v68h1v-68zM109 133v13h1v-13zM109 347v69h1v-69zM110 133v13h1v-13zM110 345v10h1v-10zM110 356v60h1v-60zM111 133v13h1v-13zM111 346v4h1v-4zM111 353v63h1v-63zM112 133v13h1v-13zM112 324v4h1v-4zM112 348v4h1v-4zM112 355v61h1v-61zM113 133v14h1v-14zM113 320v11h1v-11zM113 344v72h1v-72zM114 133v14h1v-14zM114 321v11h1v-11zM114 344v72h1v-72zM115 133v13h1v-13zM115 324v6h1v-6zM115 354v62h1v-62zM116 133v13h1v-13zM116 325v12h1v-12zM116 355v61h1v-61zM117 133v13h1v-13zM117 327v10h1v-10zM117 354v62h1v-62zM118 133v13h1v-13zM118 345v83h1v-83zM119 133v13h1v-13zM119 354v74h1v-74zM120 133v13h1v-13zM120 356v72h1v-72zM121 133v13h1v-13zM121 349v5h1v-5zM121 355v73h1v-73zM122 133v13h1v-13zM122 343v85h1v-85zM123 133v13h1v-13zM123 344v84h1v-84zM124 133v14h1v-14zM124 345v83h1v-83zM125 133v13h1v-13zM125 346v82h1v-82zM126 133v13h1v-13zM126 347v81h1v-81zM127 133v13h1v-13zM127 355v73h1v-73zM128 133v13h1v-13zM128 352v76h1v-76zM129 133v13h1v-13zM129 353v75h1v-75zM130 133v13h1v-13zM130 353v75h1v-75zM131 133v13h1v-13zM131 333v95h1v-95zM132 133v14h1v-14zM132 333v95h1v-95zM133 133v13h1v-13zM133 353v75h1v-75zM134 133v14h1v-14zM134 348v80h1v-80zM135 133v14h1v-14zM135 351v77h1v-77zM136 133v14h1v-14zM136 354v74h1v-74zM137 133v13h1v-13zM137 351v77h1v-77zM138 133v13h1v-13zM138 349v79h1v-79zM139 133v13h1v-13zM139 351v77h1v-77zM140 133v13h1v-13zM140 354v74h1v-74zM141 133v13h1v-13zM141 352v76h1v-76zM142 133v13h1v-13zM142 347v69h1v-69zM143 133v13h1v-13zM143 347v69h1v-69zM144 133v14h1v-14zM144 327v1h1v-1zM144 337v79h1v-79zM145 133v14h1v-14zM145 357v59h1v-59zM146 133v14h1v-14zM146 358v58h1v-58zM147 133v13h1v-13zM147 358v58h1v-58zM148 133v13h1v-13zM148 355v61h1v-61zM149 133v13h1v-13zM149 354v62h1v-62zM150 133v13h1v-13zM150 354v62h1v-62zM151 133v13h1v-13zM151 350v66h1v-66zM152 133v14h1v-14zM152 353v63h1v-63zM153 133v13h1v-13zM153 331v14h1v-14zM153 355v61h1v-61zM154 133v14h1v-14zM154 339v13h1v-13zM154 357v59h1v-59zM155 133v13h1v-13zM155 323v8h1v-8zM155 334v82h1v-82zM155 419v2h1v-2zM155 424v1h1v-1zM156 133v13h1v-13zM156 322v25h1v-25zM156 352v69h1v-69zM156 425v2h1v-2zM157 133v13h1v-13zM157 328v1h1v-1zM157 331v8h1v-8zM157 357v71h1v-71zM158 133v14h1v-14zM158 358v70h1v-70zM159 133v14h1v-14zM159 352v76h1v-76zM160 133v14h1v-14zM160 351v77h1v-77zM161 133v14h1v-14zM161 343v1h1v-1zM161 354v74h1v-74zM162 127v20h1v-20zM162 342v3h1v-3zM162 358v70h1v-70zM163 127v20h1v-20zM163 354v74h1v-74zM164 127v19h1v-19zM164 354v74h1v-74zM165 127v19h1v-19zM165 352v76h1v-76zM166 127v301h1v-301zM167 127v301h1v-301zM168 127v301h1v-301zM169 127v301h1v-301zM170 127v301h1v-301zM171 127v301h1v-301zM172 127v301h1v-301zM173 127v301h1v-301zM174 127v301h1v-301zM175 127v301h1v-301zM176 127v301h1v-301zM177 127v301h1v-301zM178 127v301h1v-301zM179 127v301h1v-301zM180 127v301h1v-301zM181 127v301h1v-301z"/><path fill="#ffb000" d="M43 127v301h1v-301zM44 127v301h1v-301zM45 127v301h1v-301zM46 127v301h1v-301zM47 127v301h1v-301zM48 127v301h1v-301zM49 127v301h1v-301zM50 127v301h1v-301zM51 133v295h1v-295zM52 133v12h1v-12zM52 154v9h1v-9zM52 199v11h1v-11zM52 295v9h1v-9zM52 349v79h1v-79zM53 133v12h1v-12zM53 352v56h1v-56zM53 409v19h1v-19zM54 133v12h1v-12zM54 353v75h1v-75zM55 133v12h1v-12zM55 353v75h1v-75zM56 133v12h1v-12zM56 356v72h1v-72zM57 133v12h1v-12zM57 356v60h1v-60zM57 417v11h1v-11zM58 133v12h1v-12zM58 357v59h1v-59zM58 418v10h1v-10zM59 133v12h1v-12zM59 353v63h1v-63zM59 419v9h1v-9zM60 133v12h1v-12zM60 356v60h1v-60zM60 420v8h1v-8zM61 133v12h1v-12zM61 357v50h1v-50zM61 408v1h1v-1zM61 410v6h1v-6zM61 421v7h1v-7zM62 133v12h1v-12zM62 357v51h1v-51zM62 411v5h1v-5zM62 421v7h1v-7zM63 133v12h1v-12zM63 351v65h1v-65zM63 422v6h1v-6zM64 133v12h1v-12zM64 347v69h1v-69zM64 423v5h1v-5zM65 133v12h1v-12zM65 358v58h1v-58zM65 424v4h1v-4zM66 133v12h1v-12zM66 358v58h1v-58zM66 425v3h1v-3zM67 133v13h1v-13zM67 360v56h1v-56zM67 425v3h1v-3zM68 133v12h1v-12zM68 359v57h1v-57zM68 426v2h1v-2zM69 133v12h1v-12zM69 356v60h1v-60zM69 427v1h1v-1zM70 133v12h1v-12zM70 347v9h1v-9zM70 358v58h1v-58zM71 133v12h1v-12zM71 346v70h1v-70zM72 133v12h1v-12zM72 346v82h1v-82zM73 133v13h1v-13zM73 346v82h1v-82zM74 133v12h1v-12zM74 348v80h1v-80zM75 133v12h1v-12zM75 349v3h1v-3zM75 355v73h1v-73zM76 133v12h1v-12zM76 355v73h1v-73zM77 133v12h1v-12zM77 356v72h1v-72zM78 133v12h1v-12zM78 355v73h1v-73zM79 133v12h1v-12zM79 350v6h1v-6zM79 360v68h1v-68zM80 133v12h1v-12zM80 361v67h1v-67zM81 133v12h1v-12zM81 359v69h1v-69zM82 133v12h1v-12zM82 357v71h1v-71zM83 133v12h1v-12zM83 356v72h1v-72zM84 133v12h1v-12zM84 358v70h1v-70zM85 133v12h1v-12zM85 355v73h1v-73zM86 133v12h1v-12zM86 355v73h1v-73zM87 133v12h1v-12zM87 356v72h1v-72zM88 133v11h1v-11zM88 360v68h1v-68zM89 133v11h1v-11zM89 353v75h1v-75zM90 133v11h1v-11zM90 353v75h1v-75zM91 133v12h1v-12zM91 339v9h1v-9zM91 349v79h1v-79zM92 133v12h1v-12zM92 340v4h1v-4zM92 351v77h1v-77zM93 133v12h1v-12zM93 353v75h1v-75zM94 133v12h1v-12zM94 358v70h1v-70zM95 133v12h1v-12zM95 356v54h1v-54zM95 411v17h1v-17zM96 133v12h1v-12zM96 357v71h1v-71zM97 133v12h1v-12zM97 354v74h1v-74zM98 133v12h1v-12zM98 348v80h1v-80zM99 133v12h1v-12zM99 349v79h1v-79zM100 133v12h1v-12zM100 353v75h1v-75zM101 133v12h1v-12zM101 352v76h1v-76zM102 133v12h1v-12zM102 352v76h1v-76zM103 133v12h1v-12zM103 351v77h1v-77zM104 133v12h1v-12zM104 347v81h1v-81zM105 133v12h1v-12zM105 349v79h1v-79zM106 133v12h1v-12zM106 355v73h1v-73zM107 133v12h1v-12zM107 355v61h1v-61zM108 133v13h1v-13zM108 350v66h1v-66zM109 133v12h1v-12zM109 348v68h1v-68zM110 133v12h1v-12zM110 347v8h1v-8zM110 358v58h1v-58zM111 133v12h1v-12zM111 357v59h1v-59zM112 133v12h1v-12zM112 358v58h1v-58zM113 133v12h1v-12zM113 346v70h1v-70zM114 133v12h1v-12zM114 346v70h1v-70zM115 133v12h1v-12zM115 356v60h1v-60zM116 133v12h1v-12zM116 357v59h1v-59zM117 133v12h1v-12zM117 356v60h1v-60zM118 133v12h1v-12zM118 347v69h1v-69zM119 133v12h1v-12zM119 355v73h1v-73zM120 133v12h1v-12zM120 356v72h1v-72zM121 133v12h1v-12zM121 358v70h1v-70zM122 133v12h1v-12zM122 347v81h1v-81zM123 133v12h1v-12zM123 347v81h1v-81zM124 133v12h1v-12zM124 347v81h1v-81zM125 133v12h1v-12zM125 347v81h1v-81zM126 133v12h1v-12zM126 348v80h1v-80zM127 133v12h1v-12zM127 357v71h1v-71zM128 133v11h1v-11zM128 356v72h1v-72zM129 133v11h1v-11zM129 356v72h1v-72zM130 133v12h1v-12zM130 356v72h1v-72zM131 133v12h1v-12zM131 337v91h1v-91zM132 133v12h1v-12zM132 351v77h1v-77zM133 133v12h1v-12zM133 353v75h1v-75zM134 133v13h1v-13zM134 350v78h1v-78zM135 133v12h1v-12zM135 353v75h1v-75zM136 133v12h1v-12zM136 354v74h1v-74zM137 133v12h1v-12zM137 352v76h1v-76zM138 133v11h1v-11zM138 351v77h1v-77zM139 133v12h1v-12zM139 352v76h1v-76zM140 133v12h1v-12zM140 355v73h1v-73zM141 133v12h1v-12zM141 353v75h1v-75zM142 133v12h1v-12zM142 348v68h1v-68zM143 133v12h1v-12zM143 350v66h1v-66zM144 133v12h1v-12zM144 348v68h1v-68zM145 133v13h1v-13zM145 358v58h1v-58zM146 133v12h1v-12zM146 359v1h1v-1zM146 361v55h1v-55zM147 133v12h1v-12zM147 359v57h1v-57zM148 133v12h1v-12zM148 355v61h1v-61zM149 133v12h1v-12zM149 354v62h1v-62zM150 133v12h1v-12zM150 354v62h1v-62zM151 133v11h1v-11zM151 352v64h1v-64zM152 133v13h1v-13zM152 353v63h1v-63zM153 133v12h1v-12zM153 355v61h1v-61zM154 133v12h1v-12zM154 359v1h1v-1zM154 361v55h1v-55zM155 133v12h1v-12zM155 338v8h1v-8zM155 351v65h1v-65zM156 133v12h1v-12zM156 338v6h1v-6zM156 353v63h1v-63zM157 133v12h1v-12zM157 358v58h1v-58zM157 418v1h1v-1zM158 133v12h1v-12zM158 359v57h1v-57zM158 422v2h1v-2zM159 133v12h1v-12zM159 352v66h1v-66zM159 421v3h1v-3zM160 133v12h1v-12zM160 352v74h1v-74zM160 427v1h1v-1zM161 133v12h1v-12zM161 354v74h1v-74zM162 133v12h1v-12zM162 342v1h1v-1zM162 359v69h1v-69zM163 133v12h1v-12zM163 354v74h1v-74zM164 127v19h1v-19zM164 354v74h1v-74zM165 127v18h1v-18zM165 356v72h1v-72zM166 127v18h1v-18zM166 356v72h1v-72zM167 127v301h1v-301zM168 127v301h1v-301zM169 127v301h1v-301zM170 127v301h1v-301zM171 127v301h1v-301zM172 127v301h1v-301zM173 127v301h1v-301zM174 127v301h1v-301zM175 127v301h1v-301zM176 127v301h1v-301zM177 127v301h1v-301zM178 127v301h1v-301zM179 127v301h1v-301zM180 127v301h1v-301zM181 127v301h1v-301z"/><path fill="#ff6000" d="M43 127v301h1v-301zM44 127v301h1v-301zM45 127v301h1v-301zM46 127v301h1v-301zM47 127v301h1v-301zM48 127v301h1v-301zM49 127v301h1v-301zM50 127v301h1v-301zM51 133v11h1v-11zM51 202v6h1v-6zM51 352v76h1v-76zM52 133v10h1v-10zM52 351v77h1v-77zM53 133v10h1v-10zM53 353v55h1v-55zM53 409v19h1v-19zM54 133v11h1v-11zM54 354v74h1v-74zM55 133v11h1v-11zM55 354v74h1v-74zM56 133v11h1v-11zM56 358v70h1v-70zM57 133v11h1v-11zM57 357v59h1v-59zM57 418v10h1v-10zM58 133v11h1v-11zM58 358v58h1v-58zM58 419v9h1v-9zM59 133v10h1v-10zM59 355v61h1v-61zM59 420v8h1v-8zM60 133v11h1v-11zM60 357v59h1v-59zM60 420v8h1v-8zM61 133v11h1v-11zM61 359v48h1v-48zM61 408v1h1v-1zM61 410v6h1v-6zM61 421v7h1v-7zM62 133v11h1v-11zM62 358v50h1v-50zM62 411v5h1v-5zM62 422v6h1v-6zM63 133v11h1v-11zM63 354v62h1v-62zM63 423v5h1v-5zM64 133v11h1v-11zM64 351v65h1v-65zM64 424v4h1v-4zM65 133v10h1v-10zM65 360v56h1v-56zM65 424v4h1v-4zM66 133v11h1v-11zM66 359v57h1v-57zM66 425v3h1v-3zM67 133v11h1v-11zM67 360v56h1v-56zM67 426v2h1v-2zM68 133v10h1v-10zM68 360v56h1v-56zM68 427v1h1v-1zM69 133v11h1v-11zM69 357v2h1v-2zM69 360v56h1v-56zM70 133v11h1v-11zM70 349v5h1v-5zM70 359v57h1v-57zM71 133v11h1v-11zM71 349v67h1v-67zM72 133v11h1v-11zM72 349v79h1v-79zM73 133v11h1v-11zM73 349v79h1v-79zM74 133v11h1v-11zM74 350v78h1v-78zM75 133v11h1v-11zM75 357v71h1v-71zM76 133v11h1v-11zM76 356v72h1v-72zM77 133v11h1v-11zM77 357v71h1v-71zM78 133v11h1v-11zM78 356v72h1v-72zM79 133v11h1v-11zM79 355v1h1v-1zM79 360v68h1v-68zM80 133v10h1v-10zM80 361v67h1v-67zM81 133v10h1v-10zM81 361v67h1v-67zM82 133v11h1v-11zM82 359v69h1v-69zM83 133v11h1v-11zM83 358v70h1v-70zM84 133v10h1v-10zM84 360v68h1v-68zM85 133v11h1v-11zM85 360v68h1v-68zM86 133v10h1v-10zM86 356v72h1v-72zM87 133v11h1v-11zM87 358v70h1v-70zM88 133v10h1v-10zM88 360v68h1v-68zM89 133v10h1v-10zM89 354v74h1v-74zM90 133v11h1v-11zM90 354v74h1v-74zM91 133v11h1v-11zM91 352v76h1v-76zM92 133v11h1v-11zM92 352v76h1v-76zM93 133v11h1v-11zM93 354v74h1v-74zM94 133v11h1v-11zM94 359v69h1v-69zM95 133v11h1v-11zM95 356v54h1v-54zM95 411v17h1v-17zM96 133v11h1v-11zM96 357v1h1v-1zM96 359v69h1v-69zM97 133v11h1v-11zM97 355v73h1v-73zM98 133v11h1v-11zM98 350v78h1v-78zM99 133v11h1v-11zM99 351v77h1v-77zM100 133v11h1v-11zM100 354v74h1v-74zM101 133v11h1v-11zM101 353v75h1v-75zM102 133v11h1v-11zM102 353v75h1v-75zM103 133v11h1v-11zM103 353v75h1v-75zM104 133v11h1v-11zM104 349v79h1v-79zM105 133v11h1v-11zM105 351v77h1v-77zM106 133v11h1v-11zM106 356v72h1v-72zM107 133v11h1v-11zM107 356v60h1v-60zM108 133v11h1v-11zM108 352v64h1v-64zM109 133v11h1v-11zM109 350v66h1v-66zM110 133v11h1v-11zM110 350v2h1v-2zM110 359v57h1v-57zM111 133v11h1v-11zM111 359v57h1v-57zM112 133v10h1v-10zM112 359v57h1v-57zM113 133v11h1v-11zM113 348v68h1v-68zM114 133v11h1v-11zM114 348v68h1v-68zM115 133v10h1v-10zM115 357v59h1v-59zM116 133v11h1v-11zM116 358v58h1v-58zM117 133v11h1v-11zM117 357v59h1v-59zM118 133v11h1v-11zM118 358v58h1v-58zM119 133v11h1v-11zM119 356v72h1v-72zM120 133v11h1v-11zM120 358v70h1v-70zM121 133v11h1v-11zM121 360v68h1v-68zM122 133v11h1v-11zM122 350v78h1v-78zM123 133v11h1v-11zM123 349v79h1v-79zM124 133v11h1v-11zM124 349v79h1v-79zM125 133v11h1v-11zM125 349v79h1v-79zM126 133v11h1v-11zM126 350v78h1v-78zM127 133v10h1v-10zM127 360v68h1v-68zM128 133v11h1v-11zM128 358v70h1v-70zM129 133v10h1v-10zM129 357v71h1v-71zM130 133v11h1v-11zM130 357v71h1v-71zM131 133v11h1v-11zM131 351v77h1v-77zM132 133v11h1v-11zM132 352v76h1v-76zM133 133v11h1v-11zM133 354v74h1v-74zM134 133v11h1v-11zM134 353v75h1v-75zM135 133v11h1v-11zM135 356v72h1v-72zM136 133v11h1v-11zM136 354v74h1v-74zM137 133v11h1v-11zM137 354v74h1v-74zM138 133v10h1v-10zM138 354v74h1v-74zM139 133v11h1v-11zM139 353v75h1v-75zM140 133v10h1v-10zM140 357v71h1v-71zM141 133v10h1v-10zM141 355v73h1v-73zM142 133v11h1v-11zM142 350v66h1v-66zM143 133v11h1v-11zM143 352v64h1v-64zM144 133v11h1v-11zM144 352v64h1v-64zM145 133v11h1v-11zM145 360v56h1v-56zM146 133v11h1v-11zM146 361v55h1v-55zM147 133v11h1v-11zM147 360v56h1v-56zM148 133v11h1v-11zM148 355v61h1v-61zM149 133v11h1v-11zM149 355v61h1v-61zM150 133v11h1v-11zM150 355v61h1v-61zM151 133v10h1v-10zM151 353v63h1v-63zM152 133v11h1v-11zM152 355v61h1v-61zM153 133v11h1v-11zM153 355v61h1v-61zM154 133v11h1v-11zM154 361v55h1v-55zM155 133v11h1v-11zM155 353v63h1v-63zM156 133v10h1v-10zM156 354v62h1v-62zM157 133v11h1v-11zM157 360v56h1v-56zM158 133v11h1v-11zM158 360v56h1v-56zM159 133v11h1v-11zM159 353v63h1v-63zM160 133v11h1v-11zM160 353v63h1v-63zM160 424v1h1v-1zM161 133v11h1v-11zM161 355v63h1v-63zM161 422v6h1v-6zM162 133v11h1v-11zM162 360v68h1v-68zM163 133v11h1v-11zM163 355v73h1v-73zM164 133v11h1v-11zM164 355v73h1v-73zM165 127v17h1v-17zM165 357v71h1v-71zM166 127v17h1v-17zM166 358v70h1v-70zM167 127v301h1v-301zM168 127v301h1v-301zM169 127v301h1v-301zM170 127v301h1v-301zM171 127v301h1v-301zM172 127v301h1v-301zM173 127v301h1v-301zM174 127v301h1v-301zM175 127v301h1v-301zM176 127v301h1v-301zM177 127v301h1v-301zM178 127v301h1v-301zM179 127v301h1v-301zM180 127v301h1v-301zM181 127v301h1v-301z"/><path fill="#ff1000" d="M43 127v301h1v-301zM44 127v301h1v-301zM45 127v301h1v-301zM46 127v301h1v-301zM47 127v301h1v-301zM48 127v301h1v-301zM49 127v281h1v-281zM49 409v19h1v-19zM50 133v10h1v-10zM50 200v10h1v-10zM50 344v84h1v-84zM51 133v9h1v-9zM51 353v75h1v-75zM52 133v9h1v-9zM52 353v55h1v-55zM52 409v19h1v-19zM53 133v9h1v-9zM53 354v54h1v-54zM53 409v19h1v-19zM54 133v9h1v-9zM54 355v53h1v-53zM54 409v19h1v-19zM55 133v10h1v-10zM55 355v73h1v-73zM56 133v10h1v-10zM56 359v51h1v-51zM56 411v2h1v-2zM56 414v14h1v-14zM57 133v9h1v-9zM57 358v52h1v-52zM57 411v5h1v-5zM57 419v9h1v-9zM58 133v9h1v-9zM58 358v58h1v-58zM58 420v8h1v-8zM59 133v9h1v-9zM59 357v59h1v-59zM59 420v8h1v-8zM60 133v10h1v-10zM60 359v48h1v-48zM60 409v7h1v-7zM60 421v7h1v-7zM61 133v10h1v-10zM61 360v47h1v-47zM61 408v1h1v-1zM61 410v6h1v-6zM61 422v6h1v-6zM62 133v10h1v-10zM62 358v50h1v-50zM62 411v5h1v-5zM62 423v5h1v-5zM63 133v9h1v-9zM63 355v61h1v-61zM63 424v4h1v-4zM64 133v9h1v-9zM64 353v15h1v-15zM64 371v45h1v-45zM64 424v4h1v-4zM65 133v9h1v-9zM65 361v55h1v-55zM65 425v3h1v-3zM66 133v9h1v-9zM66 360v5h1v-5zM66 366v50h1v-50zM66 426v2h1v-2zM67 133v10h1v-10zM67 360v56h1v-56zM67 427v1h1v-1zM68 133v9h1v-9zM68 361v9h1v-9zM68 371v45h1v-45zM69 133v10h1v-10zM69 358v1h1v-1zM69 361v55h1v-55zM70 133v10h1v-10zM70 359v46h1v-46zM70 406v10h1v-10zM71 133v10h1v-10zM71 352v64h1v-64zM72 133v9h1v-9zM72 353v75h1v-75zM73 133v10h1v-10zM73 353v75h1v-75zM74 133v10h1v-10zM74 358v70h1v-70zM75 133v9h1v-9zM75 358v70h1v-70zM76 133v9h1v-9zM76 357v71h1v-71zM77 133v10h1v-10zM77 359v46h1v-46zM77 406v22h1v-22zM78 133v10h1v-10zM78 358v54h1v-54zM78 414v14h1v-14zM79 133v9h1v-9zM79 360v68h1v-68zM80 133v9h1v-9zM80 361v67h1v-67zM81 133v9h1v-9zM81 362v66h1v-66zM82 133v10h1v-10zM82 360v68h1v-68zM83 133v10h1v-10zM83 359v69h1v-69zM84 133v9h1v-9zM84 361v67h1v-67zM85 133v10h1v-10zM85 361v67h1v-67zM86 133v9h1v-9zM86 356v49h1v-49zM86 406v22h1v-22zM87 133v9h1v-9zM87 359v51h1v-51zM87 412v16h1v-16zM88 133v9h1v-9zM88 360v68h1v-68zM89 133v9h1v-9zM89 355v73h1v-73zM90 133v9h1v-9zM90 355v58h1v-58zM90 414v14h1v-14zM91 133v10h1v-10zM91 353v75h1v-75zM92 133v10h1v-10zM92 354v74h1v-74zM93 133v10h1v-10zM93 355v73h1v-73zM94 133v10h1v-10zM94 360v8h1v-8zM94 370v58h1v-58zM95 133v9h1v-9zM95 357v8h1v-8zM95 368v42h1v-42zM95 411v17h1v-17zM96 133v9h1v-9zM96 357v1h1v-1zM96 360v68h1v-68zM97 133v9h1v-9zM97 356v72h1v-72zM98 133v9h1v-9zM98 352v76h1v-76zM99 133v10h1v-10zM99 353v75h1v-75zM100 133v10h1v-10zM100 355v73h1v-73zM101 133v9h1v-9zM101 354v56h1v-56zM101 411v17h1v-17zM102 133v10h1v-10zM102 354v74h1v-74zM103 133v10h1v-10zM103 354v51h1v-51zM103 406v22h1v-22zM104 133v9h1v-9zM104 351v77h1v-77zM105 133v9h1v-9zM105 353v75h1v-75zM106 133v10h1v-10zM106 357v71h1v-71zM107 133v10h1v-10zM107 358v58h1v-58zM108 133v10h1v-10zM108 355v61h1v-61zM109 133v9h1v-9zM109 352v15h1v-15zM109 369v47h1v-47zM110 133v9h1v-9zM110 361v55h1v-55zM111 133v10h1v-10zM111 360v56h1v-56zM112 133v9h1v-9zM112 361v52h1v-52zM112 414v2h1v-2zM113 133v10h1v-10zM113 351v62h1v-62zM113 414v2h1v-2zM114 133v10h1v-10zM114 351v65h1v-65zM115 133v9h1v-9zM115 359v57h1v-57zM116 133v10h1v-10zM116 359v6h1v-6zM116 366v2h1v-2zM116 369v40h1v-40zM116 411v2h1v-2zM116 414v2h1v-2zM117 133v9h1v-9zM117 358v52h1v-52zM117 411v5h1v-5zM118 133v10h1v-10zM118 360v56h1v-56zM119 133v10h1v-10zM119 358v70h1v-70zM120 133v10h1v-10zM120 360v68h1v-68zM121 133v9h1v-9zM121 361v50h1v-50zM121 412v16h1v-16zM122 133v9h1v-9zM122 352v76h1v-76zM123 133v10h1v-10zM123 351v77h1v-77zM124 133v10h1v-10zM124 351v62h1v-62zM124 414v14h1v-14zM125 133v10h1v-10zM125 351v56h1v-56zM125 409v4h1v-4zM125 414v14h1v-14zM126 133v10h1v-10zM126 357v48h1v-48zM126 406v22h1v-22zM127 133v9h1v-9zM127 360v68h1v-68zM128 133v9h1v-9zM128 360v68h1v-68zM129 133v9h1v-9zM129 359v46h1v-46zM129 406v22h1v-22zM130 133v9h1v-9zM130 358v10h1v-10zM130 369v59h1v-59zM131 133v10h1v-10zM131 353v75h1v-75zM132 133v10h1v-10zM132 353v75h1v-75zM133 133v10h1v-10zM133 355v50h1v-50zM133 408v20h1v-20zM134 133v10h1v-10zM134 357v56h1v-56zM134 414v14h1v-14zM135 133v10h1v-10zM135 357v6h1v-6zM135 364v41h1v-41zM135 406v22h1v-22zM136 133v10h1v-10zM136 355v50h1v-50zM136 406v22h1v-22zM137 133v9h1v-9zM137 355v73h1v-73zM138 133v9h1v-9zM138 356v72h1v-72zM139 133v9h1v-9zM139 355v73h1v-73zM140 133v9h1v-9zM140 358v70h1v-70zM141 133v9h1v-9zM141 357v11h1v-11zM141 369v59h1v-59zM142 133v9h1v-9zM142 352v64h1v-64zM143 133v10h1v-10zM143 354v62h1v-62zM144 133v10h1v-10zM144 356v50h1v-50zM144 407v9h1v-9zM145 133v10h1v-10zM145 361v55h1v-55zM146 133v10h1v-10zM146 361v48h1v-48zM146 411v5h1v-5zM147 133v9h1v-9zM147 360v48h1v-48zM147 410v6h1v-6zM148 133v9h1v-9zM148 355v61h1v-61zM149 133v10h1v-10zM149 356v60h1v-60zM150 133v9h1v-9zM150 356v60h1v-60zM151 133v9h1v-9zM151 354v55h1v-55zM151 411v5h1v-5zM152 133v10h1v-10zM152 355v61h1v-61zM153 133v10h1v-10zM153 357v59h1v-59zM154 133v10h1v-10zM154 361v55h1v-55zM155 133v9h1v-9zM155 355v56h1v-56zM155 412v4h1v-4zM156 133v9h1v-9zM156 355v13h1v-13zM156 369v47h1v-47zM157 133v9h1v-9zM157 361v6h1v-6zM157 368v48h1v-48zM158 133v10h1v-10zM158 361v3h1v-3zM158 366v50h1v-50zM159 133v10h1v-10zM159 354v62h1v-62zM160 133v10h1v-10zM160 353v54h1v-54zM160 408v8h1v-8zM161 133v10h1v-10zM161 356v15h1v-15zM161 372v34h1v-34zM161 408v8h1v-8zM162 133v10h1v-10zM162 361v55h1v-55zM163 133v10h1v-10zM163 356v60h1v-60zM163 418v1h1v-1zM164 133v10h1v-10zM164 356v62h1v-62zM164 419v9h1v-9zM165 133v9h1v-9zM165 359v57h1v-57zM165 417v10h1v-10zM166 127v16h1v-16zM166 360v45h1v-45zM166 406v22h1v-22zM167 127v278h1v-278zM167 406v22h1v-22zM168 127v301h1v-301zM169 127v301h1v-301zM170 127v301h1v-301zM171 127v301h1v-301zM172 127v301h1v-301zM173 127v301h1v-301zM174 127v301h1v-301zM175 127v301h1v-301zM176 127v301h1v-301zM177 127v301h1v-301zM178 127v301h1v-301zM179 127v301h1v-301zM180 127v301h1v-301zM181 127v301h1v-301z"/><path fill="#e00000" d="M43 127v301h1v-301zM44 127v301h1v-301zM45 127v301h1v-301zM46 127v301h1v-301zM47 127v301h1v-301zM48 127v158h1v-158zM48 286v28h1v-28zM48 329v11h1v-11zM48 354v14h1v-14zM48 376v52h1v-52zM49 127v8h1v-8zM49 137v1h1v-1zM49 139v2h1v-2zM49 201v7h1v-7zM49 298v7h1v-7zM49 356v13h1v-13zM49 371v37h1v-37zM49 409v19h1v-19zM50 133v8h1v-8zM50 353v54h1v-54zM50 410v18h1v-18zM51 133v8h1v-8zM51 354v12h1v-12zM51 368v35h1v-35zM51 404v24h1v-24zM52 133v2h1v-2zM52 355v10h1v-10zM52 366v42h1v-42zM52 409v19h1v-19zM53 355v10h1v-10zM53 376v32h1v-32zM53 410v18h1v-18zM54 355v10h1v-10zM54 368v40h1v-40zM54 409v19h1v-19zM55 133v6h1v-6zM55 140v1h1v-1zM55 356v72h1v-72zM56 135v6h1v-6zM56 360v18h1v-18zM56 379v31h1v-31zM56 411v2h1v-2zM56 414v14h1v-14zM57 133v6h1v-6zM57 359v6h1v-6zM57 368v42h1v-42zM57 411v5h1v-5zM57 419v9h1v-9zM58 133v5h1v-5zM58 359v6h1v-6zM58 369v47h1v-47zM58 420v8h1v-8zM59 133v5h1v-5zM59 358v8h1v-8zM59 368v48h1v-48zM59 421v7h1v-7zM60 133v5h1v-5zM60 139v2h1v-2zM60 360v47h1v-47zM60 409v7h1v-7zM60 422v6h1v-6zM61 133v5h1v-5zM61 139v2h1v-2zM61 362v44h1v-44zM61 411v2h1v-2zM61 415v1h1v-1zM61 423v5h1v-5zM62 133v5h1v-5zM62 140v1h1v-1zM62 359v7h1v-7zM62 371v34h1v-34zM62 411v5h1v-5zM62 423v5h1v-5zM63 133v3h1v-3zM63 357v7h1v-7zM63 373v33h1v-33zM63 411v5h1v-5zM63 424v4h1v-4zM64 133v4h1v-4zM64 357v11h1v-11zM64 376v30h1v-30zM64 408v8h1v-8zM64 425v3h1v-3zM65 133v6h1v-6zM65 363v6h1v-6zM65 377v39h1v-39zM65 426v2h1v-2zM66 133v8h1v-8zM66 360v5h1v-5zM66 371v45h1v-45zM66 427v1h1v-1zM67 133v8h1v-8zM67 361v4h1v-4zM67 367v49h1v-49zM67 427v1h1v-1zM68 134v2h1v-2zM68 139v1h1v-1zM68 362v5h1v-5zM68 373v36h1v-36zM68 410v6h1v-6zM69 133v8h1v-8zM69 362v6h1v-6zM69 371v45h1v-45zM70 133v6h1v-6zM70 360v45h1v-45zM70 406v10h1v-10zM71 133v6h1v-6zM71 356v60h1v-60zM72 133v6h1v-6zM72 356v11h1v-11zM72 368v1h1v-1zM72 371v2h1v-2zM72 374v54h1v-54zM73 133v5h1v-5zM73 139v2h1v-2zM73 357v10h1v-10zM73 368v60h1v-60zM74 133v3h1v-3zM74 137v4h1v-4zM74 359v69h1v-69zM75 133v5h1v-5zM75 359v6h1v-6zM75 368v2h1v-2zM75 371v57h1v-57zM76 133v5h1v-5zM76 140v1h1v-1zM76 359v69h1v-69zM77 133v8h1v-8zM77 360v45h1v-45zM77 406v22h1v-22zM78 133v8h1v-8zM78 360v52h1v-52zM78 414v14h1v-14zM79 133v6h1v-6zM79 360v6h1v-6zM79 368v60h1v-60zM80 133v2h1v-2zM80 137v2h1v-2zM80 361v67h1v-67zM81 133v5h1v-5zM81 363v65h1v-65zM82 133v5h1v-5zM82 139v2h1v-2zM82 362v40h1v-40zM82 403v3h1v-3zM82 409v19h1v-19zM83 133v3h1v-3zM83 139v2h1v-2zM83 361v67h1v-67zM84 133v3h1v-3zM84 363v65h1v-65zM85 133v5h1v-5zM85 139v2h1v-2zM85 363v5h1v-5zM85 374v2h1v-2zM85 377v51h1v-51zM86 360v45h1v-45zM86 406v22h1v-22zM87 133v2h1v-2zM87 137v1h1v-1zM87 361v49h1v-49zM87 412v16h1v-16zM88 133v2h1v-2zM88 137v1h1v-1zM88 361v11h1v-11zM88 374v54h1v-54zM89 133v1h1v-1zM89 357v71h1v-71zM90 357v14h1v-14zM90 373v40h1v-40zM90 414v14h1v-14zM91 134v2h1v-2zM91 138v1h1v-1zM91 355v16h1v-16zM91 373v55h1v-55zM92 133v8h1v-8zM92 355v8h1v-8zM92 366v62h1v-62zM93 134v5h1v-5zM93 356v10h1v-10zM93 372v56h1v-56zM94 133v8h1v-8zM94 361v4h1v-4zM94 372v56h1v-56zM95 133v6h1v-6zM95 358v1h1v-1zM95 360v5h1v-5zM95 372v38h1v-38zM95 411v17h1v-17zM96 133v2h1v-2zM96 136v1h1v-1zM96 139v2h1v-2zM96 361v5h1v-5zM96 369v59h1v-59zM97 133v3h1v-3zM97 357v11h1v-11zM97 369v4h1v-4zM97 374v54h1v-54zM98 133v3h1v-3zM98 355v53h1v-53zM98 411v17h1v-17zM99 134v1h1v-1zM99 136v2h1v-2zM99 355v53h1v-53zM99 411v17h1v-17zM100 133v7h1v-7zM100 356v72h1v-72zM101 133v5h1v-5zM101 139v2h1v-2zM101 355v55h1v-55zM101 411v17h1v-17zM102 133v5h1v-5zM102 139v2h1v-2zM102 355v11h1v-11zM102 367v1h1v-1zM102 374v54h1v-54zM103 133v6h1v-6zM103 140v1h1v-1zM103 356v14h1v-14zM103 371v34h1v-34zM103 406v22h1v-22zM104 133v5h1v-5zM104 353v20h1v-20zM104 376v52h1v-52zM105 133v4h1v-4zM105 139v2h1v-2zM105 355v14h1v-14zM105 372v56h1v-56zM106 133v8h1v-8zM106 358v9h1v-9zM106 372v44h1v-44zM107 133v8h1v-8zM107 359v8h1v-8zM107 369v47h1v-47zM108 133v7h1v-7zM108 357v9h1v-9zM108 368v48h1v-48zM109 134v1h1v-1zM109 355v12h1v-12zM109 371v37h1v-37zM109 409v7h1v-7zM110 133v1h1v-1zM110 136v1h1v-1zM110 362v7h1v-7zM110 375v41h1v-41zM111 133v1h1v-1zM111 135v1h1v-1zM111 362v7h1v-7zM111 375v41h1v-41zM112 133v3h1v-3zM112 137v1h1v-1zM112 362v6h1v-6zM112 370v1h1v-1zM112 372v41h1v-41zM112 414v2h1v-2zM113 133v8h1v-8zM113 358v9h1v-9zM113 373v40h1v-40zM113 414v2h1v-2zM114 133v8h1v-8zM114 357v59h1v-59zM115 133v6h1v-6zM115 360v56h1v-56zM116 133v8h1v-8zM116 360v5h1v-5zM116 371v1h1v-1zM116 376v33h1v-33zM116 411v2h1v-2zM116 414v2h1v-2zM117 133v2h1v-2zM117 359v5h1v-5zM117 366v44h1v-44zM117 411v5h1v-5zM118 133v8h1v-8zM118 361v55h1v-55zM119 133v8h1v-8zM119 360v56h1v-56zM120 133v5h1v-5zM120 139v2h1v-2zM120 361v1h1v-1zM120 363v5h1v-5zM120 369v59h1v-59zM121 133v5h1v-5zM121 363v6h1v-6zM121 377v34h1v-34zM121 412v16h1v-16zM122 133v3h1v-3zM122 355v14h1v-14zM122 371v3h1v-3zM122 376v52h1v-52zM123 133v8h1v-8zM123 354v74h1v-74zM124 133v8h1v-8zM124 353v60h1v-60zM124 414v14h1v-14zM125 133v8h1v-8zM125 355v14h1v-14zM125 370v37h1v-37zM125 409v4h1v-4zM125 414v14h1v-14zM126 133v2h1v-2zM126 139v2h1v-2zM126 359v46h1v-46zM126 406v22h1v-22zM127 133v2h1v-2zM127 136v3h1v-3zM127 361v67h1v-67zM128 133v3h1v-3zM128 138v1h1v-1zM128 361v67h1v-67zM129 133v2h1v-2zM129 360v8h1v-8zM129 371v2h1v-2zM129 375v30h1v-30zM129 406v22h1v-22zM130 134v1h1v-1zM130 136v1h1v-1zM130 359v8h1v-8zM130 374v54h1v-54zM131 133v8h1v-8zM131 355v58h1v-58zM131 414v14h1v-14zM132 133v8h1v-8zM132 355v73h1v-73zM133 133v8h1v-8zM133 356v10h1v-10zM133 367v38h1v-38zM133 408v20h1v-20zM134 133v8h1v-8zM134 358v55h1v-55zM134 414v14h1v-14zM135 133v8h1v-8zM135 359v4h1v-4zM135 364v41h1v-41zM135 406v22h1v-22zM136 133v5h1v-5zM136 139v1h1v-1zM136 356v49h1v-49zM136 406v22h1v-22zM137 133v4h1v-4zM137 357v48h1v-48zM137 406v2h1v-2zM137 410v18h1v-18zM138 134v2h1v-2zM138 358v50h1v-50zM138 410v18h1v-18zM139 134v1h1v-1zM139 356v55h1v-55zM139 413v15h1v-15zM140 133v3h1v-3zM140 359v69h1v-69zM141 133v5h1v-5zM141 358v9h1v-9zM141 370v58h1v-58zM142 133v3h1v-3zM142 137v1h1v-1zM142 354v14h1v-14zM142 369v47h1v-47zM143 133v6h1v-6zM143 140v1h1v-1zM143 356v60h1v-60zM144 133v8h1v-8zM144 359v47h1v-47zM144 407v9h1v-9zM145 133v9h1v-9zM145 361v55h1v-55zM146 133v8h1v-8zM146 362v1h1v-1zM146 364v45h1v-45zM146 411v5h1v-5zM147 133v7h1v-7zM147 362v46h1v-46zM147 410v6h1v-6zM148 133v5h1v-5zM148 140v1h1v-1zM148 357v59h1v-59zM149 133v3h1v-3zM149 139v2h1v-2zM149 357v59h1v-59zM150 133v7h1v-7zM150 358v58h1v-58zM151 133v4h1v-4zM151 357v52h1v-52zM151 411v5h1v-5zM152 133v8h1v-8zM152 357v59h1v-59zM153 133v3h1v-3zM153 137v1h1v-1zM153 358v9h1v-9zM153 372v44h1v-44zM154 133v3h1v-3zM154 137v4h1v-4zM154 362v6h1v-6zM154 372v35h1v-35zM154 408v8h1v-8zM155 134v1h1v-1zM155 357v54h1v-54zM155 412v4h1v-4zM156 134v1h1v-1zM156 357v5h1v-5zM156 363v5h1v-5zM156 370v1h1v-1zM156 375v41h1v-41zM157 135v1h1v-1zM157 362v5h1v-5zM157 373v43h1v-43zM158 134v7h1v-7zM158 362v2h1v-2zM158 370v6h1v-6zM158 379v37h1v-37zM159 133v8h1v-8zM159 355v52h1v-52zM159 408v8h1v-8zM160 134v3h1v-3zM160 355v13h1v-13zM160 374v33h1v-33zM160 408v8h1v-8zM161 133v8h1v-8zM161 358v9h1v-9zM161 374v3h1v-3zM161 379v27h1v-27zM161 408v8h1v-8zM162 133v8h1v-8zM162 362v9h1v-9zM162 372v44h1v-44zM163 133v8h1v-8zM163 357v9h1v-9zM163 368v48h1v-48zM164 133v5h1v-5zM164 357v59h1v-59zM165 133v5h1v-5zM165 139v2h1v-2zM165 360v56h1v-56zM166 133v8h1v-8zM166 362v43h1v-43zM166 406v10h1v-10zM167 127v11h1v-11zM167 361v7h1v-7zM167 371v34h1v-34zM167 406v12h1v-12zM167 422v5h1v-5zM168 127v301h1v-301zM169 127v301h1v-301zM170 127v301h1v-301zM171 127v301h1v-301zM172 127v301h1v-301zM173 127v301h1v-301zM174 127v301h1v-301zM175 127v301h1v-301zM176 127v301h1v-301zM177 127v301h1v-301zM178 127v301h1v-301zM179 127v301h1v-301zM180 127v301h1v-301zM181 127v301h1v-301z"/><path fill="#9a1000" d="M43 127v301h1v-301zM44 127v301h1v-301zM45 127v301h1v-301zM46 127v301h1v-301zM47 127v301h1v-301zM48 127v6h1v-6zM48 376v29h1v-29zM48 410v6h1v-6zM49 372v31h1v-31zM49 410v3h1v-3zM49 414v2h1v-2zM50 374v29h1v-29zM50 410v3h1v-3zM50 414v2h1v-2zM51 375v17h1v-17zM51 393v10h1v-10zM51 408v5h1v-5zM51 414v2h1v-2zM52 375v33h1v-33zM52 411v5h1v-5zM53 376v3h1v-3zM53 381v22h1v-22zM53 405v3h1v-3zM53 410v6h1v-6zM54 373v7h1v-7zM54 381v22h1v-22zM54 404v4h1v-4zM54 410v3h1v-3zM54 414v2h1v-2zM55 374v6h1v-6zM55 382v26h1v-26zM55 411v2h1v-2zM55 414v2h1v-2zM56 374v4h1v-4zM56 379v1h1v-1zM56 384v15h1v-15zM56 400v2h1v-2zM56 403v6h1v-6zM56 411v1h1v-1zM56 414v2h1v-2zM57 372v7h1v-7zM57 388v4h1v-4zM57 393v10h1v-10zM57 404v2h1v-2zM57 408v1h1v-1zM57 411v5h1v-5zM57 420v8h1v-8zM58 370v4h1v-4zM58 376v32h1v-32zM58 413v3h1v-3zM58 421v7h1v-7zM59 371v37h1v-37zM59 409v2h1v-2zM59 414v2h1v-2zM59 422v6h1v-6zM60 373v24h1v-24zM60 398v8h1v-8zM60 409v7h1v-7zM60 422v6h1v-6zM61 377v2h1v-2zM61 384v3h1v-3zM61 389v1h1v-1zM61 391v13h1v-13zM61 411v2h1v-2zM61 423v5h1v-5zM62 375v30h1v-30zM62 411v5h1v-5zM62 424v4h1v-4zM63 374v31h1v-31zM63 411v5h1v-5zM63 425v3h1v-3zM64 377v29h1v-29zM64 408v8h1v-8zM64 426v2h1v-2zM65 377v2h1v-2zM65 381v21h1v-21zM65 408v2h1v-2zM65 413v3h1v-3zM65 426v2h1v-2zM66 372v2h1v-2zM66 376v2h1v-2zM66 383v20h1v-20zM66 404v3h1v-3zM66 410v1h1v-1zM66 414v2h1v-2zM66 427v1h1v-1zM67 375v5h1v-5zM67 382v21h1v-21zM67 404v4h1v-4zM67 411v2h1v-2zM67 414v2h1v-2zM68 373v1h1v-1zM68 386v17h1v-17zM68 405v3h1v-3zM68 411v2h1v-2zM68 414v2h1v-2zM69 371v34h1v-34zM69 406v6h1v-6zM69 414v2h1v-2zM70 371v33h1v-33zM70 408v8h1v-8zM71 371v32h1v-32zM71 407v3h1v-3zM71 411v5h1v-5zM72 371v2h1v-2zM72 374v29h1v-29zM72 404v4h1v-4zM72 411v2h1v-2zM72 414v14h1v-14zM73 372v36h1v-36zM73 410v1h1v-1zM73 414v14h1v-14zM74 376v32h1v-32zM74 413v15h1v-15zM75 376v29h1v-29zM75 408v3h1v-3zM75 414v4h1v-4zM75 420v8h1v-8zM76 374v31h1v-31zM76 408v3h1v-3zM76 414v4h1v-4zM76 420v8h1v-8zM77 369v2h1v-2zM77 373v30h1v-30zM77 407v4h1v-4zM77 413v15h1v-15zM78 370v33h1v-33zM78 405v2h1v-2zM78 408v3h1v-3zM78 414v14h1v-14zM79 371v20h1v-20zM79 392v2h1v-2zM79 395v8h1v-8zM79 405v1h1v-1zM79 409v19h1v-19zM80 371v3h1v-3zM80 376v12h1v-12zM80 395v8h1v-8zM80 405v1h1v-1zM80 408v10h1v-10zM80 420v8h1v-8zM81 376v27h1v-27zM81 405v1h1v-1zM81 408v2h1v-2zM81 413v5h1v-5zM81 420v8h1v-8zM82 376v26h1v-26zM82 404v2h1v-2zM82 409v2h1v-2zM82 413v15h1v-15zM83 374v26h1v-26zM83 401v27h1v-27zM84 374v31h1v-31zM84 406v2h1v-2zM84 411v17h1v-17zM85 378v11h1v-11zM85 390v13h1v-13zM85 406v3h1v-3zM85 413v5h1v-5zM85 420v8h1v-8zM86 373v31h1v-31zM86 406v5h1v-5zM86 413v5h1v-5zM86 420v8h1v-8zM87 369v1h1v-1zM87 374v31h1v-31zM87 408v1h1v-1zM87 413v15h1v-15zM88 374v37h1v-37zM88 413v15h1v-15zM89 376v15h1v-15zM89 393v35h1v-35zM90 376v36h1v-36zM90 414v4h1v-4zM90 420v8h1v-8zM91 374v28h1v-28zM91 404v2h1v-2zM91 408v5h1v-5zM91 414v4h1v-4zM91 420v8h1v-8zM92 373v29h1v-29zM92 403v8h1v-8zM92 413v15h1v-15zM93 373v38h1v-38zM93 413v15h1v-15zM94 373v33h1v-33zM94 407v4h1v-4zM94 413v15h1v-15zM95 372v4h1v-4zM95 377v32h1v-32zM95 414v4h1v-4zM95 420v8h1v-8zM96 372v46h1v-46zM96 420v8h1v-8zM97 374v31h1v-31zM97 406v2h1v-2zM97 410v18h1v-18zM98 373v32h1v-32zM98 406v2h1v-2zM98 411v17h1v-17zM99 373v14h1v-14zM99 388v2h1v-2zM99 392v1h1v-1zM99 395v5h1v-5zM99 401v2h1v-2zM99 404v4h1v-4zM99 412v16h1v-16zM100 373v27h1v-27zM100 401v5h1v-5zM100 407v3h1v-3zM100 414v4h1v-4zM100 420v8h1v-8zM101 370v35h1v-35zM101 408v1h1v-1zM101 411v2h1v-2zM101 414v4h1v-4zM101 420v8h1v-8zM102 374v29h1v-29zM102 408v1h1v-1zM102 411v17h1v-17zM103 374v29h1v-29zM103 407v21h1v-21zM104 376v29h1v-29zM104 406v3h1v-3zM104 412v16h1v-16zM105 376v28h1v-28zM105 406v3h1v-3zM105 411v2h1v-2zM105 414v4h1v-4zM105 420v8h1v-8zM106 372v31h1v-31zM106 406v2h1v-2zM106 411v5h1v-5zM107 373v30h1v-30zM107 405v3h1v-3zM107 412v4h1v-4zM108 374v31h1v-31zM108 406v2h1v-2zM108 410v1h1v-1zM108 414v2h1v-2zM109 376v27h1v-27zM109 407v1h1v-1zM109 409v7h1v-7zM110 376v15h1v-15zM110 394v10h1v-10zM110 408v3h1v-3zM110 412v4h1v-4zM111 375v31h1v-31zM111 408v1h1v-1zM111 413v3h1v-3zM112 372v4h1v-4zM112 379v23h1v-23zM112 403v5h1v-5zM112 414v2h1v-2zM113 374v17h1v-17zM113 392v11h1v-11zM113 405v4h1v-4zM113 414v2h1v-2zM114 371v32h1v-32zM114 406v2h1v-2zM114 409v4h1v-4zM114 414v2h1v-2zM115 369v2h1v-2zM115 377v26h1v-26zM115 406v2h1v-2zM115 410v3h1v-3zM115 414v2h1v-2zM116 376v27h1v-27zM116 411v2h1v-2zM116 414v2h1v-2zM117 374v34h1v-34zM117 414v2h1v-2zM118 374v37h1v-37zM118 414v2h1v-2zM119 376v6h1v-6zM119 385v31h1v-31zM120 377v20h1v-20zM120 398v5h1v-5zM120 405v4h1v-4zM120 412v16h1v-16zM121 377v28h1v-28zM121 410v1h1v-1zM121 413v15h1v-15zM122 372v2h1v-2zM122 376v29h1v-29zM122 406v3h1v-3zM122 412v16h1v-16zM123 372v16h1v-16zM123 389v3h1v-3zM123 394v5h1v-5zM123 401v3h1v-3zM123 406v2h1v-2zM123 411v2h1v-2zM123 414v14h1v-14zM124 371v5h1v-5zM124 384v19h1v-19zM124 406v2h1v-2zM124 411v2h1v-2zM124 414v14h1v-14zM125 371v34h1v-34zM125 409v4h1v-4zM125 414v14h1v-14zM126 371v4h1v-4zM126 376v27h1v-27zM126 407v4h1v-4zM126 413v15h1v-15zM127 371v19h1v-19zM127 393v10h1v-10zM127 406v5h1v-5zM127 412v16h1v-16zM128 373v30h1v-30zM128 407v21h1v-21zM129 375v30h1v-30zM129 408v3h1v-3zM129 413v15h1v-15zM130 376v30h1v-30zM130 408v3h1v-3zM130 414v14h1v-14zM131 371v21h1v-21zM131 394v9h1v-9zM131 405v3h1v-3zM131 409v3h1v-3zM131 414v14h1v-14zM132 371v4h1v-4zM132 376v27h1v-27zM132 410v1h1v-1zM132 413v15h1v-15zM133 371v32h1v-32zM133 413v15h1v-15zM134 372v31h1v-31zM134 408v4h1v-4zM134 414v14h1v-14zM135 373v30h1v-30zM135 406v4h1v-4zM135 411v2h1v-2zM135 414v14h1v-14zM136 374v29h1v-29zM136 406v3h1v-3zM136 414v14h1v-14zM137 373v30h1v-30zM137 407v1h1v-1zM137 414v14h1v-14zM138 372v31h1v-31zM138 404v3h1v-3zM138 410v3h1v-3zM138 414v14h1v-14zM139 373v32h1v-32zM139 408v2h1v-2zM139 414v14h1v-14zM140 372v6h1v-6zM140 379v1h1v-1zM140 384v2h1v-2zM140 387v18h1v-18zM140 406v2h1v-2zM140 411v2h1v-2zM140 414v14h1v-14zM141 371v5h1v-5zM141 379v1h1v-1zM141 383v20h1v-20zM141 404v1h1v-1zM141 406v2h1v-2zM141 411v4h1v-4zM141 416v12h1v-12zM142 371v32h1v-32zM142 404v4h1v-4zM142 409v7h1v-7zM143 373v29h1v-29zM143 403v2h1v-2zM143 408v3h1v-3zM143 413v3h1v-3zM144 374v31h1v-31zM144 411v5h1v-5zM145 374v30h1v-30zM145 411v5h1v-5zM146 376v27h1v-27zM146 405v3h1v-3zM146 414v2h1v-2zM147 377v5h1v-5zM147 384v15h1v-15zM147 403v4h1v-4zM147 412v4h1v-4zM148 370v4h1v-4zM148 376v5h1v-5zM148 382v21h1v-21zM148 405v1h1v-1zM148 411v5h1v-5zM149 373v16h1v-16zM149 391v12h1v-12zM149 405v1h1v-1zM149 409v2h1v-2zM149 413v3h1v-3zM150 373v30h1v-30zM150 405v1h1v-1zM150 409v2h1v-2zM150 414v2h1v-2zM151 371v32h1v-32zM151 407v1h1v-1zM151 411v2h1v-2zM151 414v2h1v-2zM152 372v38h1v-38zM152 414v2h1v-2zM153 373v33h1v-33zM153 408v2h1v-2zM153 411v5h1v-5zM154 376v30h1v-30zM154 408v1h1v-1zM154 411v5h1v-5zM155 373v21h1v-21zM155 395v2h1v-2zM155 401v2h1v-2zM155 405v2h1v-2zM155 414v2h1v-2zM156 375v13h1v-13zM156 394v22h1v-22zM157 376v29h1v-29zM157 406v10h1v-10zM158 372v1h1v-1zM158 384v21h1v-21zM158 408v8h1v-8zM159 371v3h1v-3zM159 377v29h1v-29zM159 409v7h1v-7zM160 374v32h1v-32zM160 409v2h1v-2zM160 414v2h1v-2zM161 374v2h1v-2zM161 380v25h1v-25zM161 413v3h1v-3zM162 373v31h1v-31zM162 410v1h1v-1zM162 414v2h1v-2zM163 372v2h1v-2zM163 377v26h1v-26zM163 409v2h1v-2zM163 414v2h1v-2zM164 377v27h1v-27zM164 406v5h1v-5zM164 413v3h1v-3zM165 377v28h1v-28zM165 408v2h1v-2zM165 411v5h1v-5zM166 377v28h1v-28zM166 411v5h1v-5zM167 371v33h1v-33zM167 411v5h1v-5zM168 133v295h1v-295zM169 127v301h1v-301zM170 127v301h1v-301zM171 127v301h1v-301zM172 127v301h1v-301zM173 127v301h1v-301zM174 127v301h1v-301zM175 127v301h1v-301zM176 127v301h1v-301zM177 127v301h1v-301zM178 127v301h1v-301zM179 127v301h1v-301zM180 127v301h1v-301zM181 127v301h1v-301z"/></svg><svg width="1100" height="559" shape-rendering="crispEdges"><rect x="52" y="93" width="1" height="7" fill="#8a8a8a"/><rect x="59" y="93" width="1" height="7" fill="#8a8a8a"/><rect x="65" y="93" width="1" height="7" fill="#8a8a8a"/><rect x="71" y="93" width="1" height="7" fill="#8a8a8a"/><rect x="76" y="93" width="1" height="7" fill="#d0d0d0"/><rect x="83" y="93" width="1" height="7" fill="#8a8a8a"/><rect x="89" y="93" width="1" height="7" fill="#8a8a8a"/><rect x="95" y="93" width="1" height="7" fill="#8a8a8a"/><rect x="101" y="93" width="1" height="7" fill="#8a8a8a"/><rect x="106" y="93" width="1" height="7" fill="#d0d0d0"/><rect x="117" y="93" width="1" height="7" fill="#8a8a8a"/><rect x="124" y="93" width="1" height="7" fill="#8a8a8a"/><rect x="130" y="93" width="1" height="7" fill="#8a8a8a"/><rect x="136" y="93" width="1" height="7" fill="#8a8a8a"/><rect x="142" y="93" width="1" height="7" fill="#8a8a8a"/><rect x="147" y="93" width="1" height="7" fill="#d0d0d0"/><rect x="154" y="93" width="1" height="7" fill="#8a8a8a"/><rect x="159" y="93" width="1" height="7" fill="#8a8a8a"/><rect x="165" y="93" width="1" height="7" fill="#8a8a8a"/><rect x="43" y="98" width="128" height="1" fill="#b83010" opacity="0.9"/><rect x="43" y="94" width="4" height="5" fill="#c8e020"/><rect x="170" y="94" width="3" height="4" fill="#0050ff"/><rect x="173" y="94" width="3" height="4" fill="#40ff20"/><rect x="176" y="94" width="3" height="4" fill="#ffe000"/><rect x="179" y="94" width="3" height="4" fill="#ff2000"/><rect x="53" y="93" width="1" height="2" fill="#ff9090" opacity="0.85"/><rect x="170" y="93" width="1" height="2" fill="#c0ffb0" opacity="0.9"/><rect x="53" y="96" width="1" height="2" fill="#ff9090" opacity="0.85"/><rect x="170" y="96" width="1" height="2" fill="#c0ffb0" opacity="0.9"/><rect x="53" y="99" width="1" height="2" fill="#ff9090" opacity="0.85"/><rect x="170" y="99" width="1" height="2" fill="#c0ffb0" opacity="0.9"/><rect x="53" y="102" width="1" height="2" fill="#ff9090" opacity="0.85"/><rect x="170" y="102" width="1" height="2" fill="#c0ffb0" opacity="0.9"/><rect x="53" y="105" width="1" height="2" fill="#ff9090" opacity="0.85"/><rect x="170" y="105" width="1" height="2" fill="#c0ffb0" opacity="0.9"/><rect x="53" y="108" width="1" height="2" fill="#ff9090" opacity="0.85"/><rect x="170" y="108" width="1" height="2" fill="#c0ffb0" opacity="0.9"/><rect x="53" y="111" width="1" height="2" fill="#ff9090" opacity="0.85"/><rect x="170" y="111" width="1" height="2" fill="#c0ffb0" opacity="0.9"/><rect x="53" y="114" width="1" height="2" fill="#ff9090" opacity="0.85"/><rect x="170" y="114" width="1" height="2" fill="#c0ffb0" opacity="0.9"/><rect x="53" y="117" width="1" height="2" fill="#ff9090" opacity="0.85"/><rect x="170" y="117" width="1" height="2" fill="#c0ffb0" opacity="0.9"/><rect x="53" y="120" width="1" height="2" fill="#ff9090" opacity="0.85"/><rect x="170" y="120" width="1" height="2" fill="#c0ffb0" opacity="0.9"/><rect x="53" y="123" width="1" height="2" fill="#ff9090" opacity="0.85"/><rect x="170" y="123" width="1" height="2" fill="#c0ffb0" opacity="0.9"/><rect x="53" y="126" width="1" height="2" fill="#ff9090" opacity="0.85"/><rect x="170" y="126" width="1" height="2" fill="#c0ffb0" opacity="0.9"/><rect x="53" y="129" width="1" height="2" fill="#ff9090" opacity="0.85"/><rect x="170" y="129" width="1" height="2" fill="#c0ffb0" opacity="0.9"/><rect x="53" y="132" width="1" height="2" fill="#ff9090" opacity="0.85"/><rect x="170" y="132" width="1" height="2" fill="#c0ffb0" opacity="0.9"/><rect x="53" y="135" width="1" height="2" fill="#ff9090" opacity="0.85"/><rect x="170" y="135" width="1" height="2" fill="#c0ffb0" opacity="0.9"/><rect x="53" y="138" width="1" height="2" fill="#ff9090" opacity="0.85"/><rect x="170" y="138" width="1" height="2" fill="#c0ffb0" opacity="0.9"/><rect x="53" y="141" width="1" height="2" fill="#ff9090" opacity="0.85"/><rect x="170" y="141" width="1" height="2" fill="#c0ffb0" opacity="0.9"/><rect x="53" y="144" width="1" height="2" fill="#ff9090" opacity="0.85"/><rect x="170" y="144" width="1" height="2" fill="#c0ffb0" opacity="0.9"/><rect x="53" y="147" width="1" height="2" fill="#ff9090" opacity="0.85"/><rect x="170" y="147" width="1" height="2" fill="#c0ffb0" opacity="0.9"/><rect x="53" y="150" width="1" height="2" fill="#ff9090" opacity="0.85"/><rect x="170" y="150" width="1" height="2" fill="#c0ffb0" opacity="0.9"/><rect x="53" y="153" width="1" height="2" fill="#ff9090" opacity="0.85"/><rect x="170" y="153" width="1" height="2" fill="#c0ffb0" opacity="0.9"/><rect x="53" y="156" width="1" height="2" fill="#ff9090" opacity="0.85"/><rect x="170" y="156" width="1" height="2" fill="#c0ffb0" opacity="0.9"/><rect x="53" y="159" width="1" height="2" fill="#ff9090" opacity="0.85"/><rect x="170" y="159" width="1" height="2" fill="#c0ffb0" opacity="0.9"/><rect x="53" y="162" width="1" height="2" fill="#ff9090" opacity="0.85"/><rect x="170" y="162" width="1" height="2" fill="#c0ffb0" opacity="0.9"/><rect x="53" y="165" width="1" height="2" fill="#ff9090" opacity="0.85"/><rect x="170" y="165" width="1" height="2" fill="#c0ffb0" opacity="0.9"/><rect x="53" y="168" width="1" height="2" fill="#ff9090" opacity="0.85"/><rect x="170" y="168" width="1" height="2" fill="#c0ffb0" opacity="0.9"/><rect x="53" y="171" width="1" height="2" fill="#ff9090" opacity="0.85"/><rect x="170" y="171" width="1" height="2" fill="#c0ffb0" opacity="0.9"/><rect x="53" y="174" width="1" height="2" fill="#ff9090" opacity="0.85"/><rect x="170" y="174" width="1" height="2" fill="#c0ffb0" opacity="0.9"/><rect x="53" y="177" width="1" height="2" fill="#ff9090" opacity="0.85"/><rect x="170" y="177" width="1" height="2" fill="#c0ffb0" opacity="0.9"/><rect x="53" y="180" width="1" height="2" fill="#ff9090" opacity="0.85"/><rect x="170" y="180" width="1" height="2" fill="#c0ffb0" opacity="0.9"/><rect x="53" y="183" width="1" height="2" fill="#ff9090" opacity="0.85"/><rect x="170" y="183" width="1" height="2" fill="#c0ffb0" opacity="0.9"/><rect x="53" y="186" width="1" height="2" fill="#ff9090" opacity="0.85"/><rect x="170" y="186" width="1" height="2" fill="#c0ffb0" opacity="0.9"/><rect x="53" y="189" width="1" height="2" fill="#ff9090" opacity="0.85"/><rect x="170" y="189" width="1" height="2" fill="#c0ffb0" opacity="0.9"/><rect x="53" y="192" width="1" height="2" fill="#ff9090" opacity="0.85"/><rect x="170" y="192" width="1" height="2" fill="#c0ffb0" opacity="0.9"/><rect x="53" y="195" width="1" height="2" fill="#ff9090" opacity="0.85"/><rect x="170" y="195" width="1" height="2" fill="#c0ffb0" opacity="0.9"/><rect x="53" y="198" width="1" height="2" fill="#ff9090" opacity="0.85"/><rect x="170" y="198" width="1" height="2" fill="#c0ffb0" opacity="0.9"/><rect x="53" y="201" width="1" height="2" fill="#ff9090" opacity="0.85"/><rect x="170" y="201" width="1" height="2" fill="#c0ffb0" opacity="0.9"/><rect x="53" y="204" width="1" height="2" fill="#ff9090" opacity="0.85"/><rect x="170" y="204" width="1" height="2" fill="#c0ffb0" opacity="0.9"/><rect x="53" y="207" width="1" height="2" fill="#ff9090" opacity="0.85"/><rect x="170" y="207" width="1" height="2" fill="#c0ffb0" opacity="0.9"/><rect x="53" y="210" width="1" height="2" fill="#ff9090" opacity="0.85"/><rect x="170" y="210" width="1" height="2" fill="#c0ffb0" opacity="0.9"/><rect x="53" y="213" width="1" height="2" fill="#ff9090" opacity="0.85"/><rect x="170" y="213" width="1" height="2" fill="#c0ffb0" opacity="0.9"/><rect x="53" y="216" width="1" height="2" fill="#ff9090" opacity="0.85"/><rect x="170" y="216" width="1" height="2" fill="#c0ffb0" opacity="0.9"/><rect x="53" y="219" width="1" height="2" fill="#ff9090" opacity="0.85"/><rect x="170" y="219" width="1" height="2" fill="#c0ffb0" opacity="0.9"/><rect x="53" y="222" width="1" height="2" fill="#ff9090" opacity="0.85"/><rect x="170" y="222" width="1" height="2" fill="#c0ffb0" opacity="0.9"/><rect x="53" y="225" width="1" height="2" fill="#ff9090" opacity="0.85"/><rect x="170" y="225" width="1" height="2" fill="#c0ffb0" opacity="0.9"/><rect x="53" y="228" width="1" height="2" fill="#ff9090" opacity="0.85"/><rect x="170" y="228" width="1" height="2" fill="#c0ffb0" opacity="0.9"/><rect x="53" y="231" width="1" height="2" fill="#ff9090" opacity="0.85"/><rect x="170" y="231" width="1" height="2" fill="#c0ffb0" opacity="0.9"/><rect x="53" y="234" width="1" height="2" fill="#ff9090" opacity="0.85"/><rect x="170" y="234" width="1" height="2" fill="#c0ffb0" opacity="0.9"/><rect x="53" y="237" width="1" height="2" fill="#ff9090" opacity="0.85"/><rect x="170" y="237" width="1" height="2" fill="#c0ffb0" opacity="0.9"/><rect x="53" y="240" width="1" height="2" fill="#ff9090" opacity="0.85"/><rect x="170" y="240" width="1" height="2" fill="#c0ffb0" opacity="0.9"/><rect x="53" y="243" width="1" height="2" fill="#ff9090" opacity="0.85"/><rect x="170" y="243" width="1" height="2" fill="#c0ffb0" opacity="0.9"/><rect x="53" y="246" width="1" height="2" fill="#ff9090" opacity="0.85"/><rect x="170" y="246" width="1" height="2" fill="#c0ffb0" opacity="0.9"/><rect x="53" y="249" width="1" height="2" fill="#ff9090" opacity="0.85"/><rect x="170" y="249" width="1" height="2" fill="#c0ffb0" opacity="0.9"/><rect x="53" y="252" width="1" height="2" fill="#ff9090" opacity="0.85"/><rect x="170" y="252" width="1" height="2" fill="#c0ffb0" opacity="0.9"/><rect x="53" y="255" width="1" height="2" fill="#ff9090" opacity="0.85"/><rect x="170" y="255" width="1" height="2" fill="#c0ffb0" opacity="0.9"/><rect x="53" y="258" width="1" height="2" fill="#ff9090" opacity="0.85"/><rect x="170" y="258" width="1" height="2" fill="#c0ffb0" opacity="0.9"/><rect x="53" y="261" width="1" height="2" fill="#ff9090" opacity="0.85"/><rect x="170" y="261" width="1" height="2" fill="#c0ffb0" opacity="0.9"/><rect x="53" y="264" width="1" height="2" fill="#ff9090" opacity="0.85"/><rect x="170" y="264" width="1" height="2" fill="#c0ffb0" opacity="0.9"/><rect x="53" y="267" width="1" height="2" fill="#ff9090" opacity="0.85"/><rect x="170" y="267" width="1" height="2" fill="#c0ffb0" opacity="0.9"/><rect x="53" y="270" width="1" height="2" fill="#ff9090" opacity="0.85"/><rect x="170" y="270" width="1" height="2" fill="#c0ffb0" opacity="0.9"/><rect x="53" y="273" width="1" height="2" fill="#ff9090" opacity="0.85"/><rect x="170" y="273" width="1" height="2" fill="#c0ffb0" opacity="0.9"/><rect x="53" y="276" width="1" height="2" fill="#ff9090" opacity="0.85"/><rect x="170" y="276" width="1" height="2" fill="#c0ffb0" opacity="0.9"/><rect x="53" y="279" width="1" height="2" fill="#ff9090" opacity="0.85"/><rect x="170" y="279" width="1" height="2" fill="#c0ffb0" opacity="0.9"/><rect x="53" y="282" width="1" height="2" fill="#ff9090" opacity="0.85"/><rect x="170" y="282" width="1" height="2" fill="#c0ffb0" opacity="0.9"/><rect x="53" y="285" width="1" height="2" fill="#ff9090" opacity="0.85"/><rect x="170" y="285" width="1" height="2" fill="#c0ffb0" opacity="0.9"/><rect x="53" y="288" width="1" height="2" fill="#ff9090" opacity="0.85"/><rect x="170" y="288" width="1" height="2" fill="#c0ffb0" opacity="0.9"/><rect x="53" y="291" width="1" height="2" fill="#ff9090" opacity="0.85"/><rect x="170" y="291" width="1" height="2" fill="#c0ffb0" opacity="0.9"/><rect x="53" y="294" width="1" height="2" fill="#ff9090" opacity="0.85"/><rect x="170" y="294" width="1" height="2" fill="#c0ffb0" opacity="0.9"/><rect x="53" y="297" width="1" height="2" fill="#ff9090" opacity="0.85"/><rect x="170" y="297" width="1" height="2" fill="#c0ffb0" opacity="0.9"/><rect x="53" y="300" width="1" height="2" fill="#ff9090" opacity="0.85"/><rect x="170" y="300" width="1" height="2" fill="#c0ffb0" opacity="0.9"/><rect x="53" y="303" width="1" height="2" fill="#ff9090" opacity="0.85"/><rect x="170" y="303" width="1" height="2" fill="#c0ffb0" opacity="0.9"/><rect x="53" y="306" width="1" height="2" fill="#ff9090" opacity="0.85"/><rect x="170" y="306" width="1" height="2" fill="#c0ffb0" opacity="0.9"/><rect x="53" y="309" width="1" height="2" fill="#ff9090" opacity="0.85"/><rect x="170" y="309" width="1" height="2" fill="#c0ffb0" opacity="0.9"/><rect x="53" y="312" width="1" height="2" fill="#ff9090" opacity="0.85"/><rect x="170" y="312" width="1" height="2" fill="#c0ffb0" opacity="0.9"/><rect x="53" y="315" width="1" height="2" fill="#ff9090" opacity="0.85"/><rect x="170" y="315" width="1" height="2" fill="#c0ffb0" opacity="0.9"/><rect x="53" y="318" width="1" height="2" fill="#ff9090" opacity="0.85"/><rect x="170" y="318" width="1" height="2" fill="#c0ffb0" opacity="0.9"/><rect x="53" y="321" width="1" height="2" fill="#ff9090" opacity="0.85"/><rect x="170" y="321" width="1" height="2" fill="#c0ffb0" opacity="0.9"/><rect x="53" y="324" width="1" height="2" fill="#ff9090" opacity="0.85"/><rect x="170" y="324" width="1" height="2" fill="#c0ffb0" opacity="0.9"/><rect x="53" y="327" width="1" height="2" fill="#ff9090" opacity="0.85"/><rect x="170" y="327" width="1" height="2" fill="#c0ffb0" opacity="0.9"/><rect x="53" y="330" width="1" height="2" fill="#ff9090" opacity="0.85"/><rect x="170" y="330" width="1" height="2" fill="#c0ffb0" opacity="0.9"/><rect x="53" y="333" width="1" height="2" fill="#ff9090" opacity="0.85"/><rect x="170" y="333" width="1" height="2" fill="#c0ffb0" opacity="0.9"/><rect x="53" y="336" width="1" height="2" fill="#ff9090" opacity="0.85"/><rect x="170" y="336" width="1" height="2" fill="#c0ffb0" opacity="0.9"/><rect x="53" y="339" width="1" height="2" fill="#ff9090" opacity="0.85"/><rect x="170" y="339" width="1" height="2" fill="#c0ffb0" opacity="0.9"/><rect x="53" y="342" width="1" height="2" fill="#ff9090" opacity="0.85"/><rect x="170" y="342" width="1" height="2" fill="#c0ffb0" opacity="0.9"/><rect x="53" y="345" width="1" height="2" fill="#ff9090" opacity="0.85"/><rect x="170" y="345" width="1" height="2" fill="#c0ffb0" opacity="0.9"/><rect x="53" y="348" width="1" height="2" fill="#ff9090" opacity="0.85"/><rect x="170" y="348" width="1" height="2" fill="#c0ffb0" opacity="0.9"/><rect x="53" y="351" width="1" height="2" fill="#ff9090" opacity="0.85"/><rect x="170" y="351" width="1" height="2" fill="#c0ffb0" opacity="0.9"/><rect x="53" y="354" width="1" height="2" fill="#ff9090" opacity="0.85"/><rect x="170" y="354" width="1" height="2" fill="#c0ffb0" opacity="0.9"/><rect x="53" y="357" width="1" height="2" fill="#ff9090" opacity="0.85"/><rect x="170" y="357" width="1" height="2" fill="#c0ffb0" opacity="0.9"/><rect x="53" y="360" width="1" height="2" fill="#ff9090" opacity="0.85"/><rect x="170" y="360" width="1" height="2" fill="#c0ffb0" opacity="0.9"/><rect x="53" y="363" width="1" height="2" fill="#ff9090" opacity="0.85"/><rect x="170" y="363" width="1" height="2" fill="#c0ffb0" opacity="0.9"/><rect x="53" y="366" width="1" height="2" fill="#ff9090" opacity="0.85"/><rect x="170" y="366" width="1" height="2" fill="#c0ffb0" opacity="0.9"/><rect x="53" y="369" width="1" height="2" fill="#ff9090" opacity="0.85"/><rect x="170" y="369" width="1" height="2" fill="#c0ffb0" opacity="0.9"/><rect x="53" y="372" width="1" height="2" fill="#ff9090" opacity="0.85"/><rect x="170" y="372" width="1" height="2" fill="#c0ffb0" opacity="0.9"/><rect x="53" y="375" width="1" height="2" fill="#ff9090" opacity="0.85"/><rect x="170" y="375" width="1" height="2" fill="#c0ffb0" opacity="0.9"/><rect x="53" y="378" width="1" height="2" fill="#ff9090" opacity="0.85"/><rect x="170" y="378" width="1" height="2" fill="#c0ffb0" opacity="0.9"/><rect x="53" y="381" width="1" height="2" fill="#ff9090" opacity="0.85"/><rect x="170" y="381" width="1" height="2" fill="#c0ffb0" opacity="0.9"/><rect x="53" y="384" width="1" height="2" fill="#ff9090" opacity="0.85"/><rect x="170" y="384" width="1" height="2" fill="#c0ffb0" opacity="0.9"/><rect x="53" y="387" width="1" height="2" fill="#ff9090" opacity="0.85"/><rect x="170" y="387" width="1" height="2" fill="#c0ffb0" opacity="0.9"/><rect x="53" y="390" width="1" height="2" fill="#ff9090" opacity="0.85"/><rect x="170" y="390" width="1" height="2" fill="#c0ffb0" opacity="0.9"/><rect x="53" y="393" width="1" height="2" fill="#ff9090" opacity="0.85"/><rect x="170" y="393" width="1" height="2" fill="#c0ffb0" opacity="0.9"/><rect x="53" y="396" width="1" height="2" fill="#ff9090" opacity="0.85"/><rect x="170" y="396" width="1" height="2" fill="#c0ffb0" opacity="0.9"/><rect x="53" y="399" width="1" height="2" fill="#ff9090" opacity="0.85"/><rect x="170" y="399" width="1" height="2" fill="#c0ffb0" opacity="0.9"/><rect x="53" y="402" width="1" height="2" fill="#ff9090" opacity="0.85"/><rect x="170" y="402" width="1" height="2" fill="#c0ffb0" opacity="0.9"/><rect x="53" y="405" width="1" height="2" fill="#ff9090" opacity="0.85"/><rect x="170" y="405" width="1" height="2" fill="#c0ffb0" opacity="0.9"/><rect x="53" y="408" width="1" height="2" fill="#ff9090" opacity="0.85"/><rect x="170" y="408" width="1" height="2" fill="#c0ffb0" opacity="0.9"/><rect x="53" y="411" width="1" height="2" fill="#ff9090" opacity="0.85"/><rect x="170" y="411" width="1" height="2" fill="#c0ffb0" opacity="0.9"/><rect x="53" y="414" width="1" height="2" fill="#ff9090" opacity="0.85"/><rect x="170" y="414" width="1" height="2" fill="#c0ffb0" opacity="0.9"/><rect x="53" y="417" width="1" height="2" fill="#ff9090" opacity="0.85"/><rect x="170" y="417" width="1" height="2" fill="#c0ffb0" opacity="0.9"/><rect x="53" y="420" width="1" height="2" fill="#ff9090" opacity="0.85"/><rect x="170" y="420" width="1" height="2" fill="#c0ffb0" opacity="0.9"/><rect x="53" y="423" width="1" height="2" fill="#ff9090" opacity="0.85"/><rect x="170" y="423" width="1" height="2" fill="#c0ffb0" opacity="0.9"/><rect x="53" y="426" width="1" height="2" fill="#ff9090" opacity="0.85"/><rect x="170" y="426" width="1" height="2" fill="#c0ffb0" opacity="0.9"/><rect x="46" y="108" width="1" height="2" fill="#20a020"/><rect x="165" y="108" width="1" height="2" fill="#20a020"/><rect x="46" y="112" width="1" height="2" fill="#20a020"/><rect x="165" y="112" width="1" height="2" fill="#20a020"/><rect x="46" y="116" width="1" height="2" fill="#20a020"/><rect x="165" y="116" width="1" height="2" fill="#20a020"/><rect x="46" y="120" width="1" height="2" fill="#20a020"/><rect x="165" y="120" width="1" height="2" fill="#20a020"/><rect x="46" y="124" width="1" height="2" fill="#20a020"/><rect x="165" y="124" width="1" height="2" fill="#20a020"/><rect x="43" y="180" width="139" height="1" fill="#50b020"/><rect x="43" y="395" width="139" height="1" fill="#50b020"/><rect x="43" y="131" width="8" height="1" fill="#f0f0f0"/><rect x="43" y="139" width="8" height="1" fill="#e0a8a0"/><rect x="43" y="148" width="8" height="1" fill="#f0f0f0"/><rect x="43" y="156" width="8" height="1" fill="#e0a8a0"/><rect x="43" y="165" width="8" height="1" fill="#f0f0f0"/><rect x="43" y="173" width="8" height="1" fill="#e0a8a0"/><rect x="43" y="182" width="8" height="1" fill="#f0f0f0"/><rect x="43" y="190" width="8" height="1" fill="#e0a8a0"/><rect x="43" y="199" width="8" height="1" fill="#f0f0f0"/><rect x="43" y="207" width="8" height="1" fill="#e0a8a0"/><rect x="43" y="216" width="8" height="1" fill="#f0f0f0"/><rect x="43" y="224" width="8" height="1" fill="#e0a8a0"/><rect x="43" y="233" width="8" height="1" fill="#f0f0f0"/><rect x="43" y="241" width="8" height="1" fill="#e0a8a0"/><rect x="43" y="250" width="8" height="1" fill="#f0f0f0"/><rect x="43" y="258" width="8" height="1" fill="#e0a8a0"/><rect x="43" y="267" width="8" height="1" fill="#f0f0f0"/><rect x="43" y="275" width="8" height="1" fill="#e0a8a0"/><rect x="43" y="284" width="8" height="1" fill="#f0f0f0"/><rect x="43" y="292" width="8" height="1" fill="#e0a8a0"/><rect x="43" y="301" width="8" height="1" fill="#f0f0f0"/><rect x="43" y="309" width="8" height="1" fill="#e0a8a0"/><rect x="43" y="318" width="8" height="1" fill="#f0f0f0"/><rect x="43" y="326" width="8" height="1" fill="#e0a8a0"/><rect x="43" y="335" width="8" height="1" fill="#f0f0f0"/><rect x="43" y="343" width="8" height="1" fill="#e0a8a0"/><rect x="43" y="352" width="8" height="1" fill="#f0f0f0"/><rect x="43" y="360" width="8" height="1" fill="#e0a8a0"/><rect x="43" y="369" width="8" height="1" fill="#f0f0f0"/><rect x="43" y="377" width="8" height="1" fill="#e0a8a0"/><rect x="43" y="386" width="8" height="1" fill="#f0f0f0"/><rect x="43" y="394" width="8" height="1" fill="#e0a8a0"/><rect x="43" y="403" width="8" height="1" fill="#f0f0f0"/><rect x="43" y="411" width="8" height="1" fill="#e0a8a0"/><rect x="43" y="412" width="8" height="1" fill="#f0f0f0"/></svg><div class="t" style="left:36px;top:101px;width:20px;text-align:center;font-size:7px;font-weight:bold;color:#d8ecc0;letter-spacing:-0.3px">0</div><div class="t" style="left:48.5px;top:101px;width:20px;text-align:center;font-size:7px;font-weight:bold;color:#d8ecc0;letter-spacing:-0.3px">15</div><div class="t" style="left:60.3px;top:101px;width:20px;text-align:center;font-size:7px;font-weight:bold;color:#d8ecc0;letter-spacing:-0.3px">31</div><div class="t" style="left:72px;top:101px;width:20px;text-align:center;font-size:7px;font-weight:bold;color:#d8ecc0;letter-spacing:-0.3px">46</div><div class="t" style="left:84px;top:101px;width:20px;text-align:center;font-size:7px;font-weight:bold;color:#d8ecc0;letter-spacing:-0.3px">62</div><div class="t" style="left:96px;top:101px;width:20px;text-align:center;font-size:7px;font-weight:bold;color:#d8ecc0;letter-spacing:-0.3px">78</div><div class="t" style="left:107px;top:101px;width:20px;text-align:center;font-size:7px;font-weight:bold;color:#d8ecc0;letter-spacing:-0.3px">93</div><div class="t" style="left:118.6px;top:101px;width:20px;text-align:center;font-size:7px;font-weight:bold;color:#d8ecc0;letter-spacing:-0.3px">109</div><div class="t" style="left:131.6px;top:101px;width:20px;text-align:center;font-size:7px;font-weight:bold;color:#d8ecc0;letter-spacing:-0.3px">124</div><div class="t" style="left:154.4px;top:101px;width:20px;text-align:center;font-size:7px;font-weight:bold;color:#d8ecc0;letter-spacing:-0.3px">156</div><div class="t" style="left:53px;top:127.1px;font-size:7px;font-weight:bold;color:#e8f0e0;letter-spacing:-0.3px">364.31</div><div class="t" style="left:53px;top:135.8px;font-size:7px;font-weight:bold;color:#e8f0e0;letter-spacing:-0.3px">353</div><div class="t" style="left:53px;top:144.3px;font-size:7px;font-weight:bold;color:#e8f0e0;letter-spacing:-0.3px">342</div><div class="t" style="left:53px;top:152.8px;font-size:7px;font-weight:bold;color:#e8f0e0;letter-spacing:-0.3px">331</div><div class="t" style="left:53px;top:161.3px;font-size:7px;font-weight:bold;color:#e8f0e0;letter-spacing:-0.3px">320</div><div class="t" style="left:53px;top:169.8px;font-size:7px;font-weight:bold;color:#e8f0e0;letter-spacing:-0.3px">309</div><div class="t" style="left:53px;top:178.3px;font-size:7px;font-weight:bold;color:#e8f0e0;letter-spacing:-0.3px">298</div><div class="t" style="left:53px;top:186.8px;font-size:7px;font-weight:bold;color:#e8f0e0;letter-spacing:-0.3px">287</div><div class="t" style="left:53px;top:195.3px;font-size:7px;font-weight:bold;color:#e8f0e0;letter-spacing:-0.3px">276</div><div class="t" style="left:53px;top:203.8px;font-size:7px;font-weight:bold;color:#e8f0e0;letter-spacing:-0.3px">265</div><div class="t" style="left:53px;top:212.3px;font-size:7px;font-weight:bold;color:#e8f0e0;letter-spacing:-0.3px">254</div><div class="t" style="left:53px;top:220.8px;font-size:7px;font-weight:bold;color:#e8f0e0;letter-spacing:-0.3px">243</div><div class="t" style="left:53px;top:229.3px;font-size:7px;font-weight:bold;color:#e8f0e0;letter-spacing:-0.3px">232</div><div class="t" style="left:53px;top:237.8px;font-size:7px;font-weight:bold;color:#e8f0e0;letter-spacing:-0.3px">221</div><div class="t" style="left:53px;top:246.3px;font-size:7px;font-weight:bold;color:#e8f0e0;letter-spacing:-0.3px">210</div><div class="t" style="left:53px;top:254.8px;font-size:7px;font-weight:bold;color:#e8f0e0;letter-spacing:-0.3px">199</div><div class="t" style="left:53px;top:263.3px;font-size:7px;font-weight:bold;color:#e8f0e0;letter-spacing:-0.3px">188</div><div class="t" style="left:53px;top:271.8px;font-size:7px;font-weight:bold;color:#e8f0e0;letter-spacing:-0.3px">177</div><div class="t" style="left:53px;top:280.3px;font-size:7px;font-weight:bold;color:#e8f0e0;letter-spacing:-0.3px">166</div><div class="t" style="left:53px;top:288.8px;font-size:7px;font-weight:bold;color:#e8f0e0;letter-spacing:-0.3px">155</div><div class="t" style="left:53px;top:297.3px;font-size:7px;font-weight:bold;color:#e8f0e0;letter-spacing:-0.3px">144</div><div class="t" style="left:53px;top:305.8px;font-size:7px;font-weight:bold;color:#e8f0e0;letter-spacing:-0.3px">133</div><div class="t" style="left:53px;top:314.3px;font-size:7px;font-weight:bold;color:#e8f0e0;letter-spacing:-0.3px">122</div><div class="t" style="left:53px;top:322.8px;font-size:7px;font-weight:bold;color:#e8f0e0;letter-spacing:-0.3px">111</div><div class="t" style="left:53px;top:331.3px;font-size:7px;font-weight:bold;color:#e8f0e0;letter-spacing:-0.3px">100</div><div class="t" style="left:53px;top:339.8px;font-size:7px;font-weight:bold;color:#e8f0e0;letter-spacing:-0.3px">89</div><div class="t" style="left:53px;top:348.3px;font-size:7px;font-weight:bold;color:#e8f0e0;letter-spacing:-0.3px">78</div><div class="t" style="left:53px;top:356.7px;font-size:7px;font-weight:bold;color:#e8f0e0;letter-spacing:-0.3px">67</div><div class="t" style="left:53px;top:365.2px;font-size:7px;font-weight:bold;color:#e8f0e0;letter-spacing:-0.3px">56</div><div class="t" style="left:53px;top:373.7px;font-size:7px;font-weight:bold;color:#e8f0e0;letter-spacing:-0.3px">45</div><div class="t" style="left:53px;top:382.2px;font-size:7px;font-weight:bold;color:#e8f0e0;letter-spacing:-0.3px">34</div><div class="t" style="left:53px;top:390.7px;font-size:7px;font-weight:bold;color:#e8f0e0;letter-spacing:-0.3px">23</div><div class="t" style="left:53px;top:399.2px;font-size:7px;font-weight:bold;color:#e8f0e0;letter-spacing:-0.3px">12</div><div class="t" style="left:53px;top:407.7px;font-size:7px;font-weight:bold;color:#e8f0e0;letter-spacing:-0.3px">1</div><div class="t" style="left:53px;top:408.5px;font-size:7px;font-weight:bold;color:#e8f0e0;letter-spacing:-0.3px">0</div><div class="a" style="left:408px;top:93px;width:8px;height:352px;background:#f4f4f4"></div>
<div class="a" style="left:408px;top:93px;width:8px;height:9px;background:#f0f0f0;border-right:1px solid #888;border-bottom:1px solid #888"></div>
<div class="t" style="left:408px;top:94px;width:8px;text-align:center;font-size:5px;color:#000">&#9650;</div><div class="a" style="left:408px;top:102px;width:8px;height:318px;background:#f0f0f0;border-right:1px solid #888;border-bottom:1px solid #888;border-left:1px solid #fff"></div>
<div class="a" style="left:408px;top:436px;width:8px;height:9px;background:#f0f0f0;border-right:1px solid #888;border-bottom:1px solid #888"></div>
<div class="t" style="left:408px;top:438px;width:8px;text-align:center;font-size:5px;color:#000">&#9660;</div><div class="a" style="left:15px;top:444px;width:393px;height:9px;background:#f0f0f0;border-bottom:1px solid #777"></div>
<div class="a" style="left:15px;top:444px;width:9px;height:9px;background:#f0f0f0;border-right:1px solid #ccc"></div>
<div class="t" style="left:15px;top:446px;width:9px;text-align:center;font-size:5px;color:#000">&#9664;</div><div class="a" style="left:399px;top:444px;width:9px;height:9px;background:#f0f0f0;border-left:1px solid #ccc;border-right:1px solid #777"></div>
<div class="t" style="left:399px;top:446px;width:9px;text-align:center;font-size:5px;color:#000">&#9654;</div><div class="a" style="left:422px;top:38px;width:129px;height:21px;background:#fafafa;border-top:1px solid #6a6a6a;border-left:1px solid #a0a0a0;border-right:1px solid #e0e0e0"></div>
<div class="t" style="left:422px;top:46px;width:129px;text-align:center;font-size:5.5px;color:#1c1c3c">Height profile</div>
<div class="a" style="left:557px;top:38px;width:129px;height:21px;background:#ececec;border:1px solid #dcdcdc;border-right:1px solid #6e6e6e;border-bottom:1px solid #6e6e6e;box-shadow:inset -1px -1px 0 #a8a8a8, inset 1px 1px 0 #fff;border-right:2px solid #8a8a8a;border-bottom:2px solid #8a8a8a"></div>
<div class="t" style="left:557px;top:38px;width:129px;height:21px;line-height:21px;text-align:center;font-size:5.5px;color:#0a0a28">Distribution</div>
<div class="a" style="left:692px;top:38px;width:129px;height:21px;background:#ececec;border:1px solid #dcdcdc;border-right:1px solid #6e6e6e;border-bottom:1px solid #6e6e6e;box-shadow:inset -1px -1px 0 #a8a8a8, inset 1px 1px 0 #fff;border-right:2px solid #8a8a8a;border-bottom:2px solid #8a8a8a"></div>
<div class="t" style="left:692px;top:38px;width:129px;height:21px;line-height:21px;text-align:center;font-size:5.5px;color:#0a0a28">Analysis</div>
<div class="a" style="left:422px;top:67px;width:399px;height:385px;border:1px solid #d0d0d0;box-shadow:inset 1px 1px 0 #fff;border-radius:1px"></div>
<div class="t" style="left:425px;top:64px;background:#f0f0f0;padding:0 1px">Height profile</div>
<div class="t" style="left:428px;top:75px;font-size:5.5px">Analysis</div>
<div class="a" style="left:428px;top:87px;width:356px;height:15px;border:1px dotted #555"></div>
<div class="a" style="left:433px;top:93px;width:346px;height:2px;border-top:1px solid #8e8e8e;border-bottom:1px solid #fff"></div>
<div class="a" style="left:468px;top:88px;width:5px;height:11px;background:#ececec;border-left:1px solid #fff;border-top:1px solid #fff;border-right:1px solid #7a7a7a;border-bottom:1px solid #c0c0c0;box-shadow:1px 0 0 #bdbdbd"></div>
<div class="a" style="left:790px;top:88px;width:25px;height:12px;background:#f0f0f0;border-top:1px solid #707070;border-left:1px solid #707070;border-right:1px solid #fff;border-bottom:1px solid #fff;box-shadow:inset 1px 1px 0 #b0b0b0"></div>
<div class="t" style="left:790px;top:88px;width:22px;height:12px;line-height:12px;text-align:right;font-size:5.5px;color:#222">11</div>
<div class="a" style="left:428px;top:108px;width:24px;height:12px;background:#ececec;border:1px solid #dcdcdc;border-right:1px solid #6e6e6e;border-bottom:1px solid #6e6e6e;box-shadow:inset -1px -1px 0 #a8a8a8, inset 1px 1px 0 #fff;"></div>
<div class="t" style="left:428px;top:108px;width:24px;height:12px;line-height:12px;text-align:center;font-size:5px;color:#0a0a28">&lt;| 2µs</div>
<div class="a" style="left:454px;top:108px;width:24px;height:12px;background:#ececec;border:1px solid #dcdcdc;border-right:1px solid #6e6e6e;border-bottom:1px solid #6e6e6e;box-shadow:inset -1px -1px 0 #a8a8a8, inset 1px 1px 0 #fff;"></div>
<div class="t" style="left:454px;top:108px;width:24px;height:12px;line-height:12px;text-align:center;font-size:5px;color:#0a0a28">&lt;| 6µs</div>
<div class="a" style="left:481px;top:108px;width:23px;height:12px;background:#ececec;border:1px solid #dcdcdc;border-right:1px solid #6e6e6e;border-bottom:1px solid #6e6e6e;box-shadow:inset -1px -1px 0 #a8a8a8, inset 1px 1px 0 #fff;"></div>
<div class="t" style="left:481px;top:108px;width:23px;height:12px;line-height:12px;text-align:center;font-size:5px;color:#0a0a28">&lt;| 8µs</div>
<div class="a" style="left:507px;top:108px;width:24px;height:12px;background:#f0f0f0;border-top:1px solid #707070;border-left:1px solid #707070;border-right:1px solid #fff;border-bottom:1px solid #fff;box-shadow:inset 1px 1px 0 #b0b0b0"></div>
<div class="a" style="left:598px;top:108px;width:32px;height:12px;background:#f0f0f0;border-top:1px solid #707070;border-left:1px solid #707070;border-right:1px solid #fff;border-bottom:1px solid #fff;box-shadow:inset 1px 1px 0 #b0b0b0"></div>
<div class="a" style="left:630px;top:108px;width:23px;height:12px;background:#ececec;border:1px solid #dcdcdc;border-right:1px solid #6e6e6e;border-bottom:1px solid #6e6e6e;box-shadow:inset -1px -1px 0 #a8a8a8, inset 1px 1px 0 #fff;"></div>
<div class="t" style="left:630px;top:108px;width:23px;height:12px;line-height:12px;text-align:center;font-size:5px;color:#0a0a28">CSV</div>
<div class="a" style="left:657px;top:108px;width:22px;height:12px;background:#ececec;border:1px solid #dcdcdc;border-right:1px solid #6e6e6e;border-bottom:1px solid #6e6e6e;box-shadow:inset -1px -1px 0 #a8a8a8, inset 1px 1px 0 #fff;"></div>
<div class="t" style="left:657px;top:108px;width:22px;height:12px;line-height:12px;text-align:center;font-size:5px;color:#0a0a28">BMP</div>
<div class="a" style="left:716px;top:108px;width:17px;height:12px;background:#f0f0f0;border-top:1px solid #707070;border-left:1px solid #707070;border-right:1px solid #fff;border-bottom:1px solid #fff;box-shadow:inset 1px 1px 0 #b0b0b0"></div>
<div class="a" style="left:742px;top:108px;width:23px;height:12px;background:#ececec;border:1px solid #dcdcdc;border-right:1px solid #6e6e6e;border-bottom:1px solid #6e6e6e;box-shadow:inset -1px -1px 0 #a8a8a8, inset 1px 1px 0 #fff;"></div>
<div class="t" style="left:742px;top:108px;width:23px;height:12px;line-height:12px;text-align:center;font-size:5px;color:#0a0a28">8µs |&gt;</div>
<div class="a" style="left:769px;top:108px;width:25px;height:12px;background:#ececec;border:1px solid #dcdcdc;border-right:1px solid #6e6e6e;border-bottom:1px solid #6e6e6e;box-shadow:inset -1px -1px 0 #a8a8a8, inset 1px 1px 0 #fff;"></div>
<div class="t" style="left:769px;top:108px;width:25px;height:12px;line-height:12px;text-align:center;font-size:5px;color:#0a0a28">6µs |&gt;</div>
<div class="a" style="left:795px;top:108px;width:25px;height:12px;background:#ececec;border:1px solid #dcdcdc;border-right:1px solid #6e6e6e;border-bottom:1px solid #6e6e6e;box-shadow:inset -1px -1px 0 #a8a8a8, inset 1px 1px 0 #fff;"></div>
<div class="t" style="left:795px;top:108px;width:25px;height:12px;line-height:12px;text-align:center;font-size:5px;color:#0a0a28">2µs |&gt;</div>
<div class="a" style="left:428px;top:125px;width:387px;height:333px;background:#fff"></div>
<svg width="1100" height="559"><line x1="502.5" y1="128" x2="502.5" y2="431" stroke="#d9d9d9" stroke-width="1"/><line x1="540.5" y1="128" x2="540.5" y2="431" stroke="#d9d9d9" stroke-width="1"/><line x1="578.5" y1="128" x2="578.5" y2="431" stroke="#d9d9d9" stroke-width="1"/><line x1="617.5" y1="128" x2="617.5" y2="431" stroke="#d9d9d9" stroke-width="1"/><line x1="655.5" y1="128" x2="655.5" y2="431" stroke="#d9d9d9" stroke-width="1"/><line x1="693.5" y1="128" x2="693.5" y2="431" stroke="#d9d9d9" stroke-width="1"/><line x1="732.5" y1="128" x2="732.5" y2="431" stroke="#d9d9d9" stroke-width="1"/><line x1="770.5" y1="128" x2="770.5" y2="431" stroke="#d9d9d9" stroke-width="1"/><line x1="808.5" y1="128" x2="808.5" y2="431" stroke="#d9d9d9" stroke-width="1"/><line x1="463" y1="404.5" x2="812" y2="404.5" stroke="#d9d9d9" stroke-width="1"/><line x1="463" y1="377.5" x2="812" y2="377.5" stroke="#d9d9d9" stroke-width="1"/><line x1="463" y1="349.5" x2="812" y2="349.5" stroke="#d9d9d9" stroke-width="1"/><line x1="463" y1="322.5" x2="812" y2="322.5" stroke="#d9d9d9" stroke-width="1"/><line x1="463" y1="294.5" x2="812" y2="294.5" stroke="#d9d9d9" stroke-width="1"/><line x1="463" y1="267.5" x2="812" y2="267.5" stroke="#d9d9d9" stroke-width="1"/><line x1="463" y1="239.5" x2="812" y2="239.5" stroke="#d9d9d9" stroke-width="1"/><line x1="463" y1="212.5" x2="812" y2="212.5" stroke="#d9d9d9" stroke-width="1"/><line x1="463" y1="184.5" x2="812" y2="184.5" stroke="#d9d9d9" stroke-width="1"/><line x1="463" y1="157.5" x2="812" y2="157.5" stroke="#d9d9d9" stroke-width="1"/><line x1="463" y1="128.5" x2="812" y2="128.5" stroke="#d9d9d9" stroke-width="1"/><line x1="455" y1="431.5" x2="463.5" y2="431.5" stroke="#555" stroke-width="1"/><line x1="460" y1="429.5" x2="463" y2="429.5" stroke="#333" stroke-width="0.75"/><line x1="460" y1="426.5" x2="463" y2="426.5" stroke="#333" stroke-width="0.75"/><line x1="460" y1="423.5" x2="463" y2="423.5" stroke="#333" stroke-width="0.75"/><line x1="460" y1="420.5" x2="463" y2="420.5" stroke="#333" stroke-width="0.75"/><line x1="458" y1="418.5" x2="463" y2="418.5" stroke="#333" stroke-width="0.75"/><line x1="460" y1="415.5" x2="463" y2="415.5" stroke="#333" stroke-width="0.75"/><line x1="460" y1="412.5" x2="463" y2="412.5" stroke="#333" stroke-width="0.75"/><line x1="460" y1="409.5" x2="463" y2="409.5" stroke="#333" stroke-width="0.75"/><line x1="460" y1="407.5" x2="463" y2="407.5" stroke="#333" stroke-width="0.75"/><line x1="455" y1="404.5" x2="463.5" y2="404.5" stroke="#555" stroke-width="1"/><line x1="460" y1="401.5" x2="463" y2="401.5" stroke="#333" stroke-width="0.75"/><line x1="460" y1="398.5" x2="463" y2="398.5" stroke="#333" stroke-width="0.75"/><line x1="460" y1="396.5" x2="463" y2="396.5" stroke="#333" stroke-width="0.75"/><line x1="460" y1="393.5" x2="463" y2="393.5" stroke="#333" stroke-width="0.75"/><line x1="458" y1="390.5" x2="463" y2="390.5" stroke="#333" stroke-width="0.75"/><line x1="460" y1="387.5" x2="463" y2="387.5" stroke="#333" stroke-width="0.75"/><line x1="460" y1="385.5" x2="463" y2="385.5" stroke="#333" stroke-width="0.75"/><line x1="460" y1="382.5" x2="463" y2="382.5" stroke="#333" stroke-width="0.75"/><line x1="460" y1="379.5" x2="463" y2="379.5" stroke="#333" stroke-width="0.75"/><line x1="455" y1="377.5" x2="463.5" y2="377.5" stroke="#555" stroke-width="1"/><line x1="460" y1="374.5" x2="463" y2="374.5" stroke="#333" stroke-width="0.75"/><line x1="460" y1="371.5" x2="463" y2="371.5" stroke="#333" stroke-width="0.75"/><line x1="460" y1="368.5" x2="463" y2="368.5" stroke="#333" stroke-width="0.75"/><line x1="460" y1="366.5" x2="463" y2="366.5" stroke="#333" stroke-width="0.75"/><line x1="458" y1="363.5" x2="463" y2="363.5" stroke="#333" stroke-width="0.75"/><line x1="460" y1="360.5" x2="463" y2="360.5" stroke="#333" stroke-width="0.75"/><line x1="460" y1="357.5" x2="463" y2="357.5" stroke="#333" stroke-width="0.75"/><line x1="460" y1="355.5" x2="463" y2="355.5" stroke="#333" stroke-width="0.75"/><line x1="460" y1="352.5" x2="463" y2="352.5" stroke="#333" stroke-width="0.75"/><line x1="455" y1="349.5" x2="463.5" y2="349.5" stroke="#555" stroke-width="1"/><line x1="460" y1="346.5" x2="463" y2="346.5" stroke="#333" stroke-width="0.75"/><line x1="460" y1="344.5" x2="463" y2="344.5" stroke="#333" stroke-width="0.75"/><line x1="460" y1="341.5" x2="463" y2="341.5" stroke="#333" stroke-width="0.75"/><line x1="460" y1="338.5" x2="463" y2="338.5" stroke="#333" stroke-width="0.75"/><line x1="458" y1="335.5" x2="463" y2="335.5" stroke="#333" stroke-width="0.75"/><line x1="460" y1="333.5" x2="463" y2="333.5" stroke="#333" stroke-width="0.75"/><line x1="460" y1="330.5" x2="463" y2="330.5" stroke="#333" stroke-width="0.75"/><line x1="460" y1="327.5" x2="463" y2="327.5" stroke="#333" stroke-width="0.75"/><line x1="460" y1="324.5" x2="463" y2="324.5" stroke="#333" stroke-width="0.75"/><line x1="455" y1="322.5" x2="463.5" y2="322.5" stroke="#555" stroke-width="1"/><line x1="460" y1="319.5" x2="463" y2="319.5" stroke="#333" stroke-width="0.75"/><line x1="460" y1="316.5" x2="463" y2="316.5" stroke="#333" stroke-width="0.75"/><line x1="460" y1="313.5" x2="463" y2="313.5" stroke="#333" stroke-width="0.75"/><line x1="460" y1="311.5" x2="463" y2="311.5" stroke="#333" stroke-width="0.75"/><line x1="458" y1="308.5" x2="463" y2="308.5" stroke="#333" stroke-width="0.75"/><line x1="460" y1="305.5" x2="463" y2="305.5" stroke="#333" stroke-width="0.75"/><line x1="460" y1="302.5" x2="463" y2="302.5" stroke="#333" stroke-width="0.75"/><line x1="460" y1="300.5" x2="463" y2="300.5" stroke="#333" stroke-width="0.75"/><line x1="460" y1="297.5" x2="463" y2="297.5" stroke="#333" stroke-width="0.75"/><line x1="455" y1="294.5" x2="463.5" y2="294.5" stroke="#555" stroke-width="1"/><line x1="460" y1="291.5" x2="463" y2="291.5" stroke="#333" stroke-width="0.75"/><line x1="460" y1="289.5" x2="463" y2="289.5" stroke="#333" stroke-width="0.75"/><line x1="460" y1="286.5" x2="463" y2="286.5" stroke="#333" stroke-width="0.75"/><line x1="460" y1="283.5" x2="463" y2="283.5" stroke="#333" stroke-width="0.75"/><line x1="458" y1="280.5" x2="463" y2="280.5" stroke="#333" stroke-width="0.75"/><line x1="460" y1="278.5" x2="463" y2="278.5" stroke="#333" stroke-width="0.75"/><line x1="460" y1="275.5" x2="463" y2="275.5" stroke="#333" stroke-width="0.75"/><line x1="460" y1="272.5" x2="463" y2="272.5" stroke="#333" stroke-width="0.75"/><line x1="460" y1="270.5" x2="463" y2="270.5" stroke="#333" stroke-width="0.75"/><line x1="455" y1="267.5" x2="463.5" y2="267.5" stroke="#555" stroke-width="1"/><line x1="460" y1="264.5" x2="463" y2="264.5" stroke="#333" stroke-width="0.75"/><line x1="460" y1="261.5" x2="463" y2="261.5" stroke="#333" stroke-width="0.75"/><line x1="460" y1="259.5" x2="463" y2="259.5" stroke="#333" stroke-width="0.75"/><line x1="460" y1="256.5" x2="463" y2="256.5" stroke="#333" stroke-width="0.75"/><line x1="458" y1="253.5" x2="463" y2="253.5" stroke="#333" stroke-width="0.75"/><line x1="460" y1="250.5" x2="463" y2="250.5" stroke="#333" stroke-width="0.75"/><line x1="460" y1="248.5" x2="463" y2="248.5" stroke="#333" stroke-width="0.75"/><line x1="460" y1="245.5" x2="463" y2="245.5" stroke="#333" stroke-width="0.75"/><line x1="460" y1="242.5" x2="463" y2="242.5" stroke="#333" stroke-width="0.75"/><line x1="455" y1="239.5" x2="463.5" y2="239.5" stroke="#555" stroke-width="1"/><line x1="460" y1="237.5" x2="463" y2="237.5" stroke="#333" stroke-width="0.75"/><line x1="460" y1="234.5" x2="463" y2="234.5" stroke="#333" stroke-width="0.75"/><line x1="460" y1="231.5" x2="463" y2="231.5" stroke="#333" stroke-width="0.75"/><line x1="460" y1="228.5" x2="463" y2="228.5" stroke="#333" stroke-width="0.75"/><line x1="458" y1="226.5" x2="463" y2="226.5" stroke="#333" stroke-width="0.75"/><line x1="460" y1="223.5" x2="463" y2="223.5" stroke="#333" stroke-width="0.75"/><line x1="460" y1="220.5" x2="463" y2="220.5" stroke="#333" stroke-width="0.75"/><line x1="460" y1="217.5" x2="463" y2="217.5" stroke="#333" stroke-width="0.75"/><line x1="460" y1="215.5" x2="463" y2="215.5" stroke="#333" stroke-width="0.75"/><line x1="455" y1="212.5" x2="463.5" y2="212.5" stroke="#555" stroke-width="1"/><line x1="460" y1="209.5" x2="463" y2="209.5" stroke="#333" stroke-width="0.75"/><line x1="460" y1="206.5" x2="463" y2="206.5" stroke="#333" stroke-width="0.75"/><line x1="460" y1="204.5" x2="463" y2="204.5" stroke="#333" stroke-width="0.75"/><line x1="460" y1="201.5" x2="463" y2="201.5" stroke="#333" stroke-width="0.75"/><line x1="458" y1="198.5" x2="463" y2="198.5" stroke="#333" stroke-width="0.75"/><line x1="460" y1="195.5" x2="463" y2="195.5" stroke="#333" stroke-width="0.75"/><line x1="460" y1="193.5" x2="463" y2="193.5" stroke="#333" stroke-width="0.75"/><line x1="460" y1="190.5" x2="463" y2="190.5" stroke="#333" stroke-width="0.75"/><line x1="460" y1="187.5" x2="463" y2="187.5" stroke="#333" stroke-width="0.75"/><line x1="455" y1="184.5" x2="463.5" y2="184.5" stroke="#555" stroke-width="1"/><line x1="460" y1="182.5" x2="463" y2="182.5" stroke="#333" stroke-width="0.75"/><line x1="460" y1="179.5" x2="463" y2="179.5" stroke="#333" stroke-width="0.75"/><line x1="460" y1="176.5" x2="463" y2="176.5" stroke="#333" stroke-width="0.75"/><line x1="460" y1="173.5" x2="463" y2="173.5" stroke="#333" stroke-width="0.75"/><line x1="458" y1="171.5" x2="463" y2="171.5" stroke="#333" stroke-width="0.75"/><line x1="460" y1="168.5" x2="463" y2="168.5" stroke="#333" stroke-width="0.75"/><line x1="460" y1="165.5" x2="463" y2="165.5" stroke="#333" stroke-width="0.75"/><line x1="460" y1="162.5" x2="463" y2="162.5" stroke="#333" stroke-width="0.75"/><line x1="460" y1="160.5" x2="463" y2="160.5" stroke="#333" stroke-width="0.75"/><line x1="455" y1="157.5" x2="463.5" y2="157.5" stroke="#555" stroke-width="1"/><line x1="460" y1="154.5" x2="463" y2="154.5" stroke="#333" stroke-width="0.75"/><line x1="460" y1="152.5" x2="463" y2="152.5" stroke="#333" stroke-width="0.75"/><line x1="460" y1="149.5" x2="463" y2="149.5" stroke="#333" stroke-width="0.75"/><line x1="460" y1="146.5" x2="463" y2="146.5" stroke="#333" stroke-width="0.75"/><line x1="458" y1="143.5" x2="463" y2="143.5" stroke="#333" stroke-width="0.75"/><line x1="460" y1="141.5" x2="463" y2="141.5" stroke="#333" stroke-width="0.75"/><line x1="460" y1="138.5" x2="463" y2="138.5" stroke="#333" stroke-width="0.75"/><line x1="460" y1="135.5" x2="463" y2="135.5" stroke="#333" stroke-width="0.75"/><line x1="460" y1="132.5" x2="463" y2="132.5" stroke="#333" stroke-width="0.75"/><line x1="455" y1="128.5" x2="463.5" y2="128.5" stroke="#555" stroke-width="1"/><line x1="463.5" y1="126" x2="463.5" y2="431" stroke="#f08080" stroke-width="1" stroke-dasharray="1 1.5"/><line x1="456" y1="431.5" x2="812" y2="431.5" stroke="#111" stroke-width="1"/><line x1="464.5" y1="431" x2="464.5" y2="439" stroke="#333" stroke-width="1"/><line x1="467.5" y1="431" x2="467.5" y2="435" stroke="#333" stroke-width="1"/><line x1="471.5" y1="431" x2="471.5" y2="435" stroke="#333" stroke-width="1"/><line x1="475.5" y1="431" x2="475.5" y2="435" stroke="#333" stroke-width="1"/><line x1="479.5" y1="431" x2="479.5" y2="435" stroke="#333" stroke-width="1"/><line x1="483.5" y1="431" x2="483.5" y2="435" stroke="#333" stroke-width="1"/><line x1="487.5" y1="431" x2="487.5" y2="435" stroke="#333" stroke-width="1"/><line x1="490.5" y1="431" x2="490.5" y2="435" stroke="#333" stroke-width="1"/><line x1="494.5" y1="431" x2="494.5" y2="435" stroke="#333" stroke-width="1"/><line x1="498.5" y1="431" x2="498.5" y2="435" stroke="#333" stroke-width="1"/><line x1="502.5" y1="431" x2="502.5" y2="439" stroke="#333" stroke-width="1"/><line x1="506.5" y1="431" x2="506.5" y2="435" stroke="#333" stroke-width="1"/><line x1="510.5" y1="431" x2="510.5" y2="435" stroke="#333" stroke-width="1"/><line x1="513.5" y1="431" x2="513.5" y2="435" stroke="#333" stroke-width="1"/><line x1="517.5" y1="431" x2="517.5" y2="435" stroke="#333" stroke-width="1"/><line x1="521.5" y1="431" x2="521.5" y2="435" stroke="#333" stroke-width="1"/><line x1="525.5" y1="431" x2="525.5" y2="435" stroke="#333" stroke-width="1"/><line x1="529.5" y1="431" x2="529.5" y2="435" stroke="#333" stroke-width="1"/><line x1="533.5" y1="431" x2="533.5" y2="435" stroke="#333" stroke-width="1"/><line x1="536.5" y1="431" x2="536.5" y2="435" stroke="#333" stroke-width="1"/><line x1="540.5" y1="431" x2="540.5" y2="439" stroke="#333" stroke-width="1"/><line x1="544.5" y1="431" x2="544.5" y2="435" stroke="#333" stroke-width="1"/><line x1="548.5" y1="431" x2="548.5" y2="435" stroke="#333" stroke-width="1"/><line x1="552.5" y1="431" x2="552.5" y2="435" stroke="#333" stroke-width="1"/><line x1="556.5" y1="431" x2="556.5" y2="435" stroke="#333" stroke-width="1"/><line x1="559.5" y1="431" x2="559.5" y2="435" stroke="#333" stroke-width="1"/><line x1="563.5" y1="431" x2="563.5" y2="435" stroke="#333" stroke-width="1"/><line x1="567.5" y1="431" x2="567.5" y2="435" stroke="#333" stroke-width="1"/><line x1="571.5" y1="431" x2="571.5" y2="435" stroke="#333" stroke-width="1"/><line x1="575.5" y1="431" x2="575.5" y2="435" stroke="#333" stroke-width="1"/><line x1="578.5" y1="431" x2="578.5" y2="439" stroke="#333" stroke-width="1"/><line x1="582.5" y1="431" x2="582.5" y2="435" stroke="#333" stroke-width="1"/><line x1="586.5" y1="431" x2="586.5" y2="435" stroke="#333" stroke-width="1"/><line x1="590.5" y1="431" x2="590.5" y2="435" stroke="#333" stroke-width="1"/><line x1="594.5" y1="431" x2="594.5" y2="435" stroke="#333" stroke-width="1"/><line x1="598.5" y1="431" x2="598.5" y2="435" stroke="#333" stroke-width="1"/><line x1="601.5" y1="431" x2="601.5" y2="435" stroke="#333" stroke-width="1"/><line x1="605.5" y1="431" x2="605.5" y2="435" stroke="#333" stroke-width="1"/><line x1="609.5" y1="431" x2="609.5" y2="435" stroke="#333" stroke-width="1"/><line x1="613.5" y1="431" x2="613.5" y2="435" stroke="#333" stroke-width="1"/><line x1="617.5" y1="431" x2="617.5" y2="439" stroke="#333" stroke-width="1"/><line x1="621.5" y1="431" x2="621.5" y2="435" stroke="#333" stroke-width="1"/><line x1="624.5" y1="431" x2="624.5" y2="435" stroke="#333" stroke-width="1"/><line x1="628.5" y1="431" x2="628.5" y2="435" stroke="#333" stroke-width="1"/><line x1="632.5" y1="431" x2="632.5" y2="435" stroke="#333" stroke-width="1"/><line x1="636.5" y1="431" x2="636.5" y2="435" stroke="#333" stroke-width="1"/><line x1="640.5" y1="431" x2="640.5" y2="435" stroke="#333" stroke-width="1"/><line x1="644.5" y1="431" x2="644.5" y2="435" stroke="#333" stroke-width="1"/><line x1="647.5" y1="431" x2="647.5" y2="435" stroke="#333" stroke-width="1"/><line x1="651.5" y1="431" x2="651.5" y2="435" stroke="#333" stroke-width="1"/><line x1="655.5" y1="431" x2="655.5" y2="439" stroke="#333" stroke-width="1"/><line x1="659.5" y1="431" x2="659.5" y2="435" stroke="#333" stroke-width="1"/><line x1="663.5" y1="431" x2="663.5" y2="435" stroke="#333" stroke-width="1"/><line x1="667.5" y1="431" x2="667.5" y2="435" stroke="#333" stroke-width="1"/><line x1="670.5" y1="431" x2="670.5" y2="435" stroke="#333" stroke-width="1"/><line x1="674.5" y1="431" x2="674.5" y2="435" stroke="#333" stroke-width="1"/><line x1="678.5" y1="431" x2="678.5" y2="435" stroke="#333" stroke-width="1"/><line x1="682.5" y1="431" x2="682.5" y2="435" stroke="#333" stroke-width="1"/><line x1="686.5" y1="431" x2="686.5" y2="435" stroke="#333" stroke-width="1"/><line x1="690.5" y1="431" x2="690.5" y2="435" stroke="#333" stroke-width="1"/><line x1="693.5" y1="431" x2="693.5" y2="439" stroke="#333" stroke-width="1"/><line x1="697.5" y1="431" x2="697.5" y2="435" stroke="#333" stroke-width="1"/><line x1="701.5" y1="431" x2="701.5" y2="435" stroke="#333" stroke-width="1"/><line x1="705.5" y1="431" x2="705.5" y2="435" stroke="#333" stroke-width="1"/><line x1="709.5" y1="431" x2="709.5" y2="435" stroke="#333" stroke-width="1"/><line x1="713.5" y1="431" x2="713.5" y2="435" stroke="#333" stroke-width="1"/><line x1="716.5" y1="431" x2="716.5" y2="435" stroke="#333" stroke-width="1"/><line x1="720.5" y1="431" x2="720.5" y2="435" stroke="#333" stroke-width="1"/><line x1="724.5" y1="431" x2="724.5" y2="435" stroke="#333" stroke-width="1"/><line x1="728.5" y1="431" x2="728.5" y2="435" stroke="#333" stroke-width="1"/><line x1="732.5" y1="431" x2="732.5" y2="439" stroke="#333" stroke-width="1"/><line x1="736.5" y1="431" x2="736.5" y2="435" stroke="#333" stroke-width="1"/><line x1="739.5" y1="431" x2="739.5" y2="435" stroke="#333" stroke-width="1"/><line x1="743.5" y1="431" x2="743.5" y2="435" stroke="#333" stroke-width="1"/><line x1="747.5" y1="431" x2="747.5" y2="435" stroke="#333" stroke-width="1"/><line x1="751.5" y1="431" x2="751.5" y2="435" stroke="#333" stroke-width="1"/><line x1="755.5" y1="431" x2="755.5" y2="435" stroke="#333" stroke-width="1"/><line x1="759.5" y1="431" x2="759.5" y2="435" stroke="#333" stroke-width="1"/><line x1="762.5" y1="431" x2="762.5" y2="435" stroke="#333" stroke-width="1"/><line x1="766.5" y1="431" x2="766.5" y2="435" stroke="#333" stroke-width="1"/><line x1="770.5" y1="431" x2="770.5" y2="439" stroke="#333" stroke-width="1"/><line x1="774.5" y1="431" x2="774.5" y2="435" stroke="#333" stroke-width="1"/><line x1="778.5" y1="431" x2="778.5" y2="435" stroke="#333" stroke-width="1"/><line x1="781.5" y1="431" x2="781.5" y2="435" stroke="#333" stroke-width="1"/><line x1="785.5" y1="431" x2="785.5" y2="435" stroke="#333" stroke-width="1"/><line x1="789.5" y1="431" x2="789.5" y2="435" stroke="#333" stroke-width="1"/><line x1="793.5" y1="431" x2="793.5" y2="435" stroke="#333" stroke-width="1"/><line x1="797.5" y1="431" x2="797.5" y2="435" stroke="#333" stroke-width="1"/><line x1="801.5" y1="431" x2="801.5" y2="435" stroke="#333" stroke-width="1"/><line x1="804.5" y1="431" x2="804.5" y2="435" stroke="#333" stroke-width="1"/><line x1="808.5" y1="431" x2="808.5" y2="439" stroke="#333" stroke-width="1"/><line x1="812.5" y1="431" x2="812.5" y2="439" stroke="#222"/><path d="M463.8 399.0 L465.0 396.0 L466.0 403.0 L467.0 410.0 L468.0 406.0 L469.0 402.0 L470.0 410.0 L471.0 418.0 L472.0 415.0 L473.0 412.0 L474.0 420.0 L474.9 422.6 L475.8 425.1 L476.6 427.7 L477.5 430.3 L478.3 431.4 L479.2 432.4 L480.0 433.5 L480.8 434.5 L481.7 435.6 L482.5 436.6 L483.3 436.6 L484.2 436.7 L485.0 436.7 L485.8 436.8 L486.7 436.8 L487.5 436.9 L488.3 436.9 L489.2 437.0 L490.0 437.0 L490.8 437.0 L491.6 436.9 L492.4 436.9 L493.2 436.9 L494.0 436.8 L494.8 436.8 L495.6 436.7 L496.4 436.7 L497.2 436.7 L498.0 436.6 L498.8 436.6 L499.7 434.4 L500.5 432.2 L501.4 430.0 L502.3 429.9 L503.1 429.8 L504.0 429.7 L504.8 429.6 L505.7 429.5 L506.6 429.4 L507.4 429.3 L508.3 429.2 L509.1 429.1 L510.0 429.0 L510.8 428.1 L511.6 427.2 L512.5 426.3 L513.3 425.4 L514.1 424.5 L514.9 423.5 L515.7 422.6 L516.5 421.7 L517.4 420.8 L518.2 419.9 L519.0 419.0 L519.8 416.9 L520.6 414.8 L521.5 412.7 L522.3 410.6 L523.1 408.4 L523.9 406.3 L524.8 404.2 L525.6 402.1 L526.4 399.5 L527.3 395.2 L528.2 393.0 L529.1 387.5 L530.0 385.1 L530.8 381.9 L531.6 378.2 L532.4 376.9 L533.2 372.7 L534.0 371.2 L534.9 366.0 L535.9 362.0 L536.8 358.9 L537.7 356.0 L538.5 348.1 L539.4 342.6 L540.2 338.0 L541.5 329.1 L542.3 326.0 L543.2 323.5 L544.0 323.1 L544.8 323.3 L545.7 326.5 L546.5 326.6 L547.4 326.6 L548.3 324.8 L549.2 329.1 L550.0 328.5 L550.9 329.7 L551.8 331.6 L552.7 330.4 L553.5 330.8 L554.3 331.0 L555.1 331.3 L555.9 328.8 L556.8 327.3 L557.6 326.4 L558.4 328.3 L559.2 328.1 L560.0 327.0 L560.9 325.7 L561.7 325.8 L562.6 323.7 L563.5 321.5 L564.3 322.6 L565.2 322.4 L566.1 320.1 L566.9 318.0 L567.8 317.7 L568.7 317.9 L569.6 318.8 L570.6 320.3 L571.5 319.9 L572.4 321.0 L573.3 321.4 L574.1 319.0 L575.0 318.8 L575.9 320.4 L576.8 317.2 L577.7 316.9 L578.5 317.6 L579.4 315.1 L580.3 315.9 L581.1 317.0 L582.0 314.7 L582.8 311.6 L583.6 313.9 L584.5 313.1 L585.3 311.0 L586.1 310.9 L587.0 308.2 L587.8 307.7 L588.6 305.1 L589.5 305.8 L590.3 304.7 L591.2 306.3 L592.0 304.7 L592.9 304.7 L593.8 306.0 L594.6 304.3 L595.5 302.6 L596.4 303.1 L597.3 304.4 L598.1 301.3 L599.0 302.6 L599.8 300.0 L600.6 303.0 L601.4 301.4 L602.2 299.7 L603.0 300.5 L603.8 299.9 L604.6 297.4 L605.4 299.4 L606.3 298.2 L607.1 297.4 L607.9 296.1 L608.7 292.3 L609.5 294.0 L610.3 295.8 L611.1 295.2 L611.9 294.6 L612.7 291.5 L613.5 291.1 L614.3 292.3 L615.1 292.7 L615.9 291.7 L616.7 289.5 L617.5 292.0 L618.3 291.1 L619.1 288.8 L619.9 289.1 L620.7 290.9 L621.5 288.6 L622.3 289.4 L623.1 287.1 L623.9 289.4 L624.7 286.5 L625.5 289.0 L626.3 286.6 L627.1 282.5 L627.9 286.9 L628.7 287.6 L629.5 287.0 L630.3 284.5 L631.1 284.4 L631.9 285.1 L632.7 284.2 L633.5 285.8 L634.3 284.2 L635.2 285.6 L636.0 285.5 L636.8 284.1 L637.6 282.3 L638.5 280.2 L639.3 282.6 L640.1 284.4 L640.9 283.0 L641.8 283.6 L642.6 282.0 L643.4 282.4 L644.2 284.1 L645.1 283.3 L645.9 284.4 L646.7 283.3 L647.5 282.8 L648.4 282.5 L649.2 282.5 L650.0 283.2 L650.9 283.9 L651.7 282.5 L652.6 283.4 L653.4 280.9 L654.3 280.6 L655.1 280.6 L656.0 282.9 L656.8 280.7 L657.7 282.3 L658.5 283.0 L659.4 280.7 L660.2 281.2 L661.1 283.1 L661.9 280.2 L662.8 281.4 L663.6 280.3 L664.5 280.1 L665.3 279.6 L666.1 281.9 L667.0 280.1 L667.8 282.6 L668.6 280.4 L669.5 280.2 L670.3 281.0 L671.1 281.6 L672.0 283.0 L672.8 280.8 L673.6 282.3 L674.5 278.3 L675.3 281.9 L676.1 283.7 L677.0 283.3 L677.8 283.5 L678.6 283.6 L679.5 281.9 L680.3 284.0 L681.1 281.4 L682.0 281.9 L682.8 280.4 L683.7 282.5 L684.5 284.2 L685.3 283.5 L686.2 281.6 L687.0 282.2 L687.9 284.2 L688.7 284.1 L689.5 283.0 L690.4 284.3 L691.2 285.8 L692.1 284.9 L692.9 286.6 L693.7 285.4 L694.6 283.9 L695.4 280.9 L696.2 280.4 L697.1 280.3 L697.9 278.9 L698.7 280.8 L699.6 278.0 L700.4 277.3 L701.2 276.4 L702.0 276.3 L702.8 278.2 L703.6 275.3 L704.4 275.0 L705.2 273.5 L706.0 274.7 L706.8 273.3 L707.6 272.1 L708.4 272.0 L709.2 269.7 L710.0 271.5 L710.8 272.1 L711.6 272.0 L712.4 272.3 L713.2 270.0 L714.0 268.9 L714.8 267.5 L715.6 270.5 L716.4 269.5 L717.2 267.0 L718.0 267.8 L718.8 268.7 L719.6 267.8 L720.5 268.0 L721.3 265.0 L722.1 266.6 L722.9 268.1 L723.8 267.2 L724.6 267.3 L725.4 264.8 L726.2 267.6 L727.1 267.0 L727.9 265.6 L728.8 266.5 L729.6 266.7 L730.5 266.7 L731.3 269.6 L732.1 267.8 L733.0 269.0 L733.8 269.0 L734.7 267.4 L735.5 268.2 L736.3 268.1 L737.2 266.9 L738.0 267.6 L738.8 268.8 L739.7 267.3 L740.5 267.6 L741.3 266.3 L742.2 266.3 L743.0 266.7 L743.8 268.0 L744.7 266.6 L745.5 265.5 L746.3 265.3 L747.2 264.9 L748.0 267.5 L748.8 266.8 L749.7 266.8 L750.5 264.4 L751.3 265.4 L752.2 267.5 L753.0 268.0 L753.8 269.2 L754.7 269.5 L755.5 273.1 L756.3 274.5 L757.2 275.6 L758.0 274.9 L758.8 277.1 L759.7 275.0 L760.5 273.6 L761.3 276.8 L762.2 277.3 L763.0 275.1 L763.8 274.9 L764.7 277.7 L765.5 277.3 L766.3 277.7 L767.2 276.6 L768.0 275.0 L768.8 276.1 L769.7 276.6 L770.5 274.3 L771.3 274.4 L772.2 274.9 L773.0 276.1 L773.8 274.2 L774.6 274.2 L775.5 274.3 L776.3 273.3 L777.1 275.6 L778.0 273.1 L778.8 275.5 L779.6 273.4 L780.5 274.1 L781.3 274.9 L782.2 277.4 L783.1 281.4 L784.1 281.6 L785.0 283.9 L785.8 283.6 L786.7 283.8 L787.5 283.7 L788.3 287.5 L789.2 288.2 L790.0 291.3 L791.0 295.6 L792.0 300.0 L793.5 312.0 L794.3 318.6 L795.1 325.2 L796.0 331.8 L796.8 338.4 L797.6 345.0 L798.5 355.2 L799.3 365.5 L800.1 375.8 L801.0 386.0 L801.9 392.3 L802.9 398.7 L803.8 405.0 L804.6 407.0 L805.5 409.0 L806.3 411.0 L807.2 413.0 L808.0 415.0 L809.0 413.0 L810.0 411.0 L810.8 394.6 L812.0 283.5 L812.4 240.0" fill="none" stroke="#2a2aa0" stroke-width="0.8"/></svg><div class="t" style="left:435px;top:424px;width:20px;text-align:right;font-size:7px;color:#333">0</div>
<div class="t" style="left:435px;top:400px;width:20px;text-align:right;font-size:7px;color:#333">1</div>
<div class="t" style="left:435px;top:373px;width:20px;text-align:right;font-size:7px;color:#333">2</div>
<div class="t" style="left:435px;top:346px;width:20px;text-align:right;font-size:7px;color:#333">3</div>
<div class="t" style="left:435px;top:318px;width:20px;text-align:right;font-size:7px;color:#333">4</div>
<div class="t" style="left:435px;top:291px;width:20px;text-align:right;font-size:7px;color:#333">5</div>
<div class="t" style="left:435px;top:263px;width:20px;text-align:right;font-size:7px;color:#333">6</div>
<div class="t" style="left:435px;top:236px;width:20px;text-align:right;font-size:7px;color:#333">7</div>
<div class="t" style="left:435px;top:208px;width:20px;text-align:right;font-size:7px;color:#333">8</div>
<div class="t" style="left:435px;top:181px;width:20px;text-align:right;font-size:7px;color:#333">9</div>
<div class="t" style="left:435px;top:153px;width:20px;text-align:right;font-size:7px;color:#333">10</div>
<div class="t" style="left:435px;top:129px;width:20px;text-align:right;font-size:7px;color:#333">11</div>
<div class="t" style="left:449px;top:440px;width:30px;text-align:center;font-size:7px;color:#333">0</div>
<div class="t" style="left:487px;top:440px;width:30px;text-align:center;font-size:7px;color:#333">40</div>
<div class="t" style="left:525px;top:440px;width:30px;text-align:center;font-size:7px;color:#333">80</div>
<div class="t" style="left:563px;top:440px;width:30px;text-align:center;font-size:7px;color:#333">120</div>
<div class="t" style="left:602px;top:440px;width:30px;text-align:center;font-size:7px;color:#333">160</div>
<div class="t" style="left:640px;top:440px;width:30px;text-align:center;font-size:7px;color:#333">200</div>
<div class="t" style="left:678px;top:440px;width:30px;text-align:center;font-size:7px;color:#333">240</div>
<div class="t" style="left:717px;top:440px;width:30px;text-align:center;font-size:7px;color:#333">280</div>
<div class="t" style="left:755px;top:440px;width:30px;text-align:center;font-size:7px;color:#333">320</div>
<div class="t" style="left:791px;top:440px;width:30px;text-align:center;font-size:7px;color:#333">365</div>
<div class="t" style="left:424px;top:262px;width:24px;text-align:center;font-size:6px;color:#333;transform:rotate(-90deg)">y [µs]</div><div class="t" style="left:616px;top:452px;width:40px;text-align:center;font-size:6.5px;color:#333">x [mm]</div>
<div class="a" style="left:473px;top:421px;width:62px;height:9px;background:#fff"></div>
<div class="t" style="left:474px;top:421.5px;font-size:7.6px;color:#111;font-weight:bold;letter-spacing:-0.35px">mouse: - mm, - µs</div>
<div class="a" style="left:0px;top:327px;width:43px;height:1px;background:rgba(255,255,255,0.85)"></div>
<div class="a" style="left:43px;top:327px;width:139px;height:1px;background:rgba(255,255,255,0.95)"></div>
<div class="a" style="left:182px;top:327px;width:225px;height:1px;background:rgba(255,200,200,0.35)"></div>
<div class="a" style="left:407px;top:327px;width:21px;height:1px;background:rgba(255,255,255,0.6)"></div>
<div class="a" style="left:428px;top:327px;width:387px;height:1px;background:rgba(200,200,200,0.6)"></div>
<div class="a" style="left:815px;top:327px;width:18px;height:1px;background:rgba(255,255,255,0.6)"></div>
</body></html>
